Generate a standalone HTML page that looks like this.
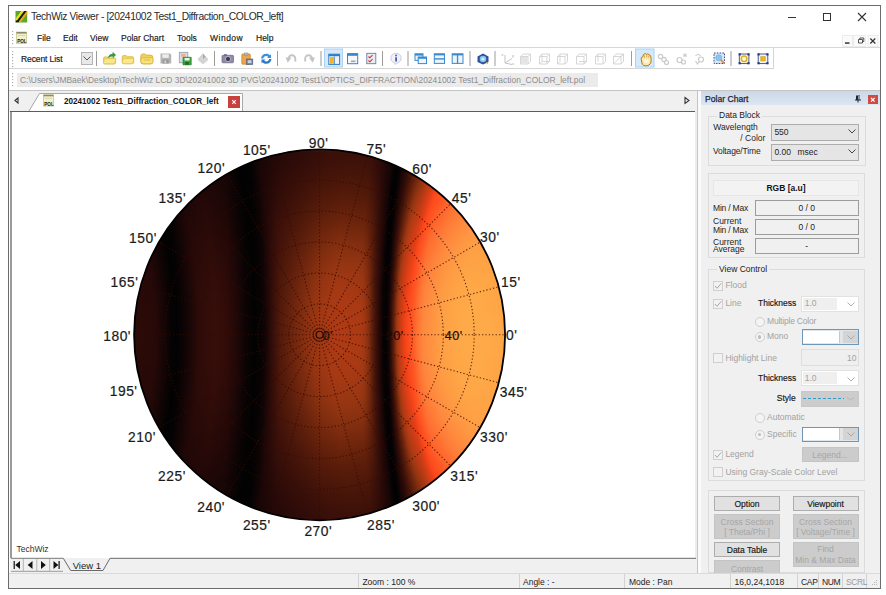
<!DOCTYPE html>
<html><head><meta charset="utf-8">
<style>
*{box-sizing:border-box;margin:0;padding:0}
html,body{width:886px;height:595px;overflow:hidden;background:#fff;font-family:"Liberation Sans",sans-serif;color:#1e1e1e}
.a{position:absolute}
.t{position:absolute;white-space:nowrap;line-height:1;font-size:8.5px}
.m{color:#141414;-webkit-text-stroke:0.15px #141414}
.g{color:#a2a2a2}
.gb{position:absolute;border:1px solid #dcdcdc}
.cb{position:absolute;width:10px;height:10px;border:1px solid #cfcfcf;background:#f2f2f2}
.rd{position:absolute;width:10px;height:10px;border:1px solid #cfcfcf;border-radius:50%;background:#f4f4f4}
.btn{position:absolute;border:1px solid #adadad;background:#e1e1e1;font-size:8.5px;line-height:1;text-align:center;color:#141414}
.dbtn{position:absolute;border:1px solid #c4c4c4;background:#cccccc;font-size:8.5px;line-height:1.25;text-align:center;color:#a6a6a6}
.sep{position:absolute;width:1px;background:#d2d2d2}
.tsep{position:absolute;top:51px;width:1px;height:15px;background:#a0a0a0}
</style></head><body>
<!-- window frame -->
<div class="a" style="left:8px;top:5px;width:873px;height:584px;border:1px solid #6c6c6c;background:#fff"></div>
<!-- ===== title bar ===== -->
<svg class="a" style="left:15px;top:11px" width="13" height="12" viewBox="0 0 13 12">
<defs><clipPath id="tic"><rect x="0.5" y="0" width="11.7" height="11.5"/></clipPath></defs>
<g clip-path="url(#tic)">
<rect x="0" y="0" width="13" height="12" fill="#5aa82a"/>
<path d="M-2 11L7-1h3L1 11z" fill="#e8e020"/>
<path d="M1 11L10-1h2.5L3.5 11z" fill="#1a1a08"/>
<path d="M3.5 11L12.5-1H15L6 11z" fill="#f0a020"/>
<path d="M-2 3L2-1H0z" fill="#8ad040"/>
<rect x="0.5" y="9.5" width="3" height="2" fill="#101008"/>
</g>
</svg>

<div class="t" style="left:31px;top:12px;font-size:10.3px;letter-spacing:-0.4px;color:#2a2a2a">TechWiz Viewer - [20241002 Test1_Diffraction_COLOR_left]</div>
<div class="a" style="left:788px;top:16.5px;width:8px;height:1px;background:#333"></div>
<div class="a" style="left:823px;top:13px;width:8px;height:8px;border:1px solid #333"></div>
<svg class="a" style="left:857px;top:12px" width="10" height="10"><path d="M1 1L9 9M9 1L1 9" stroke="#333" stroke-width="1.1"/></svg>
<!-- ===== menu bar ===== -->
<div class="a" style="left:9px;top:47px;width:871px;height:1px;background:#d8d8d8"></div>
<svg class="a" style="left:15px;top:31px" width="15" height="14" viewBox="0 0 15 14">
<rect x="1.5" y="1" width="10" height="11.5" fill="#f2f0c8" stroke="#c8c890" stroke-width="0.8"/>
<rect x="1.5" y="1" width="10" height="1.6" fill="#8a8a70"/>
<rect x="3" y="4" width="7" height="1" fill="#d8d8a8"/>
<text x="2.2" y="12.2" font-family="Liberation Sans" font-weight="bold" font-size="4.6" fill="#111">POL</text>
</svg>

<div class="t m" style="left:37px;top:34.3px">File</div>
<div class="t m" style="left:63px;top:34.3px">Edit</div>
<div class="t m" style="left:90px;top:34.3px">View</div>
<div class="t m" style="left:121px;top:34.3px">Polar Chart</div>
<div class="t m" style="left:177px;top:34.3px">Tools</div>
<div class="t m" style="left:210px;top:34.3px;letter-spacing:0.5px">Window</div>
<div class="t m" style="left:256px;top:34.3px">Help</div>
<svg class="a" style="left:840px;top:34px" width="40" height="14" viewBox="0 0 40 14">
<rect x="2.5" y="1.5" width="10" height="11" fill="#fafafa" stroke="#ececec" stroke-width="1"/>
<rect x="13.5" y="1.5" width="12" height="11" fill="#fafafa" stroke="#ececec" stroke-width="1"/>
<rect x="28" y="1.5" width="10" height="11" fill="#fafafa" stroke="#ececec" stroke-width="1"/>
<rect x="5" y="8.3" width="4.5" height="1.5" fill="#333"/>
<path d="M18.5 5.5h4v3.5h-4zM19.8 5.5V4h4v3.5h-1.3" fill="none" stroke="#444" stroke-width="0.9"/>
<path d="M30.3 4.5l5 5M35.3 4.5l-5 5" stroke="#333" stroke-width="1.2"/>
</svg>

<!-- ===== toolbar ===== -->
<div class="a" style="left:9px;top:68px;width:765px;height:1px;background:#d4d4d4"></div>
<div class="a" style="left:773px;top:48px;width:1px;height:21px;background:#d4d4d4"></div>
<div class="t m" style="left:21px;top:54.7px;letter-spacing:-0.1px">Recent List</div>
<div class="a" style="left:81px;top:52px;width:12px;height:13px;border:1px solid #b4b4b4;background:#e8e8e8"></div>
<svg class="a" style="left:83px;top:56px" width="8" height="5"><path d="M0.5 0.5L4 4L7.5 0.5" fill="none" stroke="#555" stroke-width="1"/></svg>
<svg class="a" style="left:0;top:0" width="886" height="70" viewBox="0 0 886 70">
<!-- separators -->
<g fill="#9c9c9c"><rect x="96" y="51" width="1" height="15"/><rect x="214" y="51" width="1" height="15"/><rect x="277" y="51" width="1" height="15"/><rect x="320.5" y="51" width="1" height="15"/><rect x="382" y="51" width="1" height="15"/><rect x="407.5" y="51" width="1" height="15"/><rect x="469.5" y="51" width="1" height="15"/><rect x="494.5" y="51" width="1" height="15"/><rect x="631" y="51" width="1" height="15"/><rect x="730.5" y="51" width="1" height="15"/></g>
<!-- highlighted buttons -->
<rect x="324.5" y="49" width="18" height="18" fill="#d5e9fa" stroke="#a9d2f3" stroke-width="1"/>
<rect x="635.5" y="49" width="18.5" height="18" fill="#d5e9fa" stroke="#a9d2f3" stroke-width="1"/>
<!-- 1 folder + green arrow -->
<path d="M103.6 58.2q0-1.3 1.3-1.3h2.6l1.2 1h5.6q1.3 0 1.3 1.3v3.6q0 1.2-1.3 1.2h-9.4q-1.3 0-1.3-1.2z" fill="#f4d862" stroke="#d8b43a" stroke-width="0.8"/>
<path d="M103.6 62.5l0.8-3q0.3-0.8 1.1-0.8h9.6q1 0 0.7 0.9l-0.9 2.9q-0.3 1.2-1.3 1.2h-8.8q-1.3 0-1.2-1.2z" fill="#fae88c" stroke="#dcbc48" stroke-width="0.6"/>
<path d="M108.3 57.6q0.8-3.6 4.6-3.6l0-1.6 2.8 2.6-2.8 2.6 0-1.6q-2.4 0-4.6 1.6z" fill="#3c9c3a" stroke="#26802a" stroke-width="0.5"/>
<!-- 2 folder -->
<path d="M122.2 57q0-1.4 1.4-1.4h2.4l1.3 1.1h5q1.4 0 1.4 1.4v4.3q0 1.3-1.4 1.3h-8.7q-1.4 0-1.4-1.3z" fill="#f4d862" stroke="#d8b43a" stroke-width="0.8"/>
<path d="M122.3 62.6l0.6-3.2q0.2-0.9 1.1-0.9h8.6q1 0 0.9 0.9l-0.4 3.2q-0.2 1.1-1.3 1.1h-8.2q-1.4 0-1.3-1.1z" fill="#fae88c" stroke="#dcbc48" stroke-width="0.6"/>
<!-- 3 folder stacked -->
<path d="M140.8 56.2q0-2.3 2.3-2.3h1.8l1.3 1.2h4.4q2.2 0 2.2 2.2v4.4q0 2.2-2.2 2.2h-7.5q-2.3 0-2.3-2.2z" fill="#f0d256" stroke="#d4ac30" stroke-width="0.8"/>
<path d="M141 59.3q0-1.5 1.5-1.5h9q1.5 0 1.5 1.5v2.3q0 2.2-2.2 2.2h-7.6q-2.2 0-2.2-2.2z" fill="#f8e47c" stroke="#d4ac30" stroke-width="0.7"/>
<rect x="143.6" y="59.4" width="6.8" height="1.2" fill="#e2c040"/>
<!-- 4 floppy gray -->
<path d="M160.5 53.5h9.5l1.2 1.2v8.8h-10.7z" fill="#b4b4b4"/>
<rect x="162.3" y="54.3" width="6.5" height="3.6" fill="#ededed"/>
<rect x="162.5" y="59.5" width="6.2" height="4" fill="#9a9a9a"/>
<rect x="164.5" y="60.5" width="1.6" height="2.5" fill="#d8d8d8"/>
<!-- 5 save as -->
<rect x="179.3" y="52.3" width="8.5" height="10.5" fill="#d8dde8" stroke="#8d9ab0" stroke-width="0.8"/>
<rect x="181" y="53.8" width="4.5" height="3" fill="#f0b090"/>
<path d="M183 57.3h8.2v7.5h-8.2z" fill="#3aa33a" stroke="#23801f" stroke-width="0.7"/>
<rect x="184.6" y="58" width="5" height="2.5" fill="#e8f5e8"/>
<rect x="185.2" y="62" width="3.6" height="2.8" fill="#1f6e1f"/>
<!-- 6 gray diamond -->
<path d="M203 53.7l4.5 5.2-4.5 4.3-4.6-4.3z" fill="#d4d4d4" stroke="#bdbdbd" stroke-width="0.6"/>
<path d="M198.6 59l4.4 4.2 4.4-4.2v1.8l-4.4 3-4.4-3z" fill="#ececec" stroke="#c4c4c4" stroke-width="0.5"/>
<path d="M203 53.7l2.5 3-2.5 2.4z" fill="#a8a8a8"/>
<!-- 7 camera -->
<rect x="222" y="55.3" width="11.5" height="7.5" rx="1" fill="#8e8aa8" stroke="#6a6684" stroke-width="0.7"/>
<rect x="224" y="54.2" width="3" height="1.5" fill="#6a6684"/>
<circle cx="228" cy="59" r="2.6" fill="#3a3850" stroke="#c8c8d8" stroke-width="0.8"/>
<!-- 8 clipboard -->
<rect x="241.8" y="54" width="8.5" height="10.2" rx="0.8" fill="#eaa64a" stroke="#c9832a" stroke-width="0.7"/>
<rect x="244.2" y="53" width="3.8" height="2.2" fill="#b8b8b8" stroke="#888" stroke-width="0.5"/>
<rect x="246.5" y="59" width="6.3" height="5.5" fill="#6f7c9c" stroke="#4c587a" stroke-width="0.6"/>
<rect x="247.7" y="60.2" width="3.8" height="3" fill="#c9d0e2"/>
<!-- 9 refresh -->
<path d="M261 58.5c0.3-3 2.6-4.8 5.2-4.8 1.6 0 2.9 0.6 3.8 1.6l1-1.2v4h-4l1.3-1.2c-0.6-0.6-1.3-0.9-2.1-0.9-1.6 0-2.7 1.1-2.9 2.5z" fill="#3a8fe0"/>
<path d="M271.5 59c-0.3 3-2.6 4.8-5.2 4.8-1.6 0-2.9-0.6-3.8-1.6l-1 1.2v-4h4l-1.3 1.2c0.6 0.6 1.3 0.9 2.1 0.9 1.6 0 2.7-1.1 2.9-2.5z" fill="#2a78cc"/>
<!-- 10 undo / 11 redo gray -->
<path d="M295.3 61.5V58.6A3.4 3.4 0 0 0 288.5 58.6" fill="none" stroke="#c4c4c4" stroke-width="1.9"/>
<path d="M285.6 57.6L291.6 57.6L287.8 62.8Z" fill="#c4c4c4"/>
<path d="M305.2 61.5V58.6A3.4 3.4 0 0 1 312 58.6" fill="none" stroke="#c4c4c4" stroke-width="1.9"/>
<path d="M314.9 57.6L308.9 57.6L312.7 62.8Z" fill="#c4c4c4"/>
<!-- 12 layout icon -->
<rect x="328.8" y="54.2" width="10.8" height="10.2" fill="#eef4fb" stroke="#2f7dc8" stroke-width="1"/>
<rect x="328.8" y="54.2" width="10.8" height="2" fill="#2f7dc8"/>
<rect x="330" y="57" width="3.6" height="6.8" fill="#f2b430"/>
<rect x="333.8" y="56.5" width="0.9" height="7.6" fill="#2f7dc8"/>
<!-- 13 window icon -->
<rect x="347.5" y="53.6" width="10.2" height="10.1" fill="#f4f8fc" stroke="#3a86cc" stroke-width="1"/>
<rect x="347.5" y="53.6" width="10.2" height="2.2" fill="#3a86cc"/>
<rect x="351" y="60.5" width="4.5" height="1.6" fill="#9aaabb"/>
<!-- 14 checklist -->
<rect x="366.8" y="53.3" width="9" height="10.4" fill="#e8ecf4" stroke="#6a7ea8" stroke-width="0.9"/>
<path d="M368.5 56.5l1.3 1.3 2.7-2.6M368.5 60.5l1.3 1.3 2.7-2.6" fill="none" stroke="#d03030" stroke-width="1.1"/>
<!-- 15 info -->
<path d="M396 53.2c3 0 5.2 2.2 5.2 5 0 2.6-2 4.6-4.6 5l-1.5 1.3v-1.4c-2.4-0.5-4.3-2.4-4.3-4.9 0-2.8 2.2-5 5.2-5z" fill="#f2f0f8" stroke="#c0b8d0" stroke-width="0.7"/>
<rect x="395.2" y="57.3" width="1.8" height="4.2" fill="#3a62b8"/><circle cx="396.1" cy="55.5" r="0.95" fill="#3a62b8"/>
<!-- 16 cascade -->
<rect x="415" y="53.8" width="8" height="6.6" fill="#eef4fb" stroke="#3a8ad0" stroke-width="1"/>
<rect x="415" y="53.8" width="8" height="1.8" fill="#3a8ad0"/>
<rect x="418.2" y="57" width="8.3" height="6.6" fill="#eef4fb" stroke="#3a8ad0" stroke-width="1"/>
<rect x="418.2" y="57" width="8.3" height="1.8" fill="#3a8ad0"/>
<!-- 17 horizontal tile -->
<rect x="434.3" y="53.8" width="10.2" height="9.6" fill="#eef4fb" stroke="#3a8ad0" stroke-width="1"/>
<rect x="434.3" y="53.8" width="10.2" height="1.6" fill="#3a8ad0"/>
<rect x="434.3" y="58.2" width="10.2" height="1.4" fill="#3a8ad0"/>
<!-- 18 vertical tile -->
<rect x="452.2" y="53.8" width="10.8" height="9.6" fill="#eef4fb" stroke="#3a8ad0" stroke-width="1"/>
<rect x="452.2" y="53.8" width="10.8" height="1.6" fill="#3a8ad0"/>
<rect x="456.9" y="54" width="1.3" height="9.4" fill="#3a8ad0"/>
<!-- 19 globe -->
<path d="M483 53.5l5.5 3v5.5l-5.5 2.5-5.5-2.5v-5.5z" fill="#2f4f9a"/>
<circle cx="483" cy="59" r="3.3" fill="#7fc4ee"/>
<circle cx="483" cy="59" r="1.6" fill="#d8f0ff"/>
<path d="M486 62l2.5 1-1.5 1.3z" fill="#e6a030"/>
<!-- 20 axis -->
<g stroke="#bdbdbd" stroke-width="0.9" fill="none"><path d="M505 55v8l7-4.5M505 63l7 1.5"/></g>
<g fill="#a8a8a8" font-size="4" font-family="Liberation Sans"><text x="501.5" y="55.5">z</text><text x="512" y="57">y</text><text x="512" y="65">x</text></g>
<!-- cubes -->
<g fill="none" stroke="#cdcdcd" stroke-width="0.8">
<path d="M520.5 56.5h7.5v7.5h-7.5zM520.5 56.5l2.5-2.5h7.5l-2.5 2.5M530.5 54v7.5l-2.5 2.5"/>
<path d="M539.5 56.5h7.5v7.5h-7.5zM539.5 56.5l2.5-2.5h7.5l-2.5 2.5M549.5 54v7.5l-2.5 2.5M542 54v7.5l-2.5 2.5M542 61.5h7.5"/>
<path d="M557.5 56.5h7.5v7.5h-7.5zM557.5 56.5l2.5-2.5h7.5l-2.5 2.5M567.5 54v7.5l-2.5 2.5M560 54v7.5l-2.5 2.5"/>
<path d="M576.5 56.5h7.5v7.5h-7.5zM576.5 56.5l2.5-2.5h7.5l-2.5 2.5M586.5 54v7.5l-2.5 2.5M579 61.5h7.5"/>
<path d="M595.5 56.5h7.5v7.5h-7.5zM595.5 56.5l2.5-2.5h7.5l-2.5 2.5M605.5 54v7.5l-2.5 2.5M598 54v7.5"/>
<path d="M613.5 56.5h7.5v7.5h-7.5zM613.5 56.5l2.5-2.5h7.5l-2.5 2.5M623.5 54v7.5l-2.5 2.5M613.5 64l10-10"/>
</g>
<g fill="#e4e4e4"><rect x="521" y="57" width="6.5" height="6.5"/></g>
<!-- 27 hand -->
<path d="M641.2 59.3q-0.4-2.6 1.6-2.4q0.2-3 2.1-3.2q1-0.2 1.6 0.6q1.4-0.9 2.4 0.3q2.2 0.3 2 3.2l0.3 2.6q0.2 3.2-2.2 4.6q-1.6 0.9-3.4 0.8q-2.2-0.1-3.4-1.8z" fill="#ffe8a8" stroke="#b07c1c" stroke-width="1"/>
<path d="M644.5 57.8v-2.4M646.7 57.5v-2.6M648.7 57.8v-2.2" stroke="#c89030" stroke-width="0.7"/>
<ellipse cx="646.3" cy="61.3" rx="2.6" ry="1.8" fill="#fff6dc"/>
<!-- 28-30 gray -->
<g fill="none" stroke="#cbcbcb" stroke-width="1.2">
<circle cx="660.5" cy="56.5" r="2.2"/><circle cx="664" cy="59.5" r="2.2"/><circle cx="666.5" cy="62.5" r="2"/>
<circle cx="679.5" cy="60" r="2.5"/><circle cx="683.5" cy="62" r="2"/><path d="M684 53.5v3.5M686 53.5v3.5M684 55.3h2"/>
<path d="M695.5 56c1.5-2 4-2 5 0"/><circle cx="701" cy="59.5" r="2.5"/><path d="M695.5 61l2 3 1.5-2"/>
</g>
<!-- 31 zoom rect -->
<rect x="714" y="53" width="10.5" height="10.5" fill="#d4e8f8" stroke="#2a3a80" stroke-width="0.9" stroke-dasharray="1.6 1.2"/>
<circle cx="718.8" cy="57.8" r="3" fill="#8cc6ee" stroke="#6aa8d8" stroke-width="0.6"/>
<path d="M720.8 59.8l3.5 3.5" stroke="#e08a40" stroke-width="1.8"/>
<!-- 32 fit1 -->
<rect x="739.3" y="54" width="9.6" height="9.6" fill="#fdf6d0" stroke="#3a4a8a" stroke-width="0.9"/>
<circle cx="744.1" cy="58.8" r="2.8" fill="none" stroke="#d8b020" stroke-width="1.4"/>
<g fill="#2a3a80"><rect x="738.6" y="53.3" width="2.2" height="2.2"/><rect x="747.4" y="53.3" width="2.2" height="2.2"/><rect x="738.6" y="62.1" width="2.2" height="2.2"/><rect x="747.4" y="62.1" width="2.2" height="2.2"/></g>
<!-- 33 fit2 -->
<rect x="758.2" y="54" width="9.6" height="9.6" fill="#f4f4f8" stroke="#3a4a8a" stroke-width="0.9"/>
<rect x="760.8" y="56.6" width="4.4" height="4.4" fill="#e8b820" stroke="#c89a10" stroke-width="0.5"/>
<g fill="#2a3a80"><rect x="757.5" y="53.3" width="2.2" height="2.2"/><rect x="766.3" y="53.3" width="2.2" height="2.2"/><rect x="757.5" y="62.1" width="2.2" height="2.2"/><rect x="766.3" y="62.1" width="2.2" height="2.2"/></g>
</svg>

<!-- ===== path bar ===== -->
<div class="a" style="left:17px;top:73px;width:581px;height:14px;background:#ebebeb"></div>
<div class="t" style="left:20px;top:75.8px;font-size:8.45px;color:#8c8c8c">C:\Users\JMBaek\Desktop\TechWiz LCD 3D\20241002 3D PVG\20241002 Test1\OPTICS_DIFFRACTION\20241002 Test1_Diffraction_COLOR_left.pol</div>
<!-- grippers -->
<svg class="a" style="left:11px;top:30px" width="4" height="60">
<g fill="#b0b0b0"><rect x="1" y="1" width="1.2" height="1.2"/><rect x="1" y="4" width="1.2" height="1.2"/><rect x="1" y="7" width="1.2" height="1.2"/><rect x="1" y="10" width="1.2" height="1.2"/><rect x="1" y="13" width="1.2" height="1.2"/>
<rect x="1" y="21" width="1.2" height="1.2"/><rect x="1" y="24" width="1.2" height="1.2"/><rect x="1" y="27" width="1.2" height="1.2"/><rect x="1" y="30" width="1.2" height="1.2"/><rect x="1" y="33" width="1.2" height="1.2"/><rect x="1" y="36" width="1.2" height="1.2"/>
<rect x="1" y="43" width="1.2" height="1.2"/><rect x="1" y="46" width="1.2" height="1.2"/><rect x="1" y="49" width="1.2" height="1.2"/><rect x="1" y="52" width="1.2" height="1.2"/><rect x="1" y="55" width="1.2" height="1.2"/></g></svg>
<div class="a" style="left:9px;top:90px;width:871px;height:1px;background:#c4c4c4"></div>
<!-- ===== tab bar ===== -->
<div class="a" style="left:9px;top:91px;width:688px;height:21px;background:#f0f0f0"></div>
<svg class="a" style="left:9px;top:91px" width="688" height="21">
<path d="M6 9.5L9 7V12Z" fill="none" stroke="#333" stroke-width="1.1"/>
<path d="M20 20L30.5 2.5H233.5V20" fill="#fff" stroke="#a8a8a8" stroke-width="1"/>
<path d="M676 6.5L680 9.5L676 12.5Z" fill="none" stroke="#333" stroke-width="1.1"/>
</svg>
<div class="t" style="left:64px;top:97.6px;font-size:8.15px;font-weight:bold;color:#141414">20241002 Test1_Diffraction_COLOR_left</div>
<div class="a" style="left:228px;top:96px;width:12px;height:12px;background:#c9403c"></div>
<svg class="a" style="left:228px;top:96px" width="12" height="12"><path d="M4.2 4.2L7.8 7.8M7.8 4.2L4.2 7.8" stroke="#fff" stroke-width="1.1"/></svg>
<svg class="a" style="left:42px;top:94px" width="14" height="13" viewBox="0 0 14 13">
<rect x="1.5" y="0.8" width="10" height="11.3" fill="#f2f0c8" stroke="#c8c890" stroke-width="0.8"/>
<rect x="1.5" y="0.8" width="10" height="1.5" fill="#8a8a70"/>
<rect x="3" y="3.8" width="7" height="1" fill="#d8d8a8"/>
<text x="2.3" y="11.6" font-family="Liberation Sans" font-weight="bold" font-size="4.6" fill="#111">POL</text>
</svg>

<div class="a" style="left:10px;top:110.5px;width:685px;height:1.5px;background:#5c5c5c"></div>
<!-- ===== document area ===== -->
<div class="a" style="left:10px;top:112px;width:2px;height:446px;background:#9a9a9a"></div>
<div class="a" style="left:694.5px;top:112px;width:2.5px;height:446px;background:#ececec"></div>
<svg class="a" style="left:0;top:0" width="886" height="595" viewBox="0 0 886 595">
<defs><clipPath id="cc"><circle cx="319.6" cy="334.8" r="185.5"/></clipPath>
<filter id="vb" x="-5%" y="-5%" width="110%" height="110%" color-interpolation-filters="sRGB"><feGaussianBlur stdDeviation="0 1.5"/></filter>
<linearGradient id="g0" gradientUnits="userSpaceOnUse" x1="133.1" x2="506.1" y1="0" y2="0"><stop offset="0.000" stop-color="#0a0102"/><stop offset="0.023" stop-color="#000000"/><stop offset="0.046" stop-color="#020000"/><stop offset="0.088" stop-color="#150304"/><stop offset="0.184" stop-color="#180404"/><stop offset="0.235" stop-color="#130304"/><stop offset="0.276" stop-color="#000000"/><stop offset="0.306" stop-color="#020000"/><stop offset="0.322" stop-color="#0c0202"/><stop offset="0.334" stop-color="#160304"/><stop offset="0.413" stop-color="#270806"/><stop offset="0.531" stop-color="#370d07"/><stop offset="0.622" stop-color="#390e07"/><stop offset="0.645" stop-color="#350c07"/><stop offset="0.668" stop-color="#260706"/><stop offset="0.689" stop-color="#170404"/><stop offset="0.698" stop-color="#110303"/><stop offset="0.708" stop-color="#010000"/><stop offset="0.718" stop-color="#000000"/><stop offset="0.724" stop-color="#090102"/><stop offset="0.729" stop-color="#150304"/><stop offset="0.740" stop-color="#200605"/><stop offset="0.783" stop-color="#611e09"/><stop offset="0.798" stop-color="#77280c"/><stop offset="0.816" stop-color="#a53812"/><stop offset="0.835" stop-color="#ca3b13"/><stop offset="0.881" stop-color="#f64318"/><stop offset="0.898" stop-color="#ff491b"/><stop offset="0.981" stop-color="#ff642a"/><stop offset="1.000" stop-color="#ff642a"/></linearGradient>
<linearGradient id="g1" gradientUnits="userSpaceOnUse" x1="133.1" x2="506.1" y1="0" y2="0"><stop offset="0.000" stop-color="#0c0202"/><stop offset="0.025" stop-color="#000000"/><stop offset="0.048" stop-color="#020000"/><stop offset="0.091" stop-color="#150304"/><stop offset="0.184" stop-color="#190404"/><stop offset="0.236" stop-color="#130304"/><stop offset="0.277" stop-color="#000000"/><stop offset="0.306" stop-color="#010000"/><stop offset="0.323" stop-color="#0c0202"/><stop offset="0.335" stop-color="#160404"/><stop offset="0.409" stop-color="#270806"/><stop offset="0.528" stop-color="#380e07"/><stop offset="0.614" stop-color="#3a0e07"/><stop offset="0.642" stop-color="#360d07"/><stop offset="0.666" stop-color="#270806"/><stop offset="0.688" stop-color="#180404"/><stop offset="0.697" stop-color="#120303"/><stop offset="0.706" stop-color="#020000"/><stop offset="0.717" stop-color="#000000"/><stop offset="0.723" stop-color="#090102"/><stop offset="0.728" stop-color="#150304"/><stop offset="0.739" stop-color="#210605"/><stop offset="0.783" stop-color="#652009"/><stop offset="0.796" stop-color="#7a290c"/><stop offset="0.814" stop-color="#a63812"/><stop offset="0.832" stop-color="#cb3b13"/><stop offset="0.866" stop-color="#ed4017"/><stop offset="0.887" stop-color="#fd471a"/><stop offset="0.968" stop-color="#ff6329"/><stop offset="1.000" stop-color="#ff662b"/></linearGradient>
<linearGradient id="g2" gradientUnits="userSpaceOnUse" x1="133.1" x2="506.1" y1="0" y2="0"><stop offset="0.000" stop-color="#0d0203"/><stop offset="0.028" stop-color="#000000"/><stop offset="0.051" stop-color="#020000"/><stop offset="0.094" stop-color="#160404"/><stop offset="0.184" stop-color="#190404"/><stop offset="0.237" stop-color="#130304"/><stop offset="0.279" stop-color="#000000"/><stop offset="0.307" stop-color="#020000"/><stop offset="0.323" stop-color="#0b0102"/><stop offset="0.335" stop-color="#160404"/><stop offset="0.405" stop-color="#270806"/><stop offset="0.525" stop-color="#390e07"/><stop offset="0.606" stop-color="#3b0f07"/><stop offset="0.639" stop-color="#380e07"/><stop offset="0.665" stop-color="#280806"/><stop offset="0.686" stop-color="#180404"/><stop offset="0.696" stop-color="#120303"/><stop offset="0.705" stop-color="#020000"/><stop offset="0.716" stop-color="#000000"/><stop offset="0.721" stop-color="#090102"/><stop offset="0.727" stop-color="#150304"/><stop offset="0.737" stop-color="#210605"/><stop offset="0.782" stop-color="#68220a"/><stop offset="0.795" stop-color="#7e2b0d"/><stop offset="0.811" stop-color="#a73812"/><stop offset="0.831" stop-color="#cf3b13"/><stop offset="0.874" stop-color="#f94519"/><stop offset="0.890" stop-color="#ff4a1c"/><stop offset="0.973" stop-color="#ff672b"/><stop offset="1.000" stop-color="#ff682c"/></linearGradient>
<linearGradient id="g3" gradientUnits="userSpaceOnUse" x1="133.1" x2="506.1" y1="0" y2="0"><stop offset="0.000" stop-color="#0e0203"/><stop offset="0.031" stop-color="#000000"/><stop offset="0.054" stop-color="#020000"/><stop offset="0.097" stop-color="#160404"/><stop offset="0.184" stop-color="#1a0405"/><stop offset="0.239" stop-color="#140304"/><stop offset="0.280" stop-color="#000000"/><stop offset="0.308" stop-color="#020000"/><stop offset="0.324" stop-color="#0c0202"/><stop offset="0.336" stop-color="#160404"/><stop offset="0.402" stop-color="#270806"/><stop offset="0.524" stop-color="#3a0e07"/><stop offset="0.602" stop-color="#3d0f07"/><stop offset="0.639" stop-color="#390e07"/><stop offset="0.664" stop-color="#2a0806"/><stop offset="0.685" stop-color="#190404"/><stop offset="0.694" stop-color="#130304"/><stop offset="0.704" stop-color="#020000"/><stop offset="0.714" stop-color="#000000"/><stop offset="0.720" stop-color="#090102"/><stop offset="0.725" stop-color="#150304"/><stop offset="0.736" stop-color="#220606"/><stop offset="0.780" stop-color="#6c230a"/><stop offset="0.794" stop-color="#822d0e"/><stop offset="0.808" stop-color="#a83812"/><stop offset="0.828" stop-color="#d03b14"/><stop offset="0.862" stop-color="#f44318"/><stop offset="0.879" stop-color="#fe481b"/><stop offset="0.968" stop-color="#ff692c"/><stop offset="1.000" stop-color="#ff6a2d"/></linearGradient>
<linearGradient id="g4" gradientUnits="userSpaceOnUse" x1="133.1" x2="506.1" y1="0" y2="0"><stop offset="0.000" stop-color="#100203"/><stop offset="0.034" stop-color="#000000"/><stop offset="0.056" stop-color="#020000"/><stop offset="0.098" stop-color="#160404"/><stop offset="0.181" stop-color="#1a0505"/><stop offset="0.239" stop-color="#140304"/><stop offset="0.282" stop-color="#000000"/><stop offset="0.310" stop-color="#020000"/><stop offset="0.326" stop-color="#0c0202"/><stop offset="0.338" stop-color="#160404"/><stop offset="0.401" stop-color="#280806"/><stop offset="0.523" stop-color="#3c0f07"/><stop offset="0.598" stop-color="#3e1007"/><stop offset="0.638" stop-color="#3b0f07"/><stop offset="0.662" stop-color="#2b0906"/><stop offset="0.684" stop-color="#190405"/><stop offset="0.693" stop-color="#130304"/><stop offset="0.702" stop-color="#020000"/><stop offset="0.710" stop-color="#000000"/><stop offset="0.716" stop-color="#030001"/><stop offset="0.724" stop-color="#150304"/><stop offset="0.735" stop-color="#230706"/><stop offset="0.779" stop-color="#6f250b"/><stop offset="0.792" stop-color="#872e0e"/><stop offset="0.807" stop-color="#ac3812"/><stop offset="0.827" stop-color="#d43b14"/><stop offset="0.855" stop-color="#f34218"/><stop offset="0.873" stop-color="#fe481b"/><stop offset="0.964" stop-color="#ff6a2d"/><stop offset="1.000" stop-color="#ff6c2e"/></linearGradient>
<linearGradient id="g5" gradientUnits="userSpaceOnUse" x1="133.1" x2="506.1" y1="0" y2="0"><stop offset="0.000" stop-color="#110303"/><stop offset="0.036" stop-color="#000000"/><stop offset="0.058" stop-color="#020000"/><stop offset="0.101" stop-color="#160404"/><stop offset="0.181" stop-color="#1b0505"/><stop offset="0.240" stop-color="#140304"/><stop offset="0.283" stop-color="#000000"/><stop offset="0.310" stop-color="#010000"/><stop offset="0.327" stop-color="#0d0202"/><stop offset="0.339" stop-color="#170404"/><stop offset="0.398" stop-color="#280806"/><stop offset="0.520" stop-color="#3d0f07"/><stop offset="0.594" stop-color="#401107"/><stop offset="0.637" stop-color="#3d0f07"/><stop offset="0.661" stop-color="#2d0906"/><stop offset="0.682" stop-color="#1a0405"/><stop offset="0.692" stop-color="#140304"/><stop offset="0.701" stop-color="#030001"/><stop offset="0.708" stop-color="#000000"/><stop offset="0.713" stop-color="#010000"/><stop offset="0.718" stop-color="#0c0202"/><stop offset="0.723" stop-color="#150304"/><stop offset="0.733" stop-color="#230706"/><stop offset="0.777" stop-color="#73260b"/><stop offset="0.791" stop-color="#8b300f"/><stop offset="0.804" stop-color="#ad3912"/><stop offset="0.826" stop-color="#d83c14"/><stop offset="0.847" stop-color="#f14217"/><stop offset="0.866" stop-color="#fe481b"/><stop offset="0.960" stop-color="#ff6c2e"/><stop offset="1.000" stop-color="#ff6e2f"/></linearGradient>
<linearGradient id="g6" gradientUnits="userSpaceOnUse" x1="133.1" x2="506.1" y1="0" y2="0"><stop offset="0.000" stop-color="#130304"/><stop offset="0.039" stop-color="#000000"/><stop offset="0.060" stop-color="#020000"/><stop offset="0.103" stop-color="#170404"/><stop offset="0.181" stop-color="#1b0505"/><stop offset="0.241" stop-color="#150304"/><stop offset="0.284" stop-color="#000000"/><stop offset="0.311" stop-color="#020000"/><stop offset="0.327" stop-color="#0c0202"/><stop offset="0.339" stop-color="#170404"/><stop offset="0.397" stop-color="#290806"/><stop offset="0.519" stop-color="#3e1007"/><stop offset="0.590" stop-color="#421207"/><stop offset="0.635" stop-color="#3e1007"/><stop offset="0.660" stop-color="#2e0a06"/><stop offset="0.681" stop-color="#1b0505"/><stop offset="0.692" stop-color="#120303"/><stop offset="0.701" stop-color="#020000"/><stop offset="0.712" stop-color="#010000"/><stop offset="0.717" stop-color="#0b0102"/><stop offset="0.723" stop-color="#170404"/><stop offset="0.732" stop-color="#240706"/><stop offset="0.775" stop-color="#74270b"/><stop offset="0.788" stop-color="#8c300f"/><stop offset="0.802" stop-color="#ae3912"/><stop offset="0.823" stop-color="#da3c14"/><stop offset="0.840" stop-color="#f04117"/><stop offset="0.861" stop-color="#fe481b"/><stop offset="0.954" stop-color="#ff6e2f"/><stop offset="0.995" stop-color="#ff7030"/><stop offset="1.000" stop-color="#ff7030"/></linearGradient>
<linearGradient id="g7" gradientUnits="userSpaceOnUse" x1="133.1" x2="506.1" y1="0" y2="0"><stop offset="0.000" stop-color="#140304"/><stop offset="0.042" stop-color="#000000"/><stop offset="0.063" stop-color="#020000"/><stop offset="0.106" stop-color="#170404"/><stop offset="0.181" stop-color="#1c0505"/><stop offset="0.241" stop-color="#150304"/><stop offset="0.286" stop-color="#000000"/><stop offset="0.312" stop-color="#020000"/><stop offset="0.328" stop-color="#0c0202"/><stop offset="0.340" stop-color="#170404"/><stop offset="0.395" stop-color="#290806"/><stop offset="0.517" stop-color="#401107"/><stop offset="0.587" stop-color="#431207"/><stop offset="0.634" stop-color="#401107"/><stop offset="0.658" stop-color="#300a06"/><stop offset="0.680" stop-color="#1b0505"/><stop offset="0.690" stop-color="#130304"/><stop offset="0.700" stop-color="#020000"/><stop offset="0.709" stop-color="#000000"/><stop offset="0.714" stop-color="#070102"/><stop offset="0.720" stop-color="#150304"/><stop offset="0.731" stop-color="#250706"/><stop offset="0.773" stop-color="#78280c"/><stop offset="0.787" stop-color="#913210"/><stop offset="0.802" stop-color="#b53913"/><stop offset="0.824" stop-color="#e33e15"/><stop offset="0.840" stop-color="#f54318"/><stop offset="0.858" stop-color="#ff491c"/><stop offset="0.949" stop-color="#ff6f30"/><stop offset="0.987" stop-color="#ff7231"/><stop offset="1.000" stop-color="#ff7131"/></linearGradient>
<linearGradient id="g8" gradientUnits="userSpaceOnUse" x1="133.1" x2="506.1" y1="0" y2="0"><stop offset="0.000" stop-color="#150304"/><stop offset="0.044" stop-color="#000000"/><stop offset="0.066" stop-color="#020000"/><stop offset="0.109" stop-color="#170404"/><stop offset="0.182" stop-color="#1c0505"/><stop offset="0.243" stop-color="#150304"/><stop offset="0.287" stop-color="#000000"/><stop offset="0.314" stop-color="#020000"/><stop offset="0.330" stop-color="#0d0203"/><stop offset="0.342" stop-color="#180404"/><stop offset="0.394" stop-color="#2a0906"/><stop offset="0.516" stop-color="#411107"/><stop offset="0.584" stop-color="#451307"/><stop offset="0.634" stop-color="#421207"/><stop offset="0.658" stop-color="#300a06"/><stop offset="0.680" stop-color="#1b0505"/><stop offset="0.689" stop-color="#140304"/><stop offset="0.698" stop-color="#020000"/><stop offset="0.708" stop-color="#000000"/><stop offset="0.713" stop-color="#070101"/><stop offset="0.720" stop-color="#170404"/><stop offset="0.729" stop-color="#260706"/><stop offset="0.771" stop-color="#7a290c"/><stop offset="0.786" stop-color="#953310"/><stop offset="0.802" stop-color="#bc3a13"/><stop offset="0.824" stop-color="#e93f16"/><stop offset="0.840" stop-color="#fa4519"/><stop offset="0.855" stop-color="#ff4b1c"/><stop offset="0.941" stop-color="#ff7030"/><stop offset="0.976" stop-color="#ff7432"/><stop offset="1.000" stop-color="#ff7332"/></linearGradient>
<linearGradient id="g9" gradientUnits="userSpaceOnUse" x1="133.1" x2="506.1" y1="0" y2="0"><stop offset="0.000" stop-color="#160404"/><stop offset="0.047" stop-color="#000000"/><stop offset="0.067" stop-color="#020000"/><stop offset="0.111" stop-color="#180404"/><stop offset="0.182" stop-color="#1d0505"/><stop offset="0.244" stop-color="#160404"/><stop offset="0.287" stop-color="#000000"/><stop offset="0.314" stop-color="#020000"/><stop offset="0.330" stop-color="#0c0202"/><stop offset="0.343" stop-color="#180404"/><stop offset="0.393" stop-color="#2b0906"/><stop offset="0.513" stop-color="#421207"/><stop offset="0.580" stop-color="#471407"/><stop offset="0.633" stop-color="#441207"/><stop offset="0.657" stop-color="#320b07"/><stop offset="0.678" stop-color="#1c0505"/><stop offset="0.688" stop-color="#140304"/><stop offset="0.697" stop-color="#030001"/><stop offset="0.704" stop-color="#000000"/><stop offset="0.709" stop-color="#020000"/><stop offset="0.714" stop-color="#0e0203"/><stop offset="0.718" stop-color="#170404"/><stop offset="0.728" stop-color="#260806"/><stop offset="0.765" stop-color="#77280c"/><stop offset="0.784" stop-color="#993511"/><stop offset="0.806" stop-color="#cb3b13"/><stop offset="0.823" stop-color="#ee4117"/><stop offset="0.838" stop-color="#fc461a"/><stop offset="0.855" stop-color="#ff4d1e"/><stop offset="0.929" stop-color="#ff6f2f"/><stop offset="0.966" stop-color="#ff7733"/><stop offset="1.000" stop-color="#ff7533"/></linearGradient>
<linearGradient id="g10" gradientUnits="userSpaceOnUse" x1="133.1" x2="506.1" y1="0" y2="0"><stop offset="0.000" stop-color="#170404"/><stop offset="0.050" stop-color="#000000"/><stop offset="0.070" stop-color="#020000"/><stop offset="0.113" stop-color="#180404"/><stop offset="0.177" stop-color="#1e0505"/><stop offset="0.243" stop-color="#170404"/><stop offset="0.290" stop-color="#000000"/><stop offset="0.315" stop-color="#020000"/><stop offset="0.331" stop-color="#0c0202"/><stop offset="0.343" stop-color="#180404"/><stop offset="0.391" stop-color="#2b0906"/><stop offset="0.512" stop-color="#441307"/><stop offset="0.578" stop-color="#491507"/><stop offset="0.631" stop-color="#461307"/><stop offset="0.655" stop-color="#340c07"/><stop offset="0.677" stop-color="#1d0505"/><stop offset="0.688" stop-color="#130304"/><stop offset="0.696" stop-color="#030001"/><stop offset="0.702" stop-color="#000000"/><stop offset="0.708" stop-color="#020000"/><stop offset="0.713" stop-color="#0d0203"/><stop offset="0.717" stop-color="#170404"/><stop offset="0.727" stop-color="#270806"/><stop offset="0.756" stop-color="#68220a"/><stop offset="0.769" stop-color="#842d0e"/><stop offset="0.784" stop-color="#a13711"/><stop offset="0.816" stop-color="#ea4016"/><stop offset="0.827" stop-color="#f84419"/><stop offset="0.842" stop-color="#ff4a1c"/><stop offset="0.920" stop-color="#ff6e2f"/><stop offset="0.960" stop-color="#ff7835"/><stop offset="1.000" stop-color="#ff7734"/></linearGradient>
<linearGradient id="g11" gradientUnits="userSpaceOnUse" x1="133.1" x2="506.1" y1="0" y2="0"><stop offset="0.000" stop-color="#180404"/><stop offset="0.031" stop-color="#0a0102"/><stop offset="0.051" stop-color="#000000"/><stop offset="0.071" stop-color="#020000"/><stop offset="0.115" stop-color="#180404"/><stop offset="0.178" stop-color="#1e0505"/><stop offset="0.244" stop-color="#170404"/><stop offset="0.290" stop-color="#000000"/><stop offset="0.315" stop-color="#010000"/><stop offset="0.331" stop-color="#0b0102"/><stop offset="0.345" stop-color="#180404"/><stop offset="0.390" stop-color="#2c0906"/><stop offset="0.511" stop-color="#461307"/><stop offset="0.576" stop-color="#4b1607"/><stop offset="0.631" stop-color="#471407"/><stop offset="0.655" stop-color="#340c07"/><stop offset="0.677" stop-color="#1d0505"/><stop offset="0.686" stop-color="#140304"/><stop offset="0.696" stop-color="#020000"/><stop offset="0.705" stop-color="#000000"/><stop offset="0.710" stop-color="#090102"/><stop offset="0.716" stop-color="#170404"/><stop offset="0.725" stop-color="#270806"/><stop offset="0.753" stop-color="#68220a"/><stop offset="0.765" stop-color="#842d0e"/><stop offset="0.783" stop-color="#a53812"/><stop offset="0.812" stop-color="#e93f16"/><stop offset="0.820" stop-color="#f74418"/><stop offset="0.832" stop-color="#ff491b"/><stop offset="0.913" stop-color="#ff6f2f"/><stop offset="0.956" stop-color="#ff7a36"/><stop offset="1.000" stop-color="#ff7935"/></linearGradient>
<linearGradient id="g12" gradientUnits="userSpaceOnUse" x1="133.1" x2="506.1" y1="0" y2="0"><stop offset="0.000" stop-color="#190404"/><stop offset="0.024" stop-color="#0f0203"/><stop offset="0.054" stop-color="#000000"/><stop offset="0.074" stop-color="#020000"/><stop offset="0.118" stop-color="#190404"/><stop offset="0.181" stop-color="#1f0605"/><stop offset="0.244" stop-color="#180404"/><stop offset="0.291" stop-color="#000000"/><stop offset="0.316" stop-color="#020000"/><stop offset="0.332" stop-color="#0c0202"/><stop offset="0.346" stop-color="#190404"/><stop offset="0.390" stop-color="#2d0906"/><stop offset="0.511" stop-color="#481407"/><stop offset="0.575" stop-color="#4d1608"/><stop offset="0.630" stop-color="#4a1507"/><stop offset="0.654" stop-color="#360d07"/><stop offset="0.676" stop-color="#1e0505"/><stop offset="0.685" stop-color="#140304"/><stop offset="0.694" stop-color="#020001"/><stop offset="0.702" stop-color="#000000"/><stop offset="0.708" stop-color="#050101"/><stop offset="0.716" stop-color="#190404"/><stop offset="0.725" stop-color="#2b0906"/><stop offset="0.751" stop-color="#68210a"/><stop offset="0.763" stop-color="#852e0e"/><stop offset="0.783" stop-color="#ac3812"/><stop offset="0.808" stop-color="#e73f16"/><stop offset="0.816" stop-color="#f74419"/><stop offset="0.827" stop-color="#ff491b"/><stop offset="0.905" stop-color="#ff6f2f"/><stop offset="0.952" stop-color="#ff7c37"/><stop offset="1.000" stop-color="#ff7b36"/></linearGradient>
<linearGradient id="g13" gradientUnits="userSpaceOnUse" x1="133.1" x2="506.1" y1="0" y2="0"><stop offset="0.000" stop-color="#1a0405"/><stop offset="0.023" stop-color="#110303"/><stop offset="0.056" stop-color="#000000"/><stop offset="0.075" stop-color="#020000"/><stop offset="0.121" stop-color="#190405"/><stop offset="0.184" stop-color="#1f0605"/><stop offset="0.245" stop-color="#180404"/><stop offset="0.292" stop-color="#000000"/><stop offset="0.318" stop-color="#020000"/><stop offset="0.334" stop-color="#0d0203"/><stop offset="0.347" stop-color="#1a0405"/><stop offset="0.390" stop-color="#2e0a06"/><stop offset="0.509" stop-color="#491507"/><stop offset="0.572" stop-color="#4f1708"/><stop offset="0.629" stop-color="#4c1607"/><stop offset="0.651" stop-color="#3a0e07"/><stop offset="0.674" stop-color="#1f0605"/><stop offset="0.685" stop-color="#130304"/><stop offset="0.693" stop-color="#030001"/><stop offset="0.700" stop-color="#000000"/><stop offset="0.705" stop-color="#020001"/><stop offset="0.710" stop-color="#0f0203"/><stop offset="0.716" stop-color="#1b0505"/><stop offset="0.731" stop-color="#3b0f07"/><stop offset="0.749" stop-color="#6b230a"/><stop offset="0.761" stop-color="#892f0f"/><stop offset="0.782" stop-color="#b03912"/><stop offset="0.806" stop-color="#e83f16"/><stop offset="0.814" stop-color="#f94519"/><stop offset="0.823" stop-color="#ff491c"/><stop offset="0.897" stop-color="#ff6f30"/><stop offset="0.948" stop-color="#ff7e38"/><stop offset="1.000" stop-color="#ff7d37"/></linearGradient>
<linearGradient id="g14" gradientUnits="userSpaceOnUse" x1="133.1" x2="506.1" y1="0" y2="0"><stop offset="0.000" stop-color="#1a0505"/><stop offset="0.021" stop-color="#130304"/><stop offset="0.058" stop-color="#000000"/><stop offset="0.078" stop-color="#020000"/><stop offset="0.122" stop-color="#1a0405"/><stop offset="0.177" stop-color="#200605"/><stop offset="0.237" stop-color="#1a0505"/><stop offset="0.260" stop-color="#110303"/><stop offset="0.292" stop-color="#010000"/><stop offset="0.318" stop-color="#020000"/><stop offset="0.334" stop-color="#0c0202"/><stop offset="0.347" stop-color="#1a0405"/><stop offset="0.389" stop-color="#2e0a06"/><stop offset="0.508" stop-color="#4b1607"/><stop offset="0.571" stop-color="#521808"/><stop offset="0.629" stop-color="#4e1708"/><stop offset="0.651" stop-color="#3b0f07"/><stop offset="0.674" stop-color="#1e0605"/><stop offset="0.684" stop-color="#140304"/><stop offset="0.692" stop-color="#030001"/><stop offset="0.698" stop-color="#000000"/><stop offset="0.705" stop-color="#040001"/><stop offset="0.713" stop-color="#190404"/><stop offset="0.723" stop-color="#2c0906"/><stop offset="0.745" stop-color="#66210a"/><stop offset="0.759" stop-color="#8b300f"/><stop offset="0.779" stop-color="#b03912"/><stop offset="0.802" stop-color="#e63f15"/><stop offset="0.810" stop-color="#f94519"/><stop offset="0.818" stop-color="#ff491c"/><stop offset="0.891" stop-color="#ff7030"/><stop offset="0.945" stop-color="#ff8039"/><stop offset="1.000" stop-color="#ff7f38"/></linearGradient>
<linearGradient id="g15" gradientUnits="userSpaceOnUse" x1="133.1" x2="506.1" y1="0" y2="0"><stop offset="0.000" stop-color="#1b0505"/><stop offset="0.023" stop-color="#140304"/><stop offset="0.060" stop-color="#000000"/><stop offset="0.079" stop-color="#020000"/><stop offset="0.125" stop-color="#1a0505"/><stop offset="0.181" stop-color="#210605"/><stop offset="0.240" stop-color="#1b0505"/><stop offset="0.263" stop-color="#100203"/><stop offset="0.295" stop-color="#000000"/><stop offset="0.319" stop-color="#020000"/><stop offset="0.335" stop-color="#0d0203"/><stop offset="0.349" stop-color="#1a0505"/><stop offset="0.389" stop-color="#2f0a06"/><stop offset="0.507" stop-color="#4d1608"/><stop offset="0.568" stop-color="#541908"/><stop offset="0.627" stop-color="#501808"/><stop offset="0.650" stop-color="#3d0f07"/><stop offset="0.673" stop-color="#1f0605"/><stop offset="0.682" stop-color="#150304"/><stop offset="0.692" stop-color="#020001"/><stop offset="0.700" stop-color="#000000"/><stop offset="0.705" stop-color="#060101"/><stop offset="0.712" stop-color="#180404"/><stop offset="0.721" stop-color="#2c0906"/><stop offset="0.744" stop-color="#69220a"/><stop offset="0.757" stop-color="#8f310f"/><stop offset="0.777" stop-color="#b43913"/><stop offset="0.799" stop-color="#e73f16"/><stop offset="0.807" stop-color="#fa4519"/><stop offset="0.814" stop-color="#ff4a1c"/><stop offset="0.885" stop-color="#ff7130"/><stop offset="0.941" stop-color="#ff823a"/><stop offset="1.000" stop-color="#ff8139"/></linearGradient>
<linearGradient id="g16" gradientUnits="userSpaceOnUse" x1="133.1" x2="506.1" y1="0" y2="0"><stop offset="0.000" stop-color="#1b0505"/><stop offset="0.023" stop-color="#150304"/><stop offset="0.062" stop-color="#000000"/><stop offset="0.082" stop-color="#020000"/><stop offset="0.127" stop-color="#1b0505"/><stop offset="0.185" stop-color="#210605"/><stop offset="0.244" stop-color="#1a0505"/><stop offset="0.269" stop-color="#0d0203"/><stop offset="0.299" stop-color="#000000"/><stop offset="0.319" stop-color="#020000"/><stop offset="0.335" stop-color="#0c0202"/><stop offset="0.350" stop-color="#1b0505"/><stop offset="0.389" stop-color="#300a06"/><stop offset="0.507" stop-color="#4f1708"/><stop offset="0.567" stop-color="#561a08"/><stop offset="0.627" stop-color="#521908"/><stop offset="0.650" stop-color="#3d1007"/><stop offset="0.673" stop-color="#1f0605"/><stop offset="0.682" stop-color="#130304"/><stop offset="0.690" stop-color="#030001"/><stop offset="0.697" stop-color="#000000"/><stop offset="0.702" stop-color="#030001"/><stop offset="0.708" stop-color="#100203"/><stop offset="0.723" stop-color="#340c07"/><stop offset="0.741" stop-color="#68210a"/><stop offset="0.755" stop-color="#8f320f"/><stop offset="0.773" stop-color="#b23912"/><stop offset="0.796" stop-color="#e83f16"/><stop offset="0.804" stop-color="#fb461a"/><stop offset="0.811" stop-color="#ff4b1c"/><stop offset="0.879" stop-color="#ff7131"/><stop offset="0.938" stop-color="#ff843b"/><stop offset="0.999" stop-color="#ff833a"/><stop offset="1.000" stop-color="#ff833a"/></linearGradient>
<linearGradient id="g17" gradientUnits="userSpaceOnUse" x1="133.1" x2="506.1" y1="0" y2="0"><stop offset="0.000" stop-color="#1c0505"/><stop offset="0.024" stop-color="#160404"/><stop offset="0.064" stop-color="#000000"/><stop offset="0.083" stop-color="#020000"/><stop offset="0.130" stop-color="#1b0505"/><stop offset="0.188" stop-color="#220605"/><stop offset="0.245" stop-color="#1a0505"/><stop offset="0.272" stop-color="#0c0202"/><stop offset="0.300" stop-color="#000000"/><stop offset="0.320" stop-color="#020000"/><stop offset="0.336" stop-color="#0d0202"/><stop offset="0.350" stop-color="#1b0505"/><stop offset="0.387" stop-color="#300b06"/><stop offset="0.505" stop-color="#511808"/><stop offset="0.566" stop-color="#591b08"/><stop offset="0.626" stop-color="#551a08"/><stop offset="0.647" stop-color="#421207"/><stop offset="0.672" stop-color="#200605"/><stop offset="0.681" stop-color="#140304"/><stop offset="0.689" stop-color="#030001"/><stop offset="0.696" stop-color="#000000"/><stop offset="0.701" stop-color="#020001"/><stop offset="0.705" stop-color="#0b0102"/><stop offset="0.710" stop-color="#1a0405"/><stop offset="0.720" stop-color="#300b06"/><stop offset="0.740" stop-color="#6a230a"/><stop offset="0.752" stop-color="#90320f"/><stop offset="0.764" stop-color="#a73812"/><stop offset="0.777" stop-color="#c13a13"/><stop offset="0.795" stop-color="#ec4016"/><stop offset="0.802" stop-color="#fc461a"/><stop offset="0.808" stop-color="#ff4b1d"/><stop offset="0.873" stop-color="#ff7231"/><stop offset="0.934" stop-color="#ff863c"/><stop offset="0.991" stop-color="#ff853c"/><stop offset="1.000" stop-color="#ff843b"/></linearGradient>
<linearGradient id="g18" gradientUnits="userSpaceOnUse" x1="133.1" x2="506.1" y1="0" y2="0"><stop offset="0.000" stop-color="#1c0505"/><stop offset="0.025" stop-color="#170404"/><stop offset="0.066" stop-color="#000000"/><stop offset="0.084" stop-color="#020000"/><stop offset="0.133" stop-color="#1c0505"/><stop offset="0.190" stop-color="#230706"/><stop offset="0.247" stop-color="#1b0505"/><stop offset="0.296" stop-color="#010000"/><stop offset="0.320" stop-color="#020000"/><stop offset="0.336" stop-color="#0c0202"/><stop offset="0.351" stop-color="#1c0505"/><stop offset="0.387" stop-color="#310b07"/><stop offset="0.505" stop-color="#531908"/><stop offset="0.566" stop-color="#5b1c08"/><stop offset="0.625" stop-color="#581b08"/><stop offset="0.646" stop-color="#441307"/><stop offset="0.670" stop-color="#220605"/><stop offset="0.681" stop-color="#130304"/><stop offset="0.689" stop-color="#030001"/><stop offset="0.696" stop-color="#000000"/><stop offset="0.701" stop-color="#040001"/><stop offset="0.710" stop-color="#1c0505"/><stop offset="0.724" stop-color="#401107"/><stop offset="0.740" stop-color="#72260b"/><stop offset="0.751" stop-color="#933310"/><stop offset="0.761" stop-color="#a83812"/><stop offset="0.775" stop-color="#c13a13"/><stop offset="0.792" stop-color="#ed4016"/><stop offset="0.799" stop-color="#fc461a"/><stop offset="0.806" stop-color="#ff4c1d"/><stop offset="0.866" stop-color="#ff7231"/><stop offset="0.930" stop-color="#ff883d"/><stop offset="0.980" stop-color="#ff883d"/><stop offset="1.000" stop-color="#ff863c"/></linearGradient>
<linearGradient id="g19" gradientUnits="userSpaceOnUse" x1="133.1" x2="506.1" y1="0" y2="0"><stop offset="0.000" stop-color="#1d0505"/><stop offset="0.025" stop-color="#180404"/><stop offset="0.068" stop-color="#000000"/><stop offset="0.087" stop-color="#020000"/><stop offset="0.134" stop-color="#1c0505"/><stop offset="0.189" stop-color="#230706"/><stop offset="0.243" stop-color="#1c0505"/><stop offset="0.265" stop-color="#120303"/><stop offset="0.296" stop-color="#010000"/><stop offset="0.320" stop-color="#010000"/><stop offset="0.338" stop-color="#0d0202"/><stop offset="0.353" stop-color="#1d0505"/><stop offset="0.387" stop-color="#320b07"/><stop offset="0.504" stop-color="#551a08"/><stop offset="0.563" stop-color="#5e1d09"/><stop offset="0.625" stop-color="#5a1b08"/><stop offset="0.646" stop-color="#451307"/><stop offset="0.669" stop-color="#230706"/><stop offset="0.680" stop-color="#140304"/><stop offset="0.688" stop-color="#030001"/><stop offset="0.694" stop-color="#000000"/><stop offset="0.700" stop-color="#030001"/><stop offset="0.705" stop-color="#110303"/><stop offset="0.718" stop-color="#350c07"/><stop offset="0.736" stop-color="#6b230a"/><stop offset="0.748" stop-color="#933310"/><stop offset="0.757" stop-color="#a73812"/><stop offset="0.772" stop-color="#c13a13"/><stop offset="0.788" stop-color="#e94016"/><stop offset="0.796" stop-color="#fc471a"/><stop offset="0.804" stop-color="#ff4e1e"/><stop offset="0.861" stop-color="#ff7231"/><stop offset="0.926" stop-color="#ff893d"/><stop offset="0.972" stop-color="#ff8b3e"/><stop offset="1.000" stop-color="#ff883d"/></linearGradient>
<linearGradient id="g20" gradientUnits="userSpaceOnUse" x1="133.1" x2="506.1" y1="0" y2="0"><stop offset="0.000" stop-color="#1d0505"/><stop offset="0.027" stop-color="#190404"/><stop offset="0.070" stop-color="#000000"/><stop offset="0.088" stop-color="#020000"/><stop offset="0.137" stop-color="#1d0505"/><stop offset="0.193" stop-color="#240706"/><stop offset="0.247" stop-color="#1c0505"/><stop offset="0.271" stop-color="#0f0203"/><stop offset="0.302" stop-color="#000000"/><stop offset="0.323" stop-color="#020000"/><stop offset="0.338" stop-color="#0c0202"/><stop offset="0.353" stop-color="#1c0505"/><stop offset="0.387" stop-color="#330c07"/><stop offset="0.504" stop-color="#571b08"/><stop offset="0.562" stop-color="#611e09"/><stop offset="0.623" stop-color="#5d1d09"/><stop offset="0.645" stop-color="#481407"/><stop offset="0.669" stop-color="#230706"/><stop offset="0.678" stop-color="#150304"/><stop offset="0.686" stop-color="#040001"/><stop offset="0.693" stop-color="#000000"/><stop offset="0.698" stop-color="#030001"/><stop offset="0.702" stop-color="#0b0102"/><stop offset="0.709" stop-color="#1e0505"/><stop offset="0.723" stop-color="#451307"/><stop offset="0.737" stop-color="#77280c"/><stop offset="0.748" stop-color="#9a3511"/><stop offset="0.759" stop-color="#af3912"/><stop offset="0.772" stop-color="#c73a13"/><stop offset="0.787" stop-color="#ed4117"/><stop offset="0.794" stop-color="#fd471a"/><stop offset="0.802" stop-color="#ff4f1f"/><stop offset="0.850" stop-color="#ff7030"/><stop offset="0.912" stop-color="#ff883d"/><stop offset="0.948" stop-color="#ff8d3f"/><stop offset="1.000" stop-color="#ff8a3e"/></linearGradient>
<linearGradient id="g21" gradientUnits="userSpaceOnUse" x1="133.1" x2="506.1" y1="0" y2="0"><stop offset="0.000" stop-color="#1e0505"/><stop offset="0.028" stop-color="#190404"/><stop offset="0.072" stop-color="#000000"/><stop offset="0.090" stop-color="#020000"/><stop offset="0.139" stop-color="#1e0505"/><stop offset="0.196" stop-color="#250706"/><stop offset="0.249" stop-color="#1c0505"/><stop offset="0.298" stop-color="#020000"/><stop offset="0.322" stop-color="#010000"/><stop offset="0.339" stop-color="#0d0203"/><stop offset="0.354" stop-color="#1d0505"/><stop offset="0.387" stop-color="#340c07"/><stop offset="0.504" stop-color="#5a1c08"/><stop offset="0.562" stop-color="#642009"/><stop offset="0.622" stop-color="#601e09"/><stop offset="0.641" stop-color="#4e1708"/><stop offset="0.668" stop-color="#240706"/><stop offset="0.678" stop-color="#140304"/><stop offset="0.686" stop-color="#030001"/><stop offset="0.693" stop-color="#000000"/><stop offset="0.698" stop-color="#040001"/><stop offset="0.716" stop-color="#340c07"/><stop offset="0.732" stop-color="#6a220a"/><stop offset="0.744" stop-color="#953410"/><stop offset="0.752" stop-color="#a93812"/><stop offset="0.769" stop-color="#c73a13"/><stop offset="0.782" stop-color="#e63f15"/><stop offset="0.790" stop-color="#fa4519"/><stop offset="0.795" stop-color="#ff4b1d"/><stop offset="0.815" stop-color="#ff5d26"/><stop offset="0.861" stop-color="#ff7834"/><stop offset="0.924" stop-color="#ff8d3f"/><stop offset="0.975" stop-color="#ff8e3f"/><stop offset="1.000" stop-color="#ff8b3e"/></linearGradient>
<linearGradient id="g22" gradientUnits="userSpaceOnUse" x1="133.1" x2="506.1" y1="0" y2="0"><stop offset="0.000" stop-color="#1e0605"/><stop offset="0.029" stop-color="#1a0405"/><stop offset="0.074" stop-color="#000000"/><stop offset="0.091" stop-color="#020000"/><stop offset="0.141" stop-color="#1e0605"/><stop offset="0.196" stop-color="#250706"/><stop offset="0.247" stop-color="#1d0505"/><stop offset="0.271" stop-color="#110203"/><stop offset="0.302" stop-color="#000000"/><stop offset="0.323" stop-color="#020000"/><stop offset="0.339" stop-color="#0c0202"/><stop offset="0.355" stop-color="#1e0605"/><stop offset="0.387" stop-color="#350c07"/><stop offset="0.504" stop-color="#5c1d08"/><stop offset="0.560" stop-color="#67210a"/><stop offset="0.622" stop-color="#621f09"/><stop offset="0.642" stop-color="#4d1608"/><stop offset="0.666" stop-color="#260706"/><stop offset="0.677" stop-color="#150304"/><stop offset="0.685" stop-color="#040001"/><stop offset="0.692" stop-color="#000000"/><stop offset="0.697" stop-color="#030001"/><stop offset="0.702" stop-color="#110303"/><stop offset="0.714" stop-color="#340c07"/><stop offset="0.729" stop-color="#67210a"/><stop offset="0.743" stop-color="#983411"/><stop offset="0.751" stop-color="#ac3812"/><stop offset="0.768" stop-color="#ca3b13"/><stop offset="0.779" stop-color="#e53f15"/><stop offset="0.787" stop-color="#fa4519"/><stop offset="0.792" stop-color="#ff4b1d"/><stop offset="0.811" stop-color="#ff5e27"/><stop offset="0.858" stop-color="#ff7935"/><stop offset="0.921" stop-color="#ff8f40"/><stop offset="0.971" stop-color="#ff9040"/><stop offset="1.000" stop-color="#ff8d3f"/></linearGradient>
<linearGradient id="g23" gradientUnits="userSpaceOnUse" x1="133.1" x2="506.1" y1="0" y2="0"><stop offset="0.000" stop-color="#1f0605"/><stop offset="0.031" stop-color="#1a0505"/><stop offset="0.076" stop-color="#000000"/><stop offset="0.094" stop-color="#020000"/><stop offset="0.143" stop-color="#1f0605"/><stop offset="0.198" stop-color="#260706"/><stop offset="0.249" stop-color="#1d0505"/><stop offset="0.275" stop-color="#0e0203"/><stop offset="0.306" stop-color="#000000"/><stop offset="0.324" stop-color="#020000"/><stop offset="0.340" stop-color="#0d0203"/><stop offset="0.355" stop-color="#1e0605"/><stop offset="0.387" stop-color="#360d07"/><stop offset="0.505" stop-color="#5f1e09"/><stop offset="0.559" stop-color="#6a220a"/><stop offset="0.621" stop-color="#66200a"/><stop offset="0.635" stop-color="#571a08"/><stop offset="0.649" stop-color="#431207"/><stop offset="0.668" stop-color="#230706"/><stop offset="0.677" stop-color="#140304"/><stop offset="0.684" stop-color="#050001"/><stop offset="0.689" stop-color="#000000"/><stop offset="0.696" stop-color="#030001"/><stop offset="0.700" stop-color="#0b0102"/><stop offset="0.714" stop-color="#380e07"/><stop offset="0.728" stop-color="#68210a"/><stop offset="0.740" stop-color="#973410"/><stop offset="0.748" stop-color="#ac3812"/><stop offset="0.768" stop-color="#cf3b13"/><stop offset="0.777" stop-color="#e93f16"/><stop offset="0.784" stop-color="#fa4519"/><stop offset="0.790" stop-color="#ff4b1d"/><stop offset="0.807" stop-color="#ff5e27"/><stop offset="0.854" stop-color="#ff7a36"/><stop offset="0.917" stop-color="#ff9040"/><stop offset="0.961" stop-color="#ff9240"/><stop offset="1.000" stop-color="#ff8e40"/></linearGradient>
<linearGradient id="g24" gradientUnits="userSpaceOnUse" x1="133.1" x2="506.1" y1="0" y2="0"><stop offset="0.000" stop-color="#200605"/><stop offset="0.032" stop-color="#1b0505"/><stop offset="0.078" stop-color="#000000"/><stop offset="0.095" stop-color="#020000"/><stop offset="0.145" stop-color="#200605"/><stop offset="0.198" stop-color="#270806"/><stop offset="0.248" stop-color="#1e0605"/><stop offset="0.272" stop-color="#110303"/><stop offset="0.302" stop-color="#010000"/><stop offset="0.324" stop-color="#020000"/><stop offset="0.340" stop-color="#0c0202"/><stop offset="0.357" stop-color="#1f0605"/><stop offset="0.387" stop-color="#370d07"/><stop offset="0.505" stop-color="#621f09"/><stop offset="0.558" stop-color="#6c230a"/><stop offset="0.621" stop-color="#68220a"/><stop offset="0.637" stop-color="#561a08"/><stop offset="0.649" stop-color="#431207"/><stop offset="0.668" stop-color="#230706"/><stop offset="0.676" stop-color="#150304"/><stop offset="0.684" stop-color="#040001"/><stop offset="0.690" stop-color="#000000"/><stop offset="0.696" stop-color="#040001"/><stop offset="0.701" stop-color="#130304"/><stop offset="0.712" stop-color="#330c07"/><stop offset="0.725" stop-color="#642009"/><stop offset="0.739" stop-color="#993511"/><stop offset="0.747" stop-color="#af3912"/><stop offset="0.767" stop-color="#d23b14"/><stop offset="0.780" stop-color="#f74419"/><stop offset="0.786" stop-color="#ff491c"/><stop offset="0.806" stop-color="#ff6128"/><stop offset="0.854" stop-color="#ff7d37"/><stop offset="0.916" stop-color="#ff9240"/><stop offset="0.961" stop-color="#ff9341"/><stop offset="1.000" stop-color="#ff9040"/></linearGradient>
<linearGradient id="g25" gradientUnits="userSpaceOnUse" x1="133.1" x2="506.1" y1="0" y2="0"><stop offset="0.000" stop-color="#200605"/><stop offset="0.034" stop-color="#1b0505"/><stop offset="0.079" stop-color="#000000"/><stop offset="0.097" stop-color="#020000"/><stop offset="0.147" stop-color="#200605"/><stop offset="0.201" stop-color="#270806"/><stop offset="0.251" stop-color="#1e0605"/><stop offset="0.276" stop-color="#0f0203"/><stop offset="0.307" stop-color="#000000"/><stop offset="0.326" stop-color="#020000"/><stop offset="0.342" stop-color="#0d0203"/><stop offset="0.358" stop-color="#200605"/><stop offset="0.387" stop-color="#380d07"/><stop offset="0.505" stop-color="#652009"/><stop offset="0.558" stop-color="#70250b"/><stop offset="0.619" stop-color="#6c230a"/><stop offset="0.633" stop-color="#5d1d09"/><stop offset="0.646" stop-color="#491507"/><stop offset="0.665" stop-color="#270806"/><stop offset="0.676" stop-color="#140304"/><stop offset="0.682" stop-color="#040001"/><stop offset="0.688" stop-color="#000000"/><stop offset="0.693" stop-color="#010000"/><stop offset="0.697" stop-color="#080102"/><stop offset="0.712" stop-color="#370d07"/><stop offset="0.724" stop-color="#652009"/><stop offset="0.736" stop-color="#973410"/><stop offset="0.744" stop-color="#ae3912"/><stop offset="0.765" stop-color="#d43c14"/><stop offset="0.779" stop-color="#fa4519"/><stop offset="0.784" stop-color="#ff4b1c"/><stop offset="0.803" stop-color="#ff6229"/><stop offset="0.851" stop-color="#ff7e38"/><stop offset="0.910" stop-color="#ff9341"/><stop offset="0.950" stop-color="#ff9541"/><stop offset="1.000" stop-color="#ff9140"/></linearGradient>
<linearGradient id="g26" gradientUnits="userSpaceOnUse" x1="133.1" x2="506.1" y1="0" y2="0"><stop offset="0.000" stop-color="#210605"/><stop offset="0.035" stop-color="#1c0505"/><stop offset="0.080" stop-color="#000000"/><stop offset="0.098" stop-color="#020000"/><stop offset="0.149" stop-color="#210605"/><stop offset="0.201" stop-color="#280806"/><stop offset="0.248" stop-color="#200605"/><stop offset="0.271" stop-color="#140304"/><stop offset="0.298" stop-color="#040001"/><stop offset="0.314" stop-color="#000000"/><stop offset="0.328" stop-color="#030001"/><stop offset="0.342" stop-color="#0c0202"/><stop offset="0.358" stop-color="#200605"/><stop offset="0.387" stop-color="#390e07"/><stop offset="0.505" stop-color="#67210a"/><stop offset="0.556" stop-color="#73260b"/><stop offset="0.619" stop-color="#6e240b"/><stop offset="0.633" stop-color="#5f1e09"/><stop offset="0.646" stop-color="#491507"/><stop offset="0.664" stop-color="#280806"/><stop offset="0.674" stop-color="#160404"/><stop offset="0.682" stop-color="#040001"/><stop offset="0.689" stop-color="#000000"/><stop offset="0.694" stop-color="#040001"/><stop offset="0.700" stop-color="#140304"/><stop offset="0.710" stop-color="#360d07"/><stop offset="0.723" stop-color="#652009"/><stop offset="0.735" stop-color="#983511"/><stop offset="0.743" stop-color="#b03912"/><stop offset="0.765" stop-color="#da3c14"/><stop offset="0.776" stop-color="#f94519"/><stop offset="0.782" stop-color="#ff4a1c"/><stop offset="0.800" stop-color="#ff6329"/><stop offset="0.847" stop-color="#ff7f38"/><stop offset="0.905" stop-color="#ff9341"/><stop offset="0.942" stop-color="#ff9741"/><stop offset="1.000" stop-color="#ff9241"/></linearGradient>
<linearGradient id="g27" gradientUnits="userSpaceOnUse" x1="133.1" x2="506.1" y1="0" y2="0"><stop offset="0.000" stop-color="#210605"/><stop offset="0.038" stop-color="#1b0505"/><stop offset="0.082" stop-color="#000000"/><stop offset="0.099" stop-color="#020000"/><stop offset="0.151" stop-color="#220605"/><stop offset="0.204" stop-color="#280806"/><stop offset="0.251" stop-color="#200605"/><stop offset="0.275" stop-color="#110303"/><stop offset="0.304" stop-color="#010000"/><stop offset="0.326" stop-color="#010000"/><stop offset="0.342" stop-color="#0c0202"/><stop offset="0.359" stop-color="#210605"/><stop offset="0.387" stop-color="#390e07"/><stop offset="0.505" stop-color="#6a220a"/><stop offset="0.556" stop-color="#76270c"/><stop offset="0.618" stop-color="#72260b"/><stop offset="0.629" stop-color="#67210a"/><stop offset="0.645" stop-color="#4c1608"/><stop offset="0.662" stop-color="#2a0906"/><stop offset="0.674" stop-color="#140304"/><stop offset="0.681" stop-color="#040001"/><stop offset="0.686" stop-color="#000000"/><stop offset="0.693" stop-color="#030001"/><stop offset="0.697" stop-color="#0d0203"/><stop offset="0.709" stop-color="#350c07"/><stop offset="0.721" stop-color="#652009"/><stop offset="0.733" stop-color="#9a3511"/><stop offset="0.741" stop-color="#b23912"/><stop offset="0.764" stop-color="#dc3d14"/><stop offset="0.775" stop-color="#fb461a"/><stop offset="0.780" stop-color="#ff4b1d"/><stop offset="0.799" stop-color="#ff652a"/><stop offset="0.849" stop-color="#ff823a"/><stop offset="0.906" stop-color="#ff9541"/><stop offset="0.946" stop-color="#ff9842"/><stop offset="1.000" stop-color="#ff9341"/></linearGradient>
<linearGradient id="g28" gradientUnits="userSpaceOnUse" x1="133.1" x2="506.1" y1="0" y2="0"><stop offset="0.000" stop-color="#220605"/><stop offset="0.039" stop-color="#1c0505"/><stop offset="0.084" stop-color="#000000"/><stop offset="0.102" stop-color="#030001"/><stop offset="0.153" stop-color="#220706"/><stop offset="0.205" stop-color="#290806"/><stop offset="0.252" stop-color="#200605"/><stop offset="0.277" stop-color="#100203"/><stop offset="0.308" stop-color="#000000"/><stop offset="0.327" stop-color="#020000"/><stop offset="0.343" stop-color="#0d0203"/><stop offset="0.361" stop-color="#230706"/><stop offset="0.389" stop-color="#3b0f07"/><stop offset="0.505" stop-color="#6d240a"/><stop offset="0.555" stop-color="#79290c"/><stop offset="0.618" stop-color="#75270c"/><stop offset="0.629" stop-color="#69220a"/><stop offset="0.645" stop-color="#4d1608"/><stop offset="0.661" stop-color="#2c0906"/><stop offset="0.673" stop-color="#160404"/><stop offset="0.681" stop-color="#040001"/><stop offset="0.688" stop-color="#000000"/><stop offset="0.693" stop-color="#040001"/><stop offset="0.698" stop-color="#150304"/><stop offset="0.708" stop-color="#340c07"/><stop offset="0.720" stop-color="#662009"/><stop offset="0.731" stop-color="#963410"/><stop offset="0.739" stop-color="#b13912"/><stop offset="0.749" stop-color="#c63a13"/><stop offset="0.761" stop-color="#db3c14"/><stop offset="0.772" stop-color="#fa4519"/><stop offset="0.776" stop-color="#ff4a1c"/><stop offset="0.798" stop-color="#ff672b"/><stop offset="0.850" stop-color="#ff853b"/><stop offset="0.913" stop-color="#ff9942"/><stop offset="0.971" stop-color="#ff9842"/><stop offset="1.000" stop-color="#ff9441"/></linearGradient>
<linearGradient id="g29" gradientUnits="userSpaceOnUse" x1="133.1" x2="506.1" y1="0" y2="0"><stop offset="0.000" stop-color="#220706"/><stop offset="0.040" stop-color="#1c0505"/><stop offset="0.086" stop-color="#000000"/><stop offset="0.103" stop-color="#030001"/><stop offset="0.154" stop-color="#230706"/><stop offset="0.205" stop-color="#2a0806"/><stop offset="0.248" stop-color="#220605"/><stop offset="0.271" stop-color="#160404"/><stop offset="0.298" stop-color="#050001"/><stop offset="0.315" stop-color="#000000"/><stop offset="0.330" stop-color="#030001"/><stop offset="0.345" stop-color="#0e0203"/><stop offset="0.361" stop-color="#230706"/><stop offset="0.389" stop-color="#3c0f07"/><stop offset="0.504" stop-color="#6f250b"/><stop offset="0.554" stop-color="#7c2a0d"/><stop offset="0.617" stop-color="#78280c"/><stop offset="0.627" stop-color="#6d230a"/><stop offset="0.643" stop-color="#501808"/><stop offset="0.660" stop-color="#2e0a06"/><stop offset="0.673" stop-color="#150304"/><stop offset="0.680" stop-color="#050001"/><stop offset="0.685" stop-color="#000000"/><stop offset="0.692" stop-color="#030001"/><stop offset="0.696" stop-color="#0e0203"/><stop offset="0.708" stop-color="#380d07"/><stop offset="0.718" stop-color="#652009"/><stop offset="0.729" stop-color="#983410"/><stop offset="0.737" stop-color="#b23912"/><stop offset="0.748" stop-color="#c83a13"/><stop offset="0.760" stop-color="#dd3d14"/><stop offset="0.771" stop-color="#fc461a"/><stop offset="0.776" stop-color="#ff4c1d"/><stop offset="0.795" stop-color="#ff682c"/><stop offset="0.836" stop-color="#ff8139"/><stop offset="0.885" stop-color="#ff9341"/><stop offset="0.926" stop-color="#ff9b42"/><stop offset="0.997" stop-color="#ff9641"/><stop offset="1.000" stop-color="#ff9541"/></linearGradient>
<linearGradient id="g30" gradientUnits="userSpaceOnUse" x1="133.1" x2="506.1" y1="0" y2="0"><stop offset="0.000" stop-color="#230706"/><stop offset="0.042" stop-color="#1d0505"/><stop offset="0.087" stop-color="#000000"/><stop offset="0.103" stop-color="#020000"/><stop offset="0.157" stop-color="#240706"/><stop offset="0.208" stop-color="#2a0906"/><stop offset="0.253" stop-color="#210605"/><stop offset="0.279" stop-color="#100203"/><stop offset="0.308" stop-color="#010000"/><stop offset="0.327" stop-color="#010000"/><stop offset="0.345" stop-color="#0d0203"/><stop offset="0.362" stop-color="#240706"/><stop offset="0.389" stop-color="#3d0f07"/><stop offset="0.503" stop-color="#71260b"/><stop offset="0.554" stop-color="#7f2b0d"/><stop offset="0.617" stop-color="#7b290c"/><stop offset="0.627" stop-color="#6f240b"/><stop offset="0.643" stop-color="#511808"/><stop offset="0.658" stop-color="#300b06"/><stop offset="0.672" stop-color="#170404"/><stop offset="0.680" stop-color="#040001"/><stop offset="0.686" stop-color="#000000"/><stop offset="0.692" stop-color="#050001"/><stop offset="0.697" stop-color="#150304"/><stop offset="0.706" stop-color="#360d07"/><stop offset="0.717" stop-color="#652009"/><stop offset="0.728" stop-color="#983511"/><stop offset="0.736" stop-color="#b43913"/><stop offset="0.745" stop-color="#c83a13"/><stop offset="0.759" stop-color="#df3d15"/><stop offset="0.769" stop-color="#fd471a"/><stop offset="0.777" stop-color="#ff5120"/><stop offset="0.794" stop-color="#ff6a2d"/><stop offset="0.840" stop-color="#ff853c"/><stop offset="0.898" stop-color="#ff9942"/><stop offset="0.937" stop-color="#ff9d42"/><stop offset="0.997" stop-color="#ff9741"/><stop offset="1.000" stop-color="#ff9641"/></linearGradient>
<linearGradient id="g31" gradientUnits="userSpaceOnUse" x1="133.1" x2="506.1" y1="0" y2="0"><stop offset="0.000" stop-color="#230706"/><stop offset="0.042" stop-color="#1e0505"/><stop offset="0.088" stop-color="#000000"/><stop offset="0.105" stop-color="#020000"/><stop offset="0.158" stop-color="#240706"/><stop offset="0.208" stop-color="#2b0906"/><stop offset="0.249" stop-color="#230706"/><stop offset="0.272" stop-color="#170404"/><stop offset="0.298" stop-color="#060101"/><stop offset="0.316" stop-color="#000000"/><stop offset="0.332" stop-color="#040001"/><stop offset="0.346" stop-color="#0e0203"/><stop offset="0.362" stop-color="#240706"/><stop offset="0.389" stop-color="#3d1007"/><stop offset="0.503" stop-color="#74270b"/><stop offset="0.552" stop-color="#822c0d"/><stop offset="0.615" stop-color="#7e2b0d"/><stop offset="0.625" stop-color="#75270c"/><stop offset="0.642" stop-color="#541908"/><stop offset="0.657" stop-color="#330b07"/><stop offset="0.672" stop-color="#150304"/><stop offset="0.678" stop-color="#050101"/><stop offset="0.684" stop-color="#000000"/><stop offset="0.690" stop-color="#040001"/><stop offset="0.694" stop-color="#0e0203"/><stop offset="0.705" stop-color="#340c07"/><stop offset="0.716" stop-color="#642009"/><stop offset="0.727" stop-color="#993511"/><stop offset="0.735" stop-color="#b53913"/><stop offset="0.744" stop-color="#ca3b13"/><stop offset="0.757" stop-color="#e13e15"/><stop offset="0.767" stop-color="#fb461a"/><stop offset="0.772" stop-color="#ff4c1d"/><stop offset="0.792" stop-color="#ff6b2e"/><stop offset="0.842" stop-color="#ff883d"/><stop offset="0.908" stop-color="#ff9c42"/><stop offset="0.966" stop-color="#ff9c42"/><stop offset="1.000" stop-color="#ff9741"/></linearGradient>
<linearGradient id="g32" gradientUnits="userSpaceOnUse" x1="133.1" x2="506.1" y1="0" y2="0"><stop offset="0.000" stop-color="#240706"/><stop offset="0.043" stop-color="#1e0505"/><stop offset="0.090" stop-color="#000000"/><stop offset="0.106" stop-color="#020000"/><stop offset="0.160" stop-color="#250706"/><stop offset="0.209" stop-color="#2c0906"/><stop offset="0.251" stop-color="#230706"/><stop offset="0.273" stop-color="#160404"/><stop offset="0.299" stop-color="#050101"/><stop offset="0.316" stop-color="#000000"/><stop offset="0.332" stop-color="#040001"/><stop offset="0.346" stop-color="#0e0203"/><stop offset="0.363" stop-color="#250706"/><stop offset="0.389" stop-color="#3e1007"/><stop offset="0.501" stop-color="#76280c"/><stop offset="0.552" stop-color="#842d0e"/><stop offset="0.615" stop-color="#812c0d"/><stop offset="0.625" stop-color="#77280c"/><stop offset="0.641" stop-color="#581b08"/><stop offset="0.657" stop-color="#330b07"/><stop offset="0.672" stop-color="#140304"/><stop offset="0.678" stop-color="#040001"/><stop offset="0.684" stop-color="#000000"/><stop offset="0.689" stop-color="#030001"/><stop offset="0.693" stop-color="#0b0102"/><stop offset="0.705" stop-color="#380e07"/><stop offset="0.714" stop-color="#631f09"/><stop offset="0.725" stop-color="#9a3511"/><stop offset="0.733" stop-color="#b63913"/><stop offset="0.743" stop-color="#cb3b13"/><stop offset="0.756" stop-color="#e33e15"/><stop offset="0.765" stop-color="#fc471a"/><stop offset="0.772" stop-color="#ff4f1f"/><stop offset="0.791" stop-color="#ff6d2e"/><stop offset="0.840" stop-color="#ff8a3e"/><stop offset="0.906" stop-color="#ff9e42"/><stop offset="0.968" stop-color="#ff9d42"/><stop offset="1.000" stop-color="#ff9741"/></linearGradient>
<linearGradient id="g33" gradientUnits="userSpaceOnUse" x1="133.1" x2="506.1" y1="0" y2="0"><stop offset="0.000" stop-color="#240706"/><stop offset="0.044" stop-color="#1e0605"/><stop offset="0.091" stop-color="#000000"/><stop offset="0.107" stop-color="#020000"/><stop offset="0.161" stop-color="#250706"/><stop offset="0.210" stop-color="#2c0906"/><stop offset="0.252" stop-color="#230706"/><stop offset="0.275" stop-color="#160404"/><stop offset="0.300" stop-color="#050101"/><stop offset="0.318" stop-color="#000000"/><stop offset="0.332" stop-color="#030001"/><stop offset="0.346" stop-color="#0d0203"/><stop offset="0.365" stop-color="#270806"/><stop offset="0.389" stop-color="#3f1007"/><stop offset="0.500" stop-color="#79290c"/><stop offset="0.551" stop-color="#872e0e"/><stop offset="0.614" stop-color="#842d0e"/><stop offset="0.623" stop-color="#7b2a0c"/><stop offset="0.639" stop-color="#5c1c08"/><stop offset="0.655" stop-color="#350c07"/><stop offset="0.670" stop-color="#160404"/><stop offset="0.677" stop-color="#050101"/><stop offset="0.684" stop-color="#000000"/><stop offset="0.689" stop-color="#040001"/><stop offset="0.693" stop-color="#0e0203"/><stop offset="0.704" stop-color="#360d07"/><stop offset="0.714" stop-color="#69220a"/><stop offset="0.724" stop-color="#9a3511"/><stop offset="0.732" stop-color="#b73913"/><stop offset="0.741" stop-color="#cd3b13"/><stop offset="0.755" stop-color="#e53f15"/><stop offset="0.764" stop-color="#fd471a"/><stop offset="0.780" stop-color="#ff6028"/><stop offset="0.791" stop-color="#ff6f30"/><stop offset="0.843" stop-color="#ff8d3f"/><stop offset="0.906" stop-color="#ff9f43"/><stop offset="0.975" stop-color="#ff9e42"/><stop offset="1.000" stop-color="#ff9842"/></linearGradient>
<linearGradient id="g34" gradientUnits="userSpaceOnUse" x1="133.1" x2="506.1" y1="0" y2="0"><stop offset="0.000" stop-color="#250706"/><stop offset="0.046" stop-color="#1f0605"/><stop offset="0.092" stop-color="#000000"/><stop offset="0.109" stop-color="#020000"/><stop offset="0.162" stop-color="#260706"/><stop offset="0.210" stop-color="#2d0906"/><stop offset="0.249" stop-color="#240706"/><stop offset="0.272" stop-color="#190404"/><stop offset="0.298" stop-color="#070101"/><stop offset="0.318" stop-color="#000000"/><stop offset="0.334" stop-color="#040001"/><stop offset="0.347" stop-color="#0e0203"/><stop offset="0.365" stop-color="#270806"/><stop offset="0.390" stop-color="#411107"/><stop offset="0.500" stop-color="#7b2a0c"/><stop offset="0.551" stop-color="#8a300f"/><stop offset="0.613" stop-color="#872e0e"/><stop offset="0.622" stop-color="#7f2b0d"/><stop offset="0.638" stop-color="#601e09"/><stop offset="0.654" stop-color="#380d07"/><stop offset="0.670" stop-color="#150304"/><stop offset="0.677" stop-color="#050001"/><stop offset="0.682" stop-color="#000000"/><stop offset="0.688" stop-color="#030001"/><stop offset="0.692" stop-color="#0b0102"/><stop offset="0.702" stop-color="#340c07"/><stop offset="0.713" stop-color="#67210a"/><stop offset="0.723" stop-color="#993511"/><stop offset="0.731" stop-color="#b73913"/><stop offset="0.740" stop-color="#ce3b13"/><stop offset="0.753" stop-color="#e73f16"/><stop offset="0.763" stop-color="#fe481b"/><stop offset="0.779" stop-color="#ff6128"/><stop offset="0.790" stop-color="#ff7130"/><stop offset="0.840" stop-color="#ff8d3f"/><stop offset="0.903" stop-color="#ffa043"/><stop offset="0.971" stop-color="#ff9f43"/><stop offset="1.000" stop-color="#ff9942"/></linearGradient>
<linearGradient id="g35" gradientUnits="userSpaceOnUse" x1="133.1" x2="506.1" y1="0" y2="0"><stop offset="0.000" stop-color="#250706"/><stop offset="0.046" stop-color="#1f0605"/><stop offset="0.094" stop-color="#000000"/><stop offset="0.110" stop-color="#020001"/><stop offset="0.164" stop-color="#260806"/><stop offset="0.212" stop-color="#2d0a06"/><stop offset="0.251" stop-color="#250706"/><stop offset="0.272" stop-color="#190405"/><stop offset="0.299" stop-color="#060101"/><stop offset="0.319" stop-color="#000000"/><stop offset="0.335" stop-color="#040001"/><stop offset="0.347" stop-color="#0e0203"/><stop offset="0.366" stop-color="#280806"/><stop offset="0.390" stop-color="#411107"/><stop offset="0.499" stop-color="#7d2b0d"/><stop offset="0.550" stop-color="#8c310f"/><stop offset="0.611" stop-color="#8a2f0f"/><stop offset="0.619" stop-color="#852e0e"/><stop offset="0.633" stop-color="#6d240a"/><stop offset="0.643" stop-color="#521808"/><stop offset="0.657" stop-color="#320b07"/><stop offset="0.670" stop-color="#130304"/><stop offset="0.677" stop-color="#040001"/><stop offset="0.684" stop-color="#000000"/><stop offset="0.689" stop-color="#050101"/><stop offset="0.697" stop-color="#210605"/><stop offset="0.705" stop-color="#441207"/><stop offset="0.713" stop-color="#6d240a"/><stop offset="0.721" stop-color="#993511"/><stop offset="0.728" stop-color="#b33913"/><stop offset="0.737" stop-color="#cc3b13"/><stop offset="0.752" stop-color="#e93f16"/><stop offset="0.760" stop-color="#fc471a"/><stop offset="0.767" stop-color="#ff4f1f"/><stop offset="0.787" stop-color="#ff7130"/><stop offset="0.823" stop-color="#ff873c"/><stop offset="0.873" stop-color="#ff9a42"/><stop offset="0.916" stop-color="#ffa243"/><stop offset="0.988" stop-color="#ff9d42"/><stop offset="1.000" stop-color="#ff9a42"/></linearGradient>
<linearGradient id="g36" gradientUnits="userSpaceOnUse" x1="133.1" x2="506.1" y1="0" y2="0"><stop offset="0.000" stop-color="#250706"/><stop offset="0.047" stop-color="#200605"/><stop offset="0.095" stop-color="#000000"/><stop offset="0.111" stop-color="#030001"/><stop offset="0.165" stop-color="#270806"/><stop offset="0.212" stop-color="#2e0a06"/><stop offset="0.248" stop-color="#260806"/><stop offset="0.271" stop-color="#1b0505"/><stop offset="0.299" stop-color="#070101"/><stop offset="0.319" stop-color="#000000"/><stop offset="0.335" stop-color="#040001"/><stop offset="0.347" stop-color="#0d0203"/><stop offset="0.367" stop-color="#2a0806"/><stop offset="0.390" stop-color="#421207"/><stop offset="0.497" stop-color="#7f2b0d"/><stop offset="0.548" stop-color="#8f310f"/><stop offset="0.609" stop-color="#8d310f"/><stop offset="0.618" stop-color="#892f0e"/><stop offset="0.630" stop-color="#74270b"/><stop offset="0.639" stop-color="#5e1d09"/><stop offset="0.653" stop-color="#3a0e07"/><stop offset="0.669" stop-color="#160404"/><stop offset="0.676" stop-color="#050101"/><stop offset="0.682" stop-color="#000000"/><stop offset="0.688" stop-color="#040001"/><stop offset="0.692" stop-color="#0f0203"/><stop offset="0.701" stop-color="#340c07"/><stop offset="0.710" stop-color="#631f09"/><stop offset="0.720" stop-color="#983411"/><stop offset="0.727" stop-color="#b33913"/><stop offset="0.736" stop-color="#cd3b13"/><stop offset="0.752" stop-color="#ed4117"/><stop offset="0.759" stop-color="#fd471a"/><stop offset="0.769" stop-color="#ff5723"/><stop offset="0.786" stop-color="#ff7131"/><stop offset="0.816" stop-color="#ff853c"/><stop offset="0.862" stop-color="#ff9842"/><stop offset="0.910" stop-color="#ffa343"/><stop offset="0.987" stop-color="#ff9e43"/><stop offset="1.000" stop-color="#ff9a42"/></linearGradient>
<linearGradient id="g37" gradientUnits="userSpaceOnUse" x1="133.1" x2="506.1" y1="0" y2="0"><stop offset="0.000" stop-color="#260706"/><stop offset="0.048" stop-color="#200605"/><stop offset="0.095" stop-color="#010000"/><stop offset="0.111" stop-color="#020000"/><stop offset="0.166" stop-color="#270806"/><stop offset="0.213" stop-color="#2e0a06"/><stop offset="0.249" stop-color="#260806"/><stop offset="0.272" stop-color="#1b0505"/><stop offset="0.299" stop-color="#070101"/><stop offset="0.319" stop-color="#000000"/><stop offset="0.335" stop-color="#040001"/><stop offset="0.349" stop-color="#0f0203"/><stop offset="0.367" stop-color="#2a0806"/><stop offset="0.390" stop-color="#431207"/><stop offset="0.497" stop-color="#822c0d"/><stop offset="0.548" stop-color="#913210"/><stop offset="0.609" stop-color="#8f310f"/><stop offset="0.618" stop-color="#8b300f"/><stop offset="0.630" stop-color="#75270c"/><stop offset="0.639" stop-color="#5e1d09"/><stop offset="0.651" stop-color="#3d1007"/><stop offset="0.669" stop-color="#150304"/><stop offset="0.676" stop-color="#040001"/><stop offset="0.681" stop-color="#000000"/><stop offset="0.686" stop-color="#030001"/><stop offset="0.690" stop-color="#0c0202"/><stop offset="0.701" stop-color="#380d07"/><stop offset="0.710" stop-color="#69220a"/><stop offset="0.718" stop-color="#973410"/><stop offset="0.725" stop-color="#b33913"/><stop offset="0.735" stop-color="#ce3b13"/><stop offset="0.752" stop-color="#f24217"/><stop offset="0.759" stop-color="#ff491b"/><stop offset="0.784" stop-color="#ff7231"/><stop offset="0.810" stop-color="#ff843b"/><stop offset="0.853" stop-color="#ff9741"/><stop offset="0.905" stop-color="#ffa344"/><stop offset="0.983" stop-color="#ffa043"/><stop offset="1.000" stop-color="#ff9b42"/></linearGradient>
<linearGradient id="g38" gradientUnits="userSpaceOnUse" x1="133.1" x2="506.1" y1="0" y2="0"><stop offset="0.000" stop-color="#260806"/><stop offset="0.048" stop-color="#210605"/><stop offset="0.097" stop-color="#010000"/><stop offset="0.113" stop-color="#020000"/><stop offset="0.166" stop-color="#270806"/><stop offset="0.213" stop-color="#2f0a06"/><stop offset="0.248" stop-color="#270806"/><stop offset="0.271" stop-color="#1c0505"/><stop offset="0.299" stop-color="#070102"/><stop offset="0.319" stop-color="#000000"/><stop offset="0.335" stop-color="#040001"/><stop offset="0.349" stop-color="#0e0203"/><stop offset="0.369" stop-color="#2b0906"/><stop offset="0.391" stop-color="#451307"/><stop offset="0.496" stop-color="#832d0e"/><stop offset="0.547" stop-color="#943310"/><stop offset="0.605" stop-color="#923210"/><stop offset="0.617" stop-color="#8e310f"/><stop offset="0.627" stop-color="#7d2a0d"/><stop offset="0.638" stop-color="#631f09"/><stop offset="0.651" stop-color="#3d0f07"/><stop offset="0.668" stop-color="#170404"/><stop offset="0.674" stop-color="#060101"/><stop offset="0.681" stop-color="#000000"/><stop offset="0.686" stop-color="#040001"/><stop offset="0.690" stop-color="#0e0203"/><stop offset="0.700" stop-color="#340c07"/><stop offset="0.709" stop-color="#66200a"/><stop offset="0.717" stop-color="#963410"/><stop offset="0.724" stop-color="#b23912"/><stop offset="0.733" stop-color="#ce3b13"/><stop offset="0.752" stop-color="#f64318"/><stop offset="0.757" stop-color="#ff491b"/><stop offset="0.783" stop-color="#ff7332"/><stop offset="0.804" stop-color="#ff823a"/><stop offset="0.846" stop-color="#ff9641"/><stop offset="0.901" stop-color="#ffa344"/><stop offset="0.981" stop-color="#ffa143"/><stop offset="1.000" stop-color="#ff9c42"/></linearGradient>
<linearGradient id="g39" gradientUnits="userSpaceOnUse" x1="133.1" x2="506.1" y1="0" y2="0"><stop offset="0.000" stop-color="#270806"/><stop offset="0.048" stop-color="#210605"/><stop offset="0.098" stop-color="#010000"/><stop offset="0.113" stop-color="#020000"/><stop offset="0.168" stop-color="#280806"/><stop offset="0.213" stop-color="#2f0a06"/><stop offset="0.247" stop-color="#290806"/><stop offset="0.271" stop-color="#1d0505"/><stop offset="0.299" stop-color="#080102"/><stop offset="0.320" stop-color="#000000"/><stop offset="0.336" stop-color="#040001"/><stop offset="0.349" stop-color="#0e0203"/><stop offset="0.369" stop-color="#2b0906"/><stop offset="0.391" stop-color="#451307"/><stop offset="0.495" stop-color="#852e0e"/><stop offset="0.547" stop-color="#963410"/><stop offset="0.605" stop-color="#943310"/><stop offset="0.617" stop-color="#90320f"/><stop offset="0.627" stop-color="#7e2b0d"/><stop offset="0.638" stop-color="#642009"/><stop offset="0.650" stop-color="#401107"/><stop offset="0.668" stop-color="#160404"/><stop offset="0.674" stop-color="#050101"/><stop offset="0.681" stop-color="#000000"/><stop offset="0.686" stop-color="#050001"/><stop offset="0.690" stop-color="#100203"/><stop offset="0.700" stop-color="#380d07"/><stop offset="0.709" stop-color="#6b230a"/><stop offset="0.717" stop-color="#9b3511"/><stop offset="0.725" stop-color="#bb3a13"/><stop offset="0.735" stop-color="#d53c14"/><stop offset="0.752" stop-color="#f94519"/><stop offset="0.756" stop-color="#ff491c"/><stop offset="0.775" stop-color="#ff6a2d"/><stop offset="0.787" stop-color="#ff7935"/><stop offset="0.830" stop-color="#ff9140"/><stop offset="0.886" stop-color="#ffa243"/><stop offset="0.940" stop-color="#ffa444"/><stop offset="0.988" stop-color="#ffa043"/><stop offset="1.000" stop-color="#ff9c42"/></linearGradient>
<linearGradient id="g40" gradientUnits="userSpaceOnUse" x1="133.1" x2="506.1" y1="0" y2="0"><stop offset="0.000" stop-color="#270806"/><stop offset="0.050" stop-color="#220605"/><stop offset="0.099" stop-color="#000000"/><stop offset="0.114" stop-color="#020000"/><stop offset="0.169" stop-color="#290806"/><stop offset="0.214" stop-color="#300a06"/><stop offset="0.248" stop-color="#290806"/><stop offset="0.271" stop-color="#1e0505"/><stop offset="0.299" stop-color="#080102"/><stop offset="0.320" stop-color="#000000"/><stop offset="0.336" stop-color="#040001"/><stop offset="0.349" stop-color="#0d0203"/><stop offset="0.370" stop-color="#2d0906"/><stop offset="0.391" stop-color="#461307"/><stop offset="0.495" stop-color="#872e0e"/><stop offset="0.546" stop-color="#983410"/><stop offset="0.602" stop-color="#973410"/><stop offset="0.615" stop-color="#933310"/><stop offset="0.625" stop-color="#852e0e"/><stop offset="0.637" stop-color="#69220a"/><stop offset="0.650" stop-color="#401107"/><stop offset="0.668" stop-color="#150304"/><stop offset="0.674" stop-color="#050001"/><stop offset="0.681" stop-color="#000000"/><stop offset="0.686" stop-color="#050101"/><stop offset="0.692" stop-color="#180404"/><stop offset="0.700" stop-color="#3b0f07"/><stop offset="0.708" stop-color="#67210a"/><stop offset="0.716" stop-color="#993511"/><stop offset="0.723" stop-color="#b63913"/><stop offset="0.732" stop-color="#d23b14"/><stop offset="0.751" stop-color="#fa4519"/><stop offset="0.756" stop-color="#ff4b1c"/><stop offset="0.780" stop-color="#ff7432"/><stop offset="0.798" stop-color="#ff823a"/><stop offset="0.839" stop-color="#ff9641"/><stop offset="0.894" stop-color="#ffa444"/><stop offset="0.976" stop-color="#ffa344"/><stop offset="1.000" stop-color="#ff9d42"/></linearGradient>
<linearGradient id="g41" gradientUnits="userSpaceOnUse" x1="133.1" x2="506.1" y1="0" y2="0"><stop offset="0.000" stop-color="#270806"/><stop offset="0.050" stop-color="#220706"/><stop offset="0.099" stop-color="#010000"/><stop offset="0.114" stop-color="#020000"/><stop offset="0.153" stop-color="#1e0505"/><stop offset="0.172" stop-color="#2a0806"/><stop offset="0.216" stop-color="#300b06"/><stop offset="0.249" stop-color="#290806"/><stop offset="0.272" stop-color="#1d0505"/><stop offset="0.300" stop-color="#080102"/><stop offset="0.322" stop-color="#000000"/><stop offset="0.338" stop-color="#050001"/><stop offset="0.350" stop-color="#0f0203"/><stop offset="0.371" stop-color="#2f0a06"/><stop offset="0.393" stop-color="#481407"/><stop offset="0.493" stop-color="#892f0e"/><stop offset="0.546" stop-color="#9a3511"/><stop offset="0.602" stop-color="#993511"/><stop offset="0.615" stop-color="#953310"/><stop offset="0.625" stop-color="#872e0e"/><stop offset="0.637" stop-color="#69220a"/><stop offset="0.649" stop-color="#431207"/><stop offset="0.668" stop-color="#140304"/><stop offset="0.673" stop-color="#060101"/><stop offset="0.680" stop-color="#000000"/><stop offset="0.685" stop-color="#040001"/><stop offset="0.689" stop-color="#0f0203"/><stop offset="0.698" stop-color="#370d07"/><stop offset="0.706" stop-color="#642009"/><stop offset="0.714" stop-color="#973410"/><stop offset="0.721" stop-color="#b53913"/><stop offset="0.731" stop-color="#d23b14"/><stop offset="0.749" stop-color="#fa4519"/><stop offset="0.755" stop-color="#ff4b1c"/><stop offset="0.780" stop-color="#ff7633"/><stop offset="0.799" stop-color="#ff843b"/><stop offset="0.843" stop-color="#ff9942"/><stop offset="0.895" stop-color="#ffa544"/><stop offset="0.979" stop-color="#ffa344"/><stop offset="1.000" stop-color="#ff9e42"/></linearGradient>
<linearGradient id="g42" gradientUnits="userSpaceOnUse" x1="133.1" x2="506.1" y1="0" y2="0"><stop offset="0.000" stop-color="#280806"/><stop offset="0.050" stop-color="#230706"/><stop offset="0.070" stop-color="#150304"/><stop offset="0.102" stop-color="#000000"/><stop offset="0.117" stop-color="#030001"/><stop offset="0.157" stop-color="#210605"/><stop offset="0.176" stop-color="#2b0906"/><stop offset="0.218" stop-color="#310b07"/><stop offset="0.255" stop-color="#270806"/><stop offset="0.275" stop-color="#1c0505"/><stop offset="0.300" stop-color="#080102"/><stop offset="0.322" stop-color="#000000"/><stop offset="0.338" stop-color="#040001"/><stop offset="0.350" stop-color="#0e0203"/><stop offset="0.371" stop-color="#2f0a06"/><stop offset="0.393" stop-color="#481407"/><stop offset="0.492" stop-color="#8a300f"/><stop offset="0.544" stop-color="#9c3511"/><stop offset="0.599" stop-color="#9b3511"/><stop offset="0.615" stop-color="#973410"/><stop offset="0.625" stop-color="#882f0e"/><stop offset="0.635" stop-color="#6e240b"/><stop offset="0.649" stop-color="#431207"/><stop offset="0.668" stop-color="#130304"/><stop offset="0.673" stop-color="#050101"/><stop offset="0.680" stop-color="#000000"/><stop offset="0.685" stop-color="#050001"/><stop offset="0.689" stop-color="#100203"/><stop offset="0.697" stop-color="#330c07"/><stop offset="0.706" stop-color="#68210a"/><stop offset="0.714" stop-color="#9b3511"/><stop offset="0.721" stop-color="#b83913"/><stop offset="0.731" stop-color="#d53c14"/><stop offset="0.749" stop-color="#fc461a"/><stop offset="0.756" stop-color="#ff4f1f"/><stop offset="0.777" stop-color="#ff7533"/><stop offset="0.792" stop-color="#ff823a"/><stop offset="0.834" stop-color="#ff9741"/><stop offset="0.887" stop-color="#ffa544"/><stop offset="0.956" stop-color="#ffa545"/><stop offset="0.993" stop-color="#ffa043"/><stop offset="1.000" stop-color="#ff9e43"/></linearGradient>
<linearGradient id="g43" gradientUnits="userSpaceOnUse" x1="133.1" x2="506.1" y1="0" y2="0"><stop offset="0.000" stop-color="#280806"/><stop offset="0.050" stop-color="#230706"/><stop offset="0.067" stop-color="#180404"/><stop offset="0.102" stop-color="#010000"/><stop offset="0.117" stop-color="#020000"/><stop offset="0.154" stop-color="#1e0505"/><stop offset="0.173" stop-color="#2a0906"/><stop offset="0.217" stop-color="#310b07"/><stop offset="0.251" stop-color="#290806"/><stop offset="0.273" stop-color="#1d0505"/><stop offset="0.300" stop-color="#080102"/><stop offset="0.322" stop-color="#000000"/><stop offset="0.338" stop-color="#040001"/><stop offset="0.350" stop-color="#0e0203"/><stop offset="0.373" stop-color="#310b07"/><stop offset="0.393" stop-color="#491507"/><stop offset="0.491" stop-color="#8b300f"/><stop offset="0.543" stop-color="#9d3611"/><stop offset="0.594" stop-color="#9d3611"/><stop offset="0.614" stop-color="#9a3511"/><stop offset="0.623" stop-color="#8c300f"/><stop offset="0.635" stop-color="#6f240b"/><stop offset="0.647" stop-color="#461307"/><stop offset="0.665" stop-color="#1a0505"/><stop offset="0.672" stop-color="#070101"/><stop offset="0.678" stop-color="#000000"/><stop offset="0.685" stop-color="#050101"/><stop offset="0.689" stop-color="#120303"/><stop offset="0.697" stop-color="#360d07"/><stop offset="0.705" stop-color="#642009"/><stop offset="0.713" stop-color="#983411"/><stop offset="0.720" stop-color="#b73913"/><stop offset="0.729" stop-color="#d43c14"/><stop offset="0.745" stop-color="#f84419"/><stop offset="0.751" stop-color="#ff491c"/><stop offset="0.763" stop-color="#ff5d26"/><stop offset="0.779" stop-color="#ff7835"/><stop offset="0.798" stop-color="#ff873c"/><stop offset="0.847" stop-color="#ff9c42"/><stop offset="0.899" stop-color="#ffa645"/><stop offset="0.981" stop-color="#ffa344"/><stop offset="1.000" stop-color="#ff9f43"/></linearGradient>
<linearGradient id="g44" gradientUnits="userSpaceOnUse" x1="133.1" x2="506.1" y1="0" y2="0"><stop offset="0.000" stop-color="#280806"/><stop offset="0.050" stop-color="#240706"/><stop offset="0.066" stop-color="#1a0505"/><stop offset="0.102" stop-color="#010000"/><stop offset="0.117" stop-color="#020000"/><stop offset="0.154" stop-color="#1e0505"/><stop offset="0.173" stop-color="#2a0906"/><stop offset="0.217" stop-color="#320b07"/><stop offset="0.249" stop-color="#2a0906"/><stop offset="0.272" stop-color="#1f0605"/><stop offset="0.300" stop-color="#080102"/><stop offset="0.322" stop-color="#000000"/><stop offset="0.338" stop-color="#040001"/><stop offset="0.350" stop-color="#0e0203"/><stop offset="0.374" stop-color="#330b07"/><stop offset="0.393" stop-color="#491507"/><stop offset="0.491" stop-color="#8d310f"/><stop offset="0.543" stop-color="#9f3611"/><stop offset="0.595" stop-color="#9f3611"/><stop offset="0.614" stop-color="#9b3511"/><stop offset="0.623" stop-color="#8d310f"/><stop offset="0.635" stop-color="#6f250b"/><stop offset="0.647" stop-color="#461307"/><stop offset="0.665" stop-color="#190404"/><stop offset="0.672" stop-color="#070101"/><stop offset="0.678" stop-color="#000000"/><stop offset="0.685" stop-color="#060101"/><stop offset="0.690" stop-color="#1a0405"/><stop offset="0.697" stop-color="#380e07"/><stop offset="0.705" stop-color="#68210a"/><stop offset="0.713" stop-color="#9c3611"/><stop offset="0.720" stop-color="#ba3a13"/><stop offset="0.729" stop-color="#d73c14"/><stop offset="0.743" stop-color="#f54318"/><stop offset="0.749" stop-color="#ff491b"/><stop offset="0.760" stop-color="#ff5a25"/><stop offset="0.776" stop-color="#ff7734"/><stop offset="0.790" stop-color="#ff833b"/><stop offset="0.832" stop-color="#ff9842"/><stop offset="0.885" stop-color="#ffa545"/><stop offset="0.952" stop-color="#ffa645"/><stop offset="1.000" stop-color="#ffa043"/></linearGradient>
<linearGradient id="g45" gradientUnits="userSpaceOnUse" x1="133.1" x2="506.1" y1="0" y2="0"><stop offset="0.000" stop-color="#280806"/><stop offset="0.050" stop-color="#240706"/><stop offset="0.066" stop-color="#1b0505"/><stop offset="0.102" stop-color="#010000"/><stop offset="0.117" stop-color="#020000"/><stop offset="0.153" stop-color="#1c0505"/><stop offset="0.173" stop-color="#2a0906"/><stop offset="0.217" stop-color="#320b07"/><stop offset="0.248" stop-color="#2b0906"/><stop offset="0.272" stop-color="#1f0605"/><stop offset="0.300" stop-color="#090102"/><stop offset="0.323" stop-color="#000000"/><stop offset="0.340" stop-color="#060101"/><stop offset="0.351" stop-color="#0f0203"/><stop offset="0.373" stop-color="#310b07"/><stop offset="0.393" stop-color="#4a1507"/><stop offset="0.489" stop-color="#8e310f"/><stop offset="0.542" stop-color="#a13711"/><stop offset="0.590" stop-color="#a13711"/><stop offset="0.614" stop-color="#9d3611"/><stop offset="0.623" stop-color="#8f310f"/><stop offset="0.634" stop-color="#74270b"/><stop offset="0.647" stop-color="#461307"/><stop offset="0.665" stop-color="#180404"/><stop offset="0.672" stop-color="#060101"/><stop offset="0.678" stop-color="#000000"/><stop offset="0.685" stop-color="#070101"/><stop offset="0.692" stop-color="#210605"/><stop offset="0.698" stop-color="#421207"/><stop offset="0.705" stop-color="#6c230a"/><stop offset="0.712" stop-color="#993511"/><stop offset="0.718" stop-color="#b83913"/><stop offset="0.728" stop-color="#d63c14"/><stop offset="0.740" stop-color="#f34218"/><stop offset="0.748" stop-color="#ff491b"/><stop offset="0.759" stop-color="#ff5a24"/><stop offset="0.776" stop-color="#ff7935"/><stop offset="0.791" stop-color="#ff853c"/><stop offset="0.838" stop-color="#ff9b42"/><stop offset="0.893" stop-color="#ffa746"/><stop offset="0.976" stop-color="#ffa544"/><stop offset="1.000" stop-color="#ffa043"/></linearGradient>
<linearGradient id="g46" gradientUnits="userSpaceOnUse" x1="133.1" x2="506.1" y1="0" y2="0"><stop offset="0.000" stop-color="#290806"/><stop offset="0.050" stop-color="#240706"/><stop offset="0.064" stop-color="#1d0505"/><stop offset="0.102" stop-color="#020000"/><stop offset="0.117" stop-color="#010000"/><stop offset="0.153" stop-color="#1b0505"/><stop offset="0.173" stop-color="#2a0906"/><stop offset="0.217" stop-color="#320b07"/><stop offset="0.248" stop-color="#2c0906"/><stop offset="0.272" stop-color="#200605"/><stop offset="0.302" stop-color="#080102"/><stop offset="0.323" stop-color="#000000"/><stop offset="0.340" stop-color="#050101"/><stop offset="0.351" stop-color="#0f0203"/><stop offset="0.374" stop-color="#330b07"/><stop offset="0.393" stop-color="#4a1507"/><stop offset="0.488" stop-color="#8f310f"/><stop offset="0.540" stop-color="#a23712"/><stop offset="0.586" stop-color="#a33712"/><stop offset="0.614" stop-color="#9e3611"/><stop offset="0.623" stop-color="#90320f"/><stop offset="0.634" stop-color="#75270c"/><stop offset="0.646" stop-color="#4a1507"/><stop offset="0.662" stop-color="#1f0605"/><stop offset="0.670" stop-color="#080102"/><stop offset="0.677" stop-color="#000000"/><stop offset="0.684" stop-color="#050101"/><stop offset="0.688" stop-color="#110303"/><stop offset="0.696" stop-color="#360d07"/><stop offset="0.704" stop-color="#66210a"/><stop offset="0.710" stop-color="#953310"/><stop offset="0.716" stop-color="#b03912"/><stop offset="0.725" stop-color="#d13b14"/><stop offset="0.737" stop-color="#f04117"/><stop offset="0.747" stop-color="#ff491b"/><stop offset="0.756" stop-color="#ff5623"/><stop offset="0.773" stop-color="#ff7633"/><stop offset="0.786" stop-color="#ff833a"/><stop offset="0.827" stop-color="#ff9842"/><stop offset="0.875" stop-color="#ffa544"/><stop offset="0.932" stop-color="#ffa846"/><stop offset="0.987" stop-color="#ffa344"/><stop offset="1.000" stop-color="#ffa143"/></linearGradient>
<linearGradient id="g47" gradientUnits="userSpaceOnUse" x1="133.1" x2="506.1" y1="0" y2="0"><stop offset="0.000" stop-color="#290806"/><stop offset="0.050" stop-color="#250706"/><stop offset="0.064" stop-color="#1e0505"/><stop offset="0.102" stop-color="#020000"/><stop offset="0.117" stop-color="#010000"/><stop offset="0.153" stop-color="#1b0505"/><stop offset="0.174" stop-color="#2b0906"/><stop offset="0.217" stop-color="#330b07"/><stop offset="0.248" stop-color="#2c0906"/><stop offset="0.273" stop-color="#1f0605"/><stop offset="0.302" stop-color="#080102"/><stop offset="0.323" stop-color="#000000"/><stop offset="0.340" stop-color="#050101"/><stop offset="0.351" stop-color="#0e0203"/><stop offset="0.375" stop-color="#350c07"/><stop offset="0.394" stop-color="#4c1608"/><stop offset="0.488" stop-color="#90320f"/><stop offset="0.539" stop-color="#a33712"/><stop offset="0.582" stop-color="#a53712"/><stop offset="0.614" stop-color="#9f3611"/><stop offset="0.623" stop-color="#913210"/><stop offset="0.634" stop-color="#75270c"/><stop offset="0.646" stop-color="#4a1507"/><stop offset="0.662" stop-color="#1f0605"/><stop offset="0.670" stop-color="#080102"/><stop offset="0.677" stop-color="#000000"/><stop offset="0.684" stop-color="#060101"/><stop offset="0.688" stop-color="#130304"/><stop offset="0.696" stop-color="#380e07"/><stop offset="0.704" stop-color="#6a220a"/><stop offset="0.710" stop-color="#983511"/><stop offset="0.716" stop-color="#b33913"/><stop offset="0.725" stop-color="#d43b14"/><stop offset="0.736" stop-color="#f04117"/><stop offset="0.745" stop-color="#fe481b"/><stop offset="0.755" stop-color="#ff5622"/><stop offset="0.772" stop-color="#ff7633"/><stop offset="0.784" stop-color="#ff843b"/><stop offset="0.826" stop-color="#ff9942"/><stop offset="0.873" stop-color="#ffa545"/><stop offset="0.928" stop-color="#ffa846"/><stop offset="0.985" stop-color="#ffa344"/><stop offset="1.000" stop-color="#ffa143"/></linearGradient>
<linearGradient id="g48" gradientUnits="userSpaceOnUse" x1="133.1" x2="506.1" y1="0" y2="0"><stop offset="0.000" stop-color="#290806"/><stop offset="0.050" stop-color="#250706"/><stop offset="0.064" stop-color="#1e0605"/><stop offset="0.102" stop-color="#020000"/><stop offset="0.117" stop-color="#010000"/><stop offset="0.150" stop-color="#180404"/><stop offset="0.173" stop-color="#2a0906"/><stop offset="0.216" stop-color="#330c07"/><stop offset="0.245" stop-color="#2e0a06"/><stop offset="0.272" stop-color="#210605"/><stop offset="0.302" stop-color="#090102"/><stop offset="0.324" stop-color="#000000"/><stop offset="0.342" stop-color="#060101"/><stop offset="0.353" stop-color="#100203"/><stop offset="0.375" stop-color="#350c07"/><stop offset="0.394" stop-color="#4d1608"/><stop offset="0.487" stop-color="#913210"/><stop offset="0.538" stop-color="#a43712"/><stop offset="0.579" stop-color="#a63812"/><stop offset="0.613" stop-color="#a23712"/><stop offset="0.622" stop-color="#953310"/><stop offset="0.634" stop-color="#76270c"/><stop offset="0.646" stop-color="#491507"/><stop offset="0.662" stop-color="#1e0605"/><stop offset="0.670" stop-color="#070101"/><stop offset="0.677" stop-color="#000000"/><stop offset="0.684" stop-color="#060101"/><stop offset="0.689" stop-color="#1a0505"/><stop offset="0.696" stop-color="#3a0e07"/><stop offset="0.704" stop-color="#6d240b"/><stop offset="0.710" stop-color="#9c3511"/><stop offset="0.717" stop-color="#bb3a13"/><stop offset="0.727" stop-color="#da3c14"/><stop offset="0.736" stop-color="#f24217"/><stop offset="0.744" stop-color="#fe481b"/><stop offset="0.753" stop-color="#ff5522"/><stop offset="0.771" stop-color="#ff7533"/><stop offset="0.783" stop-color="#ff843b"/><stop offset="0.823" stop-color="#ff9842"/><stop offset="0.867" stop-color="#ffa544"/><stop offset="0.921" stop-color="#ffa947"/><stop offset="0.984" stop-color="#ffa444"/><stop offset="1.000" stop-color="#ffa243"/></linearGradient>
<linearGradient id="g49" gradientUnits="userSpaceOnUse" x1="133.1" x2="506.1" y1="0" y2="0"><stop offset="0.000" stop-color="#290806"/><stop offset="0.050" stop-color="#250706"/><stop offset="0.064" stop-color="#1f0605"/><stop offset="0.102" stop-color="#030001"/><stop offset="0.117" stop-color="#010000"/><stop offset="0.149" stop-color="#160404"/><stop offset="0.174" stop-color="#2b0906"/><stop offset="0.217" stop-color="#330c07"/><stop offset="0.247" stop-color="#2e0a06"/><stop offset="0.273" stop-color="#200605"/><stop offset="0.302" stop-color="#090102"/><stop offset="0.324" stop-color="#000000"/><stop offset="0.342" stop-color="#060101"/><stop offset="0.353" stop-color="#100203"/><stop offset="0.375" stop-color="#350c07"/><stop offset="0.394" stop-color="#4d1608"/><stop offset="0.485" stop-color="#913210"/><stop offset="0.535" stop-color="#a53712"/><stop offset="0.572" stop-color="#a73812"/><stop offset="0.613" stop-color="#a33712"/><stop offset="0.622" stop-color="#953410"/><stop offset="0.633" stop-color="#7b2a0c"/><stop offset="0.646" stop-color="#491507"/><stop offset="0.662" stop-color="#1e0505"/><stop offset="0.670" stop-color="#070101"/><stop offset="0.677" stop-color="#000000"/><stop offset="0.684" stop-color="#070101"/><stop offset="0.689" stop-color="#1b0505"/><stop offset="0.696" stop-color="#3c0f07"/><stop offset="0.702" stop-color="#67210a"/><stop offset="0.709" stop-color="#973410"/><stop offset="0.714" stop-color="#b23912"/><stop offset="0.724" stop-color="#d43c14"/><stop offset="0.735" stop-color="#f24217"/><stop offset="0.743" stop-color="#fe481b"/><stop offset="0.752" stop-color="#ff5421"/><stop offset="0.769" stop-color="#ff7532"/><stop offset="0.782" stop-color="#ff843b"/><stop offset="0.820" stop-color="#ff9842"/><stop offset="0.863" stop-color="#ffa444"/><stop offset="0.917" stop-color="#ffa947"/><stop offset="0.983" stop-color="#ffa444"/><stop offset="1.000" stop-color="#ffa243"/></linearGradient>
<linearGradient id="g50" gradientUnits="userSpaceOnUse" x1="133.1" x2="506.1" y1="0" y2="0"><stop offset="0.000" stop-color="#2a0806"/><stop offset="0.050" stop-color="#260706"/><stop offset="0.066" stop-color="#1f0605"/><stop offset="0.103" stop-color="#020000"/><stop offset="0.117" stop-color="#010000"/><stop offset="0.147" stop-color="#150304"/><stop offset="0.174" stop-color="#2b0906"/><stop offset="0.217" stop-color="#340c07"/><stop offset="0.245" stop-color="#2e0a06"/><stop offset="0.273" stop-color="#200605"/><stop offset="0.302" stop-color="#090102"/><stop offset="0.324" stop-color="#000000"/><stop offset="0.342" stop-color="#060101"/><stop offset="0.353" stop-color="#100203"/><stop offset="0.375" stop-color="#350c07"/><stop offset="0.394" stop-color="#4d1708"/><stop offset="0.485" stop-color="#933310"/><stop offset="0.535" stop-color="#a63812"/><stop offset="0.572" stop-color="#a93812"/><stop offset="0.613" stop-color="#a43712"/><stop offset="0.622" stop-color="#963410"/><stop offset="0.633" stop-color="#7b2a0d"/><stop offset="0.645" stop-color="#4d1708"/><stop offset="0.661" stop-color="#210605"/><stop offset="0.670" stop-color="#060101"/><stop offset="0.677" stop-color="#000000"/><stop offset="0.684" stop-color="#080102"/><stop offset="0.690" stop-color="#230706"/><stop offset="0.697" stop-color="#461407"/><stop offset="0.704" stop-color="#74270b"/><stop offset="0.709" stop-color="#9a3511"/><stop offset="0.714" stop-color="#b53913"/><stop offset="0.724" stop-color="#d63c14"/><stop offset="0.733" stop-color="#f14217"/><stop offset="0.741" stop-color="#fe471b"/><stop offset="0.751" stop-color="#ff5321"/><stop offset="0.769" stop-color="#ff7633"/><stop offset="0.782" stop-color="#ff853b"/><stop offset="0.823" stop-color="#ff9a42"/><stop offset="0.867" stop-color="#ffa545"/><stop offset="0.922" stop-color="#ffa947"/><stop offset="0.983" stop-color="#ffa444"/><stop offset="1.000" stop-color="#ffa243"/></linearGradient>
<linearGradient id="g51" gradientUnits="userSpaceOnUse" x1="133.1" x2="506.1" y1="0" y2="0"><stop offset="0.000" stop-color="#2a0806"/><stop offset="0.050" stop-color="#260706"/><stop offset="0.066" stop-color="#1f0605"/><stop offset="0.103" stop-color="#020001"/><stop offset="0.118" stop-color="#010000"/><stop offset="0.150" stop-color="#170404"/><stop offset="0.174" stop-color="#2b0906"/><stop offset="0.217" stop-color="#340c07"/><stop offset="0.245" stop-color="#2f0a06"/><stop offset="0.273" stop-color="#210605"/><stop offset="0.302" stop-color="#090102"/><stop offset="0.324" stop-color="#000000"/><stop offset="0.342" stop-color="#060101"/><stop offset="0.353" stop-color="#0f0203"/><stop offset="0.377" stop-color="#370d07"/><stop offset="0.394" stop-color="#4e1708"/><stop offset="0.484" stop-color="#933310"/><stop offset="0.531" stop-color="#a63812"/><stop offset="0.567" stop-color="#aa3812"/><stop offset="0.613" stop-color="#a53812"/><stop offset="0.622" stop-color="#973410"/><stop offset="0.633" stop-color="#7c2a0d"/><stop offset="0.645" stop-color="#4d1708"/><stop offset="0.661" stop-color="#200605"/><stop offset="0.669" stop-color="#080102"/><stop offset="0.676" stop-color="#000000"/><stop offset="0.682" stop-color="#050101"/><stop offset="0.686" stop-color="#120303"/><stop offset="0.694" stop-color="#380e07"/><stop offset="0.701" stop-color="#631f09"/><stop offset="0.708" stop-color="#943310"/><stop offset="0.712" stop-color="#ab3812"/><stop offset="0.720" stop-color="#cb3b13"/><stop offset="0.732" stop-color="#f04117"/><stop offset="0.740" stop-color="#fd471a"/><stop offset="0.751" stop-color="#ff5421"/><stop offset="0.768" stop-color="#ff7533"/><stop offset="0.780" stop-color="#ff853b"/><stop offset="0.820" stop-color="#ff9942"/><stop offset="0.863" stop-color="#ffa545"/><stop offset="0.918" stop-color="#ffa948"/><stop offset="0.981" stop-color="#ffa544"/><stop offset="1.000" stop-color="#ffa344"/></linearGradient>
<linearGradient id="g52" gradientUnits="userSpaceOnUse" x1="133.1" x2="506.1" y1="0" y2="0"><stop offset="0.000" stop-color="#2a0906"/><stop offset="0.050" stop-color="#260806"/><stop offset="0.066" stop-color="#200605"/><stop offset="0.103" stop-color="#030001"/><stop offset="0.117" stop-color="#000000"/><stop offset="0.141" stop-color="#0f0203"/><stop offset="0.176" stop-color="#2c0906"/><stop offset="0.218" stop-color="#340c07"/><stop offset="0.247" stop-color="#2f0a06"/><stop offset="0.273" stop-color="#210605"/><stop offset="0.302" stop-color="#090102"/><stop offset="0.324" stop-color="#000000"/><stop offset="0.342" stop-color="#060101"/><stop offset="0.353" stop-color="#0f0203"/><stop offset="0.377" stop-color="#370d07"/><stop offset="0.394" stop-color="#4e1708"/><stop offset="0.484" stop-color="#943310"/><stop offset="0.529" stop-color="#a63812"/><stop offset="0.566" stop-color="#ab3812"/><stop offset="0.613" stop-color="#a63812"/><stop offset="0.622" stop-color="#983410"/><stop offset="0.633" stop-color="#7c2a0d"/><stop offset="0.645" stop-color="#4d1608"/><stop offset="0.661" stop-color="#200605"/><stop offset="0.669" stop-color="#080102"/><stop offset="0.676" stop-color="#000000"/><stop offset="0.682" stop-color="#060101"/><stop offset="0.686" stop-color="#130304"/><stop offset="0.694" stop-color="#3a0e07"/><stop offset="0.701" stop-color="#652009"/><stop offset="0.708" stop-color="#973410"/><stop offset="0.713" stop-color="#b33913"/><stop offset="0.723" stop-color="#d63c14"/><stop offset="0.732" stop-color="#f14217"/><stop offset="0.740" stop-color="#fe481b"/><stop offset="0.749" stop-color="#ff5321"/><stop offset="0.768" stop-color="#ff7633"/><stop offset="0.780" stop-color="#ff853c"/><stop offset="0.822" stop-color="#ff9b42"/><stop offset="0.866" stop-color="#ffa645"/><stop offset="0.921" stop-color="#ffa948"/><stop offset="0.981" stop-color="#ffa545"/><stop offset="1.000" stop-color="#ffa344"/></linearGradient>
<linearGradient id="g53" gradientUnits="userSpaceOnUse" x1="133.1" x2="506.1" y1="0" y2="0"><stop offset="0.000" stop-color="#2a0906"/><stop offset="0.050" stop-color="#260806"/><stop offset="0.066" stop-color="#200605"/><stop offset="0.103" stop-color="#030001"/><stop offset="0.118" stop-color="#010000"/><stop offset="0.147" stop-color="#140304"/><stop offset="0.176" stop-color="#2c0906"/><stop offset="0.218" stop-color="#340c07"/><stop offset="0.247" stop-color="#2f0a06"/><stop offset="0.273" stop-color="#210605"/><stop offset="0.302" stop-color="#090102"/><stop offset="0.324" stop-color="#000000"/><stop offset="0.342" stop-color="#060101"/><stop offset="0.353" stop-color="#0f0203"/><stop offset="0.378" stop-color="#390e07"/><stop offset="0.395" stop-color="#501808"/><stop offset="0.483" stop-color="#943310"/><stop offset="0.525" stop-color="#a63812"/><stop offset="0.562" stop-color="#ab3812"/><stop offset="0.611" stop-color="#a73812"/><stop offset="0.619" stop-color="#9e3611"/><stop offset="0.631" stop-color="#812c0d"/><stop offset="0.645" stop-color="#4d1608"/><stop offset="0.661" stop-color="#200605"/><stop offset="0.669" stop-color="#080102"/><stop offset="0.676" stop-color="#000000"/><stop offset="0.682" stop-color="#060101"/><stop offset="0.686" stop-color="#140304"/><stop offset="0.693" stop-color="#340c07"/><stop offset="0.700" stop-color="#5e1d09"/><stop offset="0.708" stop-color="#993511"/><stop offset="0.713" stop-color="#b53913"/><stop offset="0.723" stop-color="#d73c14"/><stop offset="0.732" stop-color="#f34218"/><stop offset="0.740" stop-color="#fe481b"/><stop offset="0.749" stop-color="#ff5421"/><stop offset="0.767" stop-color="#ff7533"/><stop offset="0.779" stop-color="#ff853b"/><stop offset="0.818" stop-color="#ff9942"/><stop offset="0.858" stop-color="#ffa544"/><stop offset="0.913" stop-color="#ffaa48"/><stop offset="0.980" stop-color="#ffa545"/><stop offset="1.000" stop-color="#ffa344"/></linearGradient>
<linearGradient id="g54" gradientUnits="userSpaceOnUse" x1="133.1" x2="506.1" y1="0" y2="0"><stop offset="0.000" stop-color="#2a0906"/><stop offset="0.050" stop-color="#270806"/><stop offset="0.066" stop-color="#200605"/><stop offset="0.103" stop-color="#030001"/><stop offset="0.118" stop-color="#010000"/><stop offset="0.146" stop-color="#130304"/><stop offset="0.176" stop-color="#2c0906"/><stop offset="0.217" stop-color="#350c07"/><stop offset="0.245" stop-color="#300a06"/><stop offset="0.273" stop-color="#220605"/><stop offset="0.302" stop-color="#0a0102"/><stop offset="0.326" stop-color="#000000"/><stop offset="0.343" stop-color="#060101"/><stop offset="0.354" stop-color="#110203"/><stop offset="0.377" stop-color="#370d07"/><stop offset="0.394" stop-color="#4f1708"/><stop offset="0.483" stop-color="#953310"/><stop offset="0.525" stop-color="#a73812"/><stop offset="0.562" stop-color="#ac3812"/><stop offset="0.611" stop-color="#a83812"/><stop offset="0.619" stop-color="#9e3611"/><stop offset="0.631" stop-color="#812c0d"/><stop offset="0.645" stop-color="#4d1608"/><stop offset="0.661" stop-color="#1f0605"/><stop offset="0.669" stop-color="#070102"/><stop offset="0.676" stop-color="#000000"/><stop offset="0.682" stop-color="#060101"/><stop offset="0.686" stop-color="#150304"/><stop offset="0.693" stop-color="#350c07"/><stop offset="0.700" stop-color="#601e09"/><stop offset="0.708" stop-color="#9b3511"/><stop offset="0.713" stop-color="#b63913"/><stop offset="0.723" stop-color="#d93c14"/><stop offset="0.731" stop-color="#f14217"/><stop offset="0.739" stop-color="#fe481b"/><stop offset="0.749" stop-color="#ff5522"/><stop offset="0.765" stop-color="#ff7432"/><stop offset="0.779" stop-color="#ff863c"/><stop offset="0.820" stop-color="#ff9b42"/><stop offset="0.865" stop-color="#ffa645"/><stop offset="0.921" stop-color="#ffaa48"/><stop offset="0.981" stop-color="#ffa545"/><stop offset="1.000" stop-color="#ffa344"/></linearGradient>
<linearGradient id="g55" gradientUnits="userSpaceOnUse" x1="133.1" x2="506.1" y1="0" y2="0"><stop offset="0.000" stop-color="#2a0906"/><stop offset="0.050" stop-color="#270806"/><stop offset="0.066" stop-color="#210605"/><stop offset="0.103" stop-color="#030001"/><stop offset="0.118" stop-color="#000000"/><stop offset="0.145" stop-color="#120303"/><stop offset="0.176" stop-color="#2c0906"/><stop offset="0.217" stop-color="#350c07"/><stop offset="0.244" stop-color="#300b06"/><stop offset="0.273" stop-color="#220605"/><stop offset="0.303" stop-color="#090102"/><stop offset="0.326" stop-color="#000000"/><stop offset="0.343" stop-color="#060101"/><stop offset="0.354" stop-color="#110203"/><stop offset="0.378" stop-color="#390e07"/><stop offset="0.395" stop-color="#501808"/><stop offset="0.483" stop-color="#953410"/><stop offset="0.525" stop-color="#a73812"/><stop offset="0.562" stop-color="#ad3912"/><stop offset="0.611" stop-color="#a83812"/><stop offset="0.621" stop-color="#9c3611"/><stop offset="0.631" stop-color="#822c0d"/><stop offset="0.645" stop-color="#4d1608"/><stop offset="0.661" stop-color="#1f0605"/><stop offset="0.669" stop-color="#070101"/><stop offset="0.676" stop-color="#000000"/><stop offset="0.682" stop-color="#070101"/><stop offset="0.688" stop-color="#1b0505"/><stop offset="0.694" stop-color="#3e1007"/><stop offset="0.701" stop-color="#6c230a"/><stop offset="0.708" stop-color="#9d3611"/><stop offset="0.713" stop-color="#b83913"/><stop offset="0.723" stop-color="#da3c14"/><stop offset="0.731" stop-color="#f24217"/><stop offset="0.739" stop-color="#fe481b"/><stop offset="0.748" stop-color="#ff5321"/><stop offset="0.765" stop-color="#ff7432"/><stop offset="0.779" stop-color="#ff863c"/><stop offset="0.823" stop-color="#ff9d42"/><stop offset="0.873" stop-color="#ffa846"/><stop offset="0.938" stop-color="#ffa948"/><stop offset="1.000" stop-color="#ffa444"/></linearGradient>
<linearGradient id="g56" gradientUnits="userSpaceOnUse" x1="133.1" x2="506.1" y1="0" y2="0"><stop offset="0.000" stop-color="#2a0906"/><stop offset="0.050" stop-color="#270806"/><stop offset="0.066" stop-color="#210605"/><stop offset="0.103" stop-color="#040001"/><stop offset="0.118" stop-color="#000000"/><stop offset="0.142" stop-color="#100203"/><stop offset="0.177" stop-color="#2c0906"/><stop offset="0.218" stop-color="#350c07"/><stop offset="0.247" stop-color="#300a06"/><stop offset="0.273" stop-color="#220605"/><stop offset="0.303" stop-color="#090102"/><stop offset="0.326" stop-color="#000000"/><stop offset="0.343" stop-color="#060101"/><stop offset="0.354" stop-color="#100203"/><stop offset="0.378" stop-color="#390e07"/><stop offset="0.395" stop-color="#511808"/><stop offset="0.481" stop-color="#953310"/><stop offset="0.520" stop-color="#a63812"/><stop offset="0.558" stop-color="#ad3912"/><stop offset="0.611" stop-color="#a93812"/><stop offset="0.621" stop-color="#9d3611"/><stop offset="0.631" stop-color="#822d0d"/><stop offset="0.645" stop-color="#4d1608"/><stop offset="0.661" stop-color="#1f0605"/><stop offset="0.669" stop-color="#070101"/><stop offset="0.676" stop-color="#000000"/><stop offset="0.682" stop-color="#070101"/><stop offset="0.688" stop-color="#1c0505"/><stop offset="0.694" stop-color="#3f1007"/><stop offset="0.701" stop-color="#6d240a"/><stop offset="0.706" stop-color="#963410"/><stop offset="0.710" stop-color="#ad3912"/><stop offset="0.718" stop-color="#ce3b13"/><stop offset="0.729" stop-color="#f04117"/><stop offset="0.736" stop-color="#fc461a"/><stop offset="0.745" stop-color="#ff501f"/><stop offset="0.767" stop-color="#ff7734"/><stop offset="0.779" stop-color="#ff873c"/><stop offset="0.826" stop-color="#ff9e42"/><stop offset="0.883" stop-color="#ffa947"/><stop offset="0.971" stop-color="#ffa846"/><stop offset="1.000" stop-color="#ffa444"/></linearGradient>
<linearGradient id="g57" gradientUnits="userSpaceOnUse" x1="133.1" x2="506.1" y1="0" y2="0"><stop offset="0.000" stop-color="#2a0906"/><stop offset="0.050" stop-color="#270806"/><stop offset="0.067" stop-color="#200605"/><stop offset="0.103" stop-color="#040001"/><stop offset="0.118" stop-color="#000000"/><stop offset="0.141" stop-color="#0e0203"/><stop offset="0.177" stop-color="#2c0906"/><stop offset="0.218" stop-color="#350c07"/><stop offset="0.247" stop-color="#300a06"/><stop offset="0.273" stop-color="#220706"/><stop offset="0.303" stop-color="#090102"/><stop offset="0.326" stop-color="#000000"/><stop offset="0.343" stop-color="#060101"/><stop offset="0.354" stop-color="#100203"/><stop offset="0.378" stop-color="#390e07"/><stop offset="0.395" stop-color="#511808"/><stop offset="0.481" stop-color="#963410"/><stop offset="0.520" stop-color="#a73812"/><stop offset="0.558" stop-color="#ae3912"/><stop offset="0.611" stop-color="#a93812"/><stop offset="0.621" stop-color="#9d3611"/><stop offset="0.631" stop-color="#822d0e"/><stop offset="0.645" stop-color="#4d1608"/><stop offset="0.661" stop-color="#1e0605"/><stop offset="0.669" stop-color="#070101"/><stop offset="0.676" stop-color="#000000"/><stop offset="0.682" stop-color="#070102"/><stop offset="0.688" stop-color="#1d0505"/><stop offset="0.694" stop-color="#401107"/><stop offset="0.701" stop-color="#6e240b"/><stop offset="0.706" stop-color="#973410"/><stop offset="0.710" stop-color="#ae3912"/><stop offset="0.718" stop-color="#cf3b13"/><stop offset="0.729" stop-color="#f14217"/><stop offset="0.736" stop-color="#fd471a"/><stop offset="0.747" stop-color="#ff5220"/><stop offset="0.765" stop-color="#ff7633"/><stop offset="0.779" stop-color="#ff873d"/><stop offset="0.828" stop-color="#ff9f43"/><stop offset="0.893" stop-color="#ffaa48"/><stop offset="0.976" stop-color="#ffa745"/><stop offset="1.000" stop-color="#ffa444"/></linearGradient>
<linearGradient id="g58" gradientUnits="userSpaceOnUse" x1="133.1" x2="506.1" y1="0" y2="0"><stop offset="0.000" stop-color="#2b0906"/><stop offset="0.050" stop-color="#270806"/><stop offset="0.067" stop-color="#200605"/><stop offset="0.103" stop-color="#040001"/><stop offset="0.118" stop-color="#000000"/><stop offset="0.139" stop-color="#0d0203"/><stop offset="0.177" stop-color="#2c0906"/><stop offset="0.218" stop-color="#350c07"/><stop offset="0.247" stop-color="#300a06"/><stop offset="0.273" stop-color="#220706"/><stop offset="0.303" stop-color="#090102"/><stop offset="0.326" stop-color="#000000"/><stop offset="0.343" stop-color="#060101"/><stop offset="0.354" stop-color="#100203"/><stop offset="0.378" stop-color="#390e07"/><stop offset="0.395" stop-color="#511808"/><stop offset="0.481" stop-color="#963410"/><stop offset="0.520" stop-color="#a73812"/><stop offset="0.558" stop-color="#ae3912"/><stop offset="0.611" stop-color="#aa3812"/><stop offset="0.621" stop-color="#9d3611"/><stop offset="0.631" stop-color="#832d0e"/><stop offset="0.645" stop-color="#4d1608"/><stop offset="0.661" stop-color="#1e0505"/><stop offset="0.669" stop-color="#070101"/><stop offset="0.676" stop-color="#000000"/><stop offset="0.682" stop-color="#080102"/><stop offset="0.688" stop-color="#1d0505"/><stop offset="0.694" stop-color="#401107"/><stop offset="0.701" stop-color="#70250b"/><stop offset="0.706" stop-color="#983410"/><stop offset="0.710" stop-color="#af3912"/><stop offset="0.718" stop-color="#cf3b13"/><stop offset="0.729" stop-color="#f24217"/><stop offset="0.736" stop-color="#fd471a"/><stop offset="0.747" stop-color="#ff5321"/><stop offset="0.765" stop-color="#ff7633"/><stop offset="0.779" stop-color="#ff883d"/><stop offset="0.830" stop-color="#ffa043"/><stop offset="0.894" stop-color="#ffaa48"/><stop offset="0.976" stop-color="#ffa745"/><stop offset="1.000" stop-color="#ffa444"/></linearGradient>
<linearGradient id="g59" gradientUnits="userSpaceOnUse" x1="133.1" x2="506.1" y1="0" y2="0"><stop offset="0.000" stop-color="#2b0906"/><stop offset="0.050" stop-color="#270806"/><stop offset="0.067" stop-color="#210605"/><stop offset="0.103" stop-color="#040001"/><stop offset="0.118" stop-color="#000000"/><stop offset="0.139" stop-color="#0d0203"/><stop offset="0.177" stop-color="#2c0906"/><stop offset="0.218" stop-color="#350c07"/><stop offset="0.245" stop-color="#300b06"/><stop offset="0.273" stop-color="#220706"/><stop offset="0.303" stop-color="#090102"/><stop offset="0.326" stop-color="#000000"/><stop offset="0.343" stop-color="#060101"/><stop offset="0.354" stop-color="#100203"/><stop offset="0.378" stop-color="#390e07"/><stop offset="0.395" stop-color="#511808"/><stop offset="0.480" stop-color="#953410"/><stop offset="0.517" stop-color="#a63812"/><stop offset="0.556" stop-color="#ae3912"/><stop offset="0.611" stop-color="#aa3812"/><stop offset="0.621" stop-color="#9d3611"/><stop offset="0.631" stop-color="#832d0e"/><stop offset="0.645" stop-color="#4d1608"/><stop offset="0.661" stop-color="#1e0505"/><stop offset="0.669" stop-color="#060101"/><stop offset="0.676" stop-color="#000000"/><stop offset="0.682" stop-color="#080102"/><stop offset="0.688" stop-color="#1d0505"/><stop offset="0.693" stop-color="#390e07"/><stop offset="0.700" stop-color="#66210a"/><stop offset="0.706" stop-color="#993511"/><stop offset="0.712" stop-color="#b53913"/><stop offset="0.721" stop-color="#d93c14"/><stop offset="0.729" stop-color="#f24217"/><stop offset="0.736" stop-color="#fd471a"/><stop offset="0.747" stop-color="#ff5321"/><stop offset="0.764" stop-color="#ff7432"/><stop offset="0.777" stop-color="#ff873c"/><stop offset="0.822" stop-color="#ff9d42"/><stop offset="0.873" stop-color="#ffa847"/><stop offset="0.941" stop-color="#ffaa48"/><stop offset="1.000" stop-color="#ffa444"/></linearGradient>
<linearGradient id="g60" gradientUnits="userSpaceOnUse" x1="133.1" x2="506.1" y1="0" y2="0"><stop offset="0.000" stop-color="#2b0906"/><stop offset="0.050" stop-color="#270806"/><stop offset="0.067" stop-color="#210605"/><stop offset="0.103" stop-color="#040001"/><stop offset="0.118" stop-color="#000000"/><stop offset="0.139" stop-color="#0d0203"/><stop offset="0.177" stop-color="#2c0906"/><stop offset="0.218" stop-color="#350c07"/><stop offset="0.245" stop-color="#310b06"/><stop offset="0.273" stop-color="#220706"/><stop offset="0.303" stop-color="#090102"/><stop offset="0.326" stop-color="#000000"/><stop offset="0.343" stop-color="#060101"/><stop offset="0.354" stop-color="#100203"/><stop offset="0.379" stop-color="#3c0f07"/><stop offset="0.397" stop-color="#521908"/><stop offset="0.481" stop-color="#973410"/><stop offset="0.520" stop-color="#a73812"/><stop offset="0.558" stop-color="#af3912"/><stop offset="0.611" stop-color="#aa3812"/><stop offset="0.621" stop-color="#9e3611"/><stop offset="0.631" stop-color="#832d0e"/><stop offset="0.645" stop-color="#4d1608"/><stop offset="0.661" stop-color="#1e0505"/><stop offset="0.669" stop-color="#060101"/><stop offset="0.676" stop-color="#000000"/><stop offset="0.682" stop-color="#080102"/><stop offset="0.688" stop-color="#1e0505"/><stop offset="0.693" stop-color="#390e07"/><stop offset="0.700" stop-color="#67210a"/><stop offset="0.706" stop-color="#993511"/><stop offset="0.712" stop-color="#b63913"/><stop offset="0.721" stop-color="#d93c14"/><stop offset="0.729" stop-color="#f34218"/><stop offset="0.736" stop-color="#fd471b"/><stop offset="0.747" stop-color="#ff5321"/><stop offset="0.764" stop-color="#ff7532"/><stop offset="0.777" stop-color="#ff873c"/><stop offset="0.822" stop-color="#ff9d42"/><stop offset="0.873" stop-color="#ffa847"/><stop offset="0.941" stop-color="#ffaa48"/><stop offset="1.000" stop-color="#ffa444"/></linearGradient>
<linearGradient id="g61" gradientUnits="userSpaceOnUse" x1="133.1" x2="506.1" y1="0" y2="0"><stop offset="0.000" stop-color="#2b0906"/><stop offset="0.050" stop-color="#270806"/><stop offset="0.067" stop-color="#210605"/><stop offset="0.103" stop-color="#040001"/><stop offset="0.118" stop-color="#000000"/><stop offset="0.139" stop-color="#0d0203"/><stop offset="0.177" stop-color="#2c0906"/><stop offset="0.218" stop-color="#350c07"/><stop offset="0.245" stop-color="#310b06"/><stop offset="0.273" stop-color="#230706"/><stop offset="0.303" stop-color="#090102"/><stop offset="0.326" stop-color="#000000"/><stop offset="0.343" stop-color="#060101"/><stop offset="0.354" stop-color="#100203"/><stop offset="0.379" stop-color="#3c0f07"/><stop offset="0.397" stop-color="#521908"/><stop offset="0.481" stop-color="#973410"/><stop offset="0.520" stop-color="#a83812"/><stop offset="0.558" stop-color="#af3912"/><stop offset="0.611" stop-color="#aa3812"/><stop offset="0.621" stop-color="#9e3611"/><stop offset="0.631" stop-color="#832d0e"/><stop offset="0.645" stop-color="#4d1608"/><stop offset="0.661" stop-color="#1e0505"/><stop offset="0.669" stop-color="#060101"/><stop offset="0.676" stop-color="#000000"/><stop offset="0.682" stop-color="#080102"/><stop offset="0.688" stop-color="#1e0505"/><stop offset="0.693" stop-color="#390e07"/><stop offset="0.700" stop-color="#67210a"/><stop offset="0.706" stop-color="#9a3511"/><stop offset="0.712" stop-color="#b63913"/><stop offset="0.721" stop-color="#d93c14"/><stop offset="0.729" stop-color="#f34218"/><stop offset="0.736" stop-color="#fe471b"/><stop offset="0.747" stop-color="#ff5321"/><stop offset="0.764" stop-color="#ff7532"/><stop offset="0.777" stop-color="#ff873c"/><stop offset="0.823" stop-color="#ff9e42"/><stop offset="0.878" stop-color="#ffa947"/><stop offset="0.960" stop-color="#ffa947"/><stop offset="1.000" stop-color="#ffa444"/></linearGradient>
<linearGradient id="g62" gradientUnits="userSpaceOnUse" x1="133.1" x2="506.1" y1="0" y2="0"><stop offset="0.000" stop-color="#2b0906"/><stop offset="0.050" stop-color="#270806"/><stop offset="0.067" stop-color="#210605"/><stop offset="0.103" stop-color="#040001"/><stop offset="0.118" stop-color="#000000"/><stop offset="0.139" stop-color="#0d0203"/><stop offset="0.177" stop-color="#2c0906"/><stop offset="0.218" stop-color="#350c07"/><stop offset="0.245" stop-color="#310b06"/><stop offset="0.273" stop-color="#230706"/><stop offset="0.303" stop-color="#090102"/><stop offset="0.326" stop-color="#000000"/><stop offset="0.343" stop-color="#060101"/><stop offset="0.354" stop-color="#100203"/><stop offset="0.379" stop-color="#3c0f07"/><stop offset="0.397" stop-color="#521908"/><stop offset="0.481" stop-color="#973410"/><stop offset="0.520" stop-color="#a83812"/><stop offset="0.558" stop-color="#af3912"/><stop offset="0.611" stop-color="#aa3812"/><stop offset="0.621" stop-color="#9e3611"/><stop offset="0.631" stop-color="#832d0e"/><stop offset="0.645" stop-color="#4d1608"/><stop offset="0.661" stop-color="#1e0505"/><stop offset="0.669" stop-color="#060101"/><stop offset="0.676" stop-color="#000000"/><stop offset="0.682" stop-color="#080102"/><stop offset="0.688" stop-color="#1e0505"/><stop offset="0.693" stop-color="#390e07"/><stop offset="0.700" stop-color="#67210a"/><stop offset="0.706" stop-color="#9a3511"/><stop offset="0.712" stop-color="#b63913"/><stop offset="0.721" stop-color="#d93c14"/><stop offset="0.729" stop-color="#f34218"/><stop offset="0.736" stop-color="#fe471b"/><stop offset="0.747" stop-color="#ff5321"/><stop offset="0.764" stop-color="#ff7532"/><stop offset="0.777" stop-color="#ff873c"/><stop offset="0.823" stop-color="#ff9e42"/><stop offset="0.878" stop-color="#ffa947"/><stop offset="0.960" stop-color="#ffa947"/><stop offset="1.000" stop-color="#ffa444"/></linearGradient>
<linearGradient id="g63" gradientUnits="userSpaceOnUse" x1="133.1" x2="506.1" y1="0" y2="0"><stop offset="0.000" stop-color="#2b0906"/><stop offset="0.050" stop-color="#270806"/><stop offset="0.067" stop-color="#210605"/><stop offset="0.103" stop-color="#040001"/><stop offset="0.118" stop-color="#000000"/><stop offset="0.139" stop-color="#0d0203"/><stop offset="0.177" stop-color="#2c0906"/><stop offset="0.218" stop-color="#350c07"/><stop offset="0.245" stop-color="#310b06"/><stop offset="0.273" stop-color="#220706"/><stop offset="0.303" stop-color="#090102"/><stop offset="0.326" stop-color="#000000"/><stop offset="0.343" stop-color="#060101"/><stop offset="0.354" stop-color="#100203"/><stop offset="0.379" stop-color="#3c0f07"/><stop offset="0.397" stop-color="#521908"/><stop offset="0.481" stop-color="#973410"/><stop offset="0.520" stop-color="#a83812"/><stop offset="0.558" stop-color="#af3912"/><stop offset="0.611" stop-color="#aa3812"/><stop offset="0.621" stop-color="#9e3611"/><stop offset="0.631" stop-color="#832d0e"/><stop offset="0.645" stop-color="#4d1608"/><stop offset="0.661" stop-color="#1e0505"/><stop offset="0.669" stop-color="#060101"/><stop offset="0.676" stop-color="#000000"/><stop offset="0.682" stop-color="#080102"/><stop offset="0.688" stop-color="#1e0505"/><stop offset="0.693" stop-color="#390e07"/><stop offset="0.700" stop-color="#67210a"/><stop offset="0.706" stop-color="#993511"/><stop offset="0.712" stop-color="#b63913"/><stop offset="0.721" stop-color="#d93c14"/><stop offset="0.729" stop-color="#f34218"/><stop offset="0.736" stop-color="#fd471b"/><stop offset="0.747" stop-color="#ff5321"/><stop offset="0.764" stop-color="#ff7532"/><stop offset="0.777" stop-color="#ff873c"/><stop offset="0.823" stop-color="#ff9e42"/><stop offset="0.878" stop-color="#ffa947"/><stop offset="0.960" stop-color="#ffa947"/><stop offset="1.000" stop-color="#ffa444"/></linearGradient>
<linearGradient id="g64" gradientUnits="userSpaceOnUse" x1="133.1" x2="506.1" y1="0" y2="0"><stop offset="0.000" stop-color="#2b0906"/><stop offset="0.050" stop-color="#270806"/><stop offset="0.067" stop-color="#210605"/><stop offset="0.103" stop-color="#040001"/><stop offset="0.118" stop-color="#000000"/><stop offset="0.139" stop-color="#0d0203"/><stop offset="0.177" stop-color="#2c0906"/><stop offset="0.218" stop-color="#350c07"/><stop offset="0.245" stop-color="#300b06"/><stop offset="0.273" stop-color="#220706"/><stop offset="0.303" stop-color="#090102"/><stop offset="0.326" stop-color="#000000"/><stop offset="0.343" stop-color="#060101"/><stop offset="0.354" stop-color="#100203"/><stop offset="0.378" stop-color="#390e07"/><stop offset="0.395" stop-color="#511808"/><stop offset="0.480" stop-color="#963410"/><stop offset="0.516" stop-color="#a63812"/><stop offset="0.555" stop-color="#ae3912"/><stop offset="0.611" stop-color="#aa3812"/><stop offset="0.621" stop-color="#9d3611"/><stop offset="0.631" stop-color="#832d0e"/><stop offset="0.645" stop-color="#4d1608"/><stop offset="0.661" stop-color="#1e0505"/><stop offset="0.669" stop-color="#060101"/><stop offset="0.676" stop-color="#000000"/><stop offset="0.682" stop-color="#080102"/><stop offset="0.688" stop-color="#1d0505"/><stop offset="0.693" stop-color="#390e07"/><stop offset="0.700" stop-color="#66210a"/><stop offset="0.706" stop-color="#993511"/><stop offset="0.712" stop-color="#b63913"/><stop offset="0.721" stop-color="#d93c14"/><stop offset="0.729" stop-color="#f24217"/><stop offset="0.736" stop-color="#fd471a"/><stop offset="0.747" stop-color="#ff5321"/><stop offset="0.764" stop-color="#ff7432"/><stop offset="0.777" stop-color="#ff873c"/><stop offset="0.822" stop-color="#ff9d42"/><stop offset="0.873" stop-color="#ffa847"/><stop offset="0.941" stop-color="#ffaa48"/><stop offset="1.000" stop-color="#ffa444"/></linearGradient>
<linearGradient id="g65" gradientUnits="userSpaceOnUse" x1="133.1" x2="506.1" y1="0" y2="0"><stop offset="0.000" stop-color="#2b0906"/><stop offset="0.050" stop-color="#270806"/><stop offset="0.067" stop-color="#210605"/><stop offset="0.103" stop-color="#040001"/><stop offset="0.118" stop-color="#000000"/><stop offset="0.139" stop-color="#0d0203"/><stop offset="0.177" stop-color="#2c0906"/><stop offset="0.218" stop-color="#350c07"/><stop offset="0.245" stop-color="#300b06"/><stop offset="0.273" stop-color="#220706"/><stop offset="0.303" stop-color="#090102"/><stop offset="0.326" stop-color="#000000"/><stop offset="0.343" stop-color="#060101"/><stop offset="0.354" stop-color="#100203"/><stop offset="0.378" stop-color="#390e07"/><stop offset="0.395" stop-color="#511808"/><stop offset="0.480" stop-color="#953410"/><stop offset="0.517" stop-color="#a63812"/><stop offset="0.556" stop-color="#ae3912"/><stop offset="0.611" stop-color="#aa3812"/><stop offset="0.621" stop-color="#9d3611"/><stop offset="0.631" stop-color="#832d0e"/><stop offset="0.645" stop-color="#4d1608"/><stop offset="0.661" stop-color="#1e0505"/><stop offset="0.669" stop-color="#060101"/><stop offset="0.676" stop-color="#000000"/><stop offset="0.682" stop-color="#080102"/><stop offset="0.688" stop-color="#1d0505"/><stop offset="0.693" stop-color="#390e07"/><stop offset="0.700" stop-color="#662009"/><stop offset="0.706" stop-color="#983411"/><stop offset="0.712" stop-color="#b53913"/><stop offset="0.721" stop-color="#d83c14"/><stop offset="0.729" stop-color="#f24217"/><stop offset="0.736" stop-color="#fd471a"/><stop offset="0.747" stop-color="#ff5321"/><stop offset="0.765" stop-color="#ff7633"/><stop offset="0.779" stop-color="#ff883d"/><stop offset="0.830" stop-color="#ffa043"/><stop offset="0.894" stop-color="#ffaa48"/><stop offset="0.976" stop-color="#ffa745"/><stop offset="1.000" stop-color="#ffa444"/></linearGradient>
<linearGradient id="g66" gradientUnits="userSpaceOnUse" x1="133.1" x2="506.1" y1="0" y2="0"><stop offset="0.000" stop-color="#2b0906"/><stop offset="0.050" stop-color="#270806"/><stop offset="0.067" stop-color="#200605"/><stop offset="0.103" stop-color="#040001"/><stop offset="0.118" stop-color="#000000"/><stop offset="0.139" stop-color="#0d0203"/><stop offset="0.177" stop-color="#2c0906"/><stop offset="0.218" stop-color="#350c07"/><stop offset="0.247" stop-color="#300a06"/><stop offset="0.273" stop-color="#220706"/><stop offset="0.303" stop-color="#090102"/><stop offset="0.326" stop-color="#000000"/><stop offset="0.343" stop-color="#060101"/><stop offset="0.354" stop-color="#100203"/><stop offset="0.378" stop-color="#390e07"/><stop offset="0.395" stop-color="#511808"/><stop offset="0.481" stop-color="#963410"/><stop offset="0.520" stop-color="#a73812"/><stop offset="0.558" stop-color="#ae3912"/><stop offset="0.611" stop-color="#a93812"/><stop offset="0.621" stop-color="#9d3611"/><stop offset="0.631" stop-color="#822d0e"/><stop offset="0.645" stop-color="#4d1608"/><stop offset="0.661" stop-color="#1e0605"/><stop offset="0.669" stop-color="#070101"/><stop offset="0.676" stop-color="#000000"/><stop offset="0.682" stop-color="#070102"/><stop offset="0.688" stop-color="#1d0505"/><stop offset="0.694" stop-color="#401107"/><stop offset="0.701" stop-color="#6f240b"/><stop offset="0.706" stop-color="#973410"/><stop offset="0.710" stop-color="#ae3912"/><stop offset="0.718" stop-color="#cf3b13"/><stop offset="0.729" stop-color="#f14217"/><stop offset="0.736" stop-color="#fd471a"/><stop offset="0.747" stop-color="#ff5221"/><stop offset="0.765" stop-color="#ff7633"/><stop offset="0.779" stop-color="#ff873d"/><stop offset="0.830" stop-color="#ffa043"/><stop offset="0.894" stop-color="#ffaa48"/><stop offset="0.976" stop-color="#ffa745"/><stop offset="1.000" stop-color="#ffa444"/></linearGradient>
<linearGradient id="g67" gradientUnits="userSpaceOnUse" x1="133.1" x2="506.1" y1="0" y2="0"><stop offset="0.000" stop-color="#2a0906"/><stop offset="0.050" stop-color="#270806"/><stop offset="0.066" stop-color="#210605"/><stop offset="0.103" stop-color="#040001"/><stop offset="0.118" stop-color="#000000"/><stop offset="0.141" stop-color="#0f0203"/><stop offset="0.177" stop-color="#2c0906"/><stop offset="0.218" stop-color="#350c07"/><stop offset="0.247" stop-color="#300a06"/><stop offset="0.273" stop-color="#220606"/><stop offset="0.303" stop-color="#090102"/><stop offset="0.326" stop-color="#000000"/><stop offset="0.343" stop-color="#060101"/><stop offset="0.354" stop-color="#100203"/><stop offset="0.378" stop-color="#390e07"/><stop offset="0.395" stop-color="#511808"/><stop offset="0.481" stop-color="#953410"/><stop offset="0.520" stop-color="#a63812"/><stop offset="0.558" stop-color="#ae3912"/><stop offset="0.611" stop-color="#a93812"/><stop offset="0.621" stop-color="#9d3611"/><stop offset="0.631" stop-color="#822d0e"/><stop offset="0.645" stop-color="#4d1608"/><stop offset="0.661" stop-color="#1f0605"/><stop offset="0.669" stop-color="#070101"/><stop offset="0.676" stop-color="#000000"/><stop offset="0.682" stop-color="#070101"/><stop offset="0.688" stop-color="#1c0505"/><stop offset="0.694" stop-color="#3f1007"/><stop offset="0.701" stop-color="#6e240b"/><stop offset="0.706" stop-color="#963410"/><stop offset="0.710" stop-color="#ad3912"/><stop offset="0.718" stop-color="#ce3b13"/><stop offset="0.729" stop-color="#f04117"/><stop offset="0.736" stop-color="#fc471a"/><stop offset="0.745" stop-color="#ff501f"/><stop offset="0.767" stop-color="#ff7834"/><stop offset="0.779" stop-color="#ff873c"/><stop offset="0.826" stop-color="#ff9e42"/><stop offset="0.885" stop-color="#ffa948"/><stop offset="0.972" stop-color="#ffa746"/><stop offset="1.000" stop-color="#ffa444"/></linearGradient>
<linearGradient id="g68" gradientUnits="userSpaceOnUse" x1="133.1" x2="506.1" y1="0" y2="0"><stop offset="0.000" stop-color="#2a0906"/><stop offset="0.050" stop-color="#270806"/><stop offset="0.066" stop-color="#210605"/><stop offset="0.103" stop-color="#030001"/><stop offset="0.118" stop-color="#000000"/><stop offset="0.143" stop-color="#110203"/><stop offset="0.176" stop-color="#2c0906"/><stop offset="0.217" stop-color="#350c07"/><stop offset="0.244" stop-color="#300b06"/><stop offset="0.273" stop-color="#220605"/><stop offset="0.303" stop-color="#090102"/><stop offset="0.326" stop-color="#000000"/><stop offset="0.343" stop-color="#060101"/><stop offset="0.354" stop-color="#110203"/><stop offset="0.378" stop-color="#390e07"/><stop offset="0.395" stop-color="#501808"/><stop offset="0.481" stop-color="#953310"/><stop offset="0.521" stop-color="#a63812"/><stop offset="0.558" stop-color="#ad3912"/><stop offset="0.611" stop-color="#a93812"/><stop offset="0.621" stop-color="#9c3611"/><stop offset="0.631" stop-color="#822c0d"/><stop offset="0.645" stop-color="#4d1608"/><stop offset="0.661" stop-color="#1f0605"/><stop offset="0.669" stop-color="#070101"/><stop offset="0.676" stop-color="#000000"/><stop offset="0.682" stop-color="#070101"/><stop offset="0.688" stop-color="#1c0505"/><stop offset="0.694" stop-color="#3e1007"/><stop offset="0.701" stop-color="#6c230a"/><stop offset="0.708" stop-color="#9d3611"/><stop offset="0.713" stop-color="#b83913"/><stop offset="0.723" stop-color="#da3c14"/><stop offset="0.731" stop-color="#f34218"/><stop offset="0.737" stop-color="#fd471a"/><stop offset="0.748" stop-color="#ff5321"/><stop offset="0.765" stop-color="#ff7532"/><stop offset="0.779" stop-color="#ff873c"/><stop offset="0.823" stop-color="#ff9d42"/><stop offset="0.874" stop-color="#ffa846"/><stop offset="0.942" stop-color="#ffa948"/><stop offset="1.000" stop-color="#ffa444"/></linearGradient>
<linearGradient id="g69" gradientUnits="userSpaceOnUse" x1="133.1" x2="506.1" y1="0" y2="0"><stop offset="0.000" stop-color="#2a0906"/><stop offset="0.050" stop-color="#270806"/><stop offset="0.066" stop-color="#210605"/><stop offset="0.103" stop-color="#030001"/><stop offset="0.118" stop-color="#010000"/><stop offset="0.146" stop-color="#130304"/><stop offset="0.176" stop-color="#2c0906"/><stop offset="0.217" stop-color="#350c07"/><stop offset="0.245" stop-color="#300a06"/><stop offset="0.273" stop-color="#220605"/><stop offset="0.302" stop-color="#0a0102"/><stop offset="0.326" stop-color="#000000"/><stop offset="0.343" stop-color="#060101"/><stop offset="0.354" stop-color="#110203"/><stop offset="0.377" stop-color="#370d07"/><stop offset="0.394" stop-color="#4f1708"/><stop offset="0.483" stop-color="#953310"/><stop offset="0.525" stop-color="#a73812"/><stop offset="0.562" stop-color="#ac3812"/><stop offset="0.611" stop-color="#a83812"/><stop offset="0.619" stop-color="#9e3611"/><stop offset="0.631" stop-color="#822c0d"/><stop offset="0.645" stop-color="#4d1608"/><stop offset="0.661" stop-color="#1f0605"/><stop offset="0.669" stop-color="#070101"/><stop offset="0.676" stop-color="#000000"/><stop offset="0.682" stop-color="#070101"/><stop offset="0.688" stop-color="#1b0505"/><stop offset="0.694" stop-color="#3d1007"/><stop offset="0.701" stop-color="#6a220a"/><stop offset="0.708" stop-color="#9c3511"/><stop offset="0.713" stop-color="#b73913"/><stop offset="0.723" stop-color="#d93c14"/><stop offset="0.731" stop-color="#f14217"/><stop offset="0.739" stop-color="#fe481b"/><stop offset="0.748" stop-color="#ff5321"/><stop offset="0.767" stop-color="#ff7633"/><stop offset="0.779" stop-color="#ff863c"/><stop offset="0.820" stop-color="#ff9b42"/><stop offset="0.865" stop-color="#ffa645"/><stop offset="0.921" stop-color="#ffaa48"/><stop offset="0.981" stop-color="#ffa545"/><stop offset="1.000" stop-color="#ffa444"/></linearGradient>
<linearGradient id="g70" gradientUnits="userSpaceOnUse" x1="133.1" x2="506.1" y1="0" y2="0"><stop offset="0.000" stop-color="#2a0906"/><stop offset="0.050" stop-color="#260806"/><stop offset="0.066" stop-color="#200605"/><stop offset="0.103" stop-color="#030001"/><stop offset="0.118" stop-color="#010000"/><stop offset="0.147" stop-color="#140304"/><stop offset="0.176" stop-color="#2c0906"/><stop offset="0.217" stop-color="#340c07"/><stop offset="0.245" stop-color="#2f0a06"/><stop offset="0.273" stop-color="#210605"/><stop offset="0.302" stop-color="#0a0102"/><stop offset="0.324" stop-color="#000000"/><stop offset="0.342" stop-color="#050101"/><stop offset="0.353" stop-color="#0f0203"/><stop offset="0.378" stop-color="#390e07"/><stop offset="0.395" stop-color="#501808"/><stop offset="0.483" stop-color="#943310"/><stop offset="0.525" stop-color="#a63812"/><stop offset="0.562" stop-color="#ac3812"/><stop offset="0.611" stop-color="#a73812"/><stop offset="0.619" stop-color="#9e3611"/><stop offset="0.631" stop-color="#812c0d"/><stop offset="0.645" stop-color="#4d1608"/><stop offset="0.661" stop-color="#1f0605"/><stop offset="0.669" stop-color="#080102"/><stop offset="0.676" stop-color="#000000"/><stop offset="0.682" stop-color="#060101"/><stop offset="0.686" stop-color="#140304"/><stop offset="0.693" stop-color="#340c07"/><stop offset="0.700" stop-color="#5f1d09"/><stop offset="0.708" stop-color="#9a3511"/><stop offset="0.713" stop-color="#b53913"/><stop offset="0.723" stop-color="#d83c14"/><stop offset="0.732" stop-color="#f34218"/><stop offset="0.740" stop-color="#fe481b"/><stop offset="0.749" stop-color="#ff5421"/><stop offset="0.767" stop-color="#ff7533"/><stop offset="0.779" stop-color="#ff853c"/><stop offset="0.819" stop-color="#ff9a42"/><stop offset="0.861" stop-color="#ffa545"/><stop offset="0.916" stop-color="#ffaa48"/><stop offset="0.980" stop-color="#ffa545"/><stop offset="1.000" stop-color="#ffa344"/></linearGradient>
<linearGradient id="g71" gradientUnits="userSpaceOnUse" x1="133.1" x2="506.1" y1="0" y2="0"><stop offset="0.000" stop-color="#2a0906"/><stop offset="0.050" stop-color="#260806"/><stop offset="0.066" stop-color="#200605"/><stop offset="0.103" stop-color="#030001"/><stop offset="0.117" stop-color="#000000"/><stop offset="0.139" stop-color="#0e0203"/><stop offset="0.176" stop-color="#2c0906"/><stop offset="0.218" stop-color="#340c07"/><stop offset="0.247" stop-color="#2f0a06"/><stop offset="0.273" stop-color="#210605"/><stop offset="0.302" stop-color="#090102"/><stop offset="0.324" stop-color="#000000"/><stop offset="0.342" stop-color="#060101"/><stop offset="0.353" stop-color="#0f0203"/><stop offset="0.378" stop-color="#390e07"/><stop offset="0.395" stop-color="#501708"/><stop offset="0.484" stop-color="#943310"/><stop offset="0.529" stop-color="#a73812"/><stop offset="0.566" stop-color="#ab3812"/><stop offset="0.613" stop-color="#a63812"/><stop offset="0.622" stop-color="#983410"/><stop offset="0.633" stop-color="#7c2a0d"/><stop offset="0.645" stop-color="#4d1608"/><stop offset="0.661" stop-color="#200605"/><stop offset="0.669" stop-color="#080102"/><stop offset="0.676" stop-color="#000000"/><stop offset="0.682" stop-color="#060101"/><stop offset="0.686" stop-color="#130304"/><stop offset="0.694" stop-color="#3a0e07"/><stop offset="0.701" stop-color="#66210a"/><stop offset="0.708" stop-color="#973410"/><stop offset="0.713" stop-color="#b43913"/><stop offset="0.723" stop-color="#d63c14"/><stop offset="0.732" stop-color="#f24217"/><stop offset="0.740" stop-color="#fe481b"/><stop offset="0.749" stop-color="#ff5321"/><stop offset="0.767" stop-color="#ff7432"/><stop offset="0.780" stop-color="#ff863c"/><stop offset="0.823" stop-color="#ff9b42"/><stop offset="0.870" stop-color="#ffa745"/><stop offset="0.928" stop-color="#ffa948"/><stop offset="0.983" stop-color="#ffa544"/><stop offset="1.000" stop-color="#ffa344"/></linearGradient>
<linearGradient id="g72" gradientUnits="userSpaceOnUse" x1="133.1" x2="506.1" y1="0" y2="0"><stop offset="0.000" stop-color="#2a0806"/><stop offset="0.050" stop-color="#260706"/><stop offset="0.066" stop-color="#1f0605"/><stop offset="0.103" stop-color="#030001"/><stop offset="0.118" stop-color="#010000"/><stop offset="0.150" stop-color="#170404"/><stop offset="0.174" stop-color="#2b0906"/><stop offset="0.217" stop-color="#340c07"/><stop offset="0.245" stop-color="#2f0a06"/><stop offset="0.273" stop-color="#210605"/><stop offset="0.302" stop-color="#090102"/><stop offset="0.324" stop-color="#000000"/><stop offset="0.342" stop-color="#060101"/><stop offset="0.353" stop-color="#0f0203"/><stop offset="0.377" stop-color="#370d07"/><stop offset="0.394" stop-color="#4e1708"/><stop offset="0.484" stop-color="#933310"/><stop offset="0.529" stop-color="#a63812"/><stop offset="0.566" stop-color="#aa3812"/><stop offset="0.613" stop-color="#a53812"/><stop offset="0.622" stop-color="#973410"/><stop offset="0.633" stop-color="#7c2a0d"/><stop offset="0.645" stop-color="#4d1708"/><stop offset="0.661" stop-color="#200605"/><stop offset="0.669" stop-color="#080102"/><stop offset="0.676" stop-color="#000000"/><stop offset="0.682" stop-color="#050101"/><stop offset="0.686" stop-color="#120303"/><stop offset="0.694" stop-color="#390e07"/><stop offset="0.701" stop-color="#642009"/><stop offset="0.708" stop-color="#953310"/><stop offset="0.712" stop-color="#ac3812"/><stop offset="0.720" stop-color="#cc3b13"/><stop offset="0.732" stop-color="#f04117"/><stop offset="0.740" stop-color="#fd471a"/><stop offset="0.749" stop-color="#ff5220"/><stop offset="0.768" stop-color="#ff7533"/><stop offset="0.780" stop-color="#ff853b"/><stop offset="0.820" stop-color="#ff9a42"/><stop offset="0.863" stop-color="#ffa545"/><stop offset="0.918" stop-color="#ffa948"/><stop offset="0.981" stop-color="#ffa544"/><stop offset="1.000" stop-color="#ffa344"/></linearGradient>
<linearGradient id="g73" gradientUnits="userSpaceOnUse" x1="133.1" x2="506.1" y1="0" y2="0"><stop offset="0.000" stop-color="#2a0806"/><stop offset="0.050" stop-color="#260706"/><stop offset="0.066" stop-color="#1f0605"/><stop offset="0.103" stop-color="#020000"/><stop offset="0.117" stop-color="#010000"/><stop offset="0.146" stop-color="#140304"/><stop offset="0.174" stop-color="#2b0906"/><stop offset="0.217" stop-color="#340c07"/><stop offset="0.245" stop-color="#2f0a06"/><stop offset="0.273" stop-color="#200605"/><stop offset="0.302" stop-color="#090102"/><stop offset="0.324" stop-color="#000000"/><stop offset="0.342" stop-color="#060101"/><stop offset="0.353" stop-color="#0f0203"/><stop offset="0.377" stop-color="#370d07"/><stop offset="0.394" stop-color="#4e1708"/><stop offset="0.485" stop-color="#933310"/><stop offset="0.535" stop-color="#a63812"/><stop offset="0.574" stop-color="#a93812"/><stop offset="0.613" stop-color="#a43712"/><stop offset="0.622" stop-color="#973410"/><stop offset="0.633" stop-color="#7c2a0d"/><stop offset="0.645" stop-color="#4d1708"/><stop offset="0.661" stop-color="#210605"/><stop offset="0.670" stop-color="#060101"/><stop offset="0.677" stop-color="#000000"/><stop offset="0.684" stop-color="#080102"/><stop offset="0.690" stop-color="#230706"/><stop offset="0.697" stop-color="#471407"/><stop offset="0.704" stop-color="#75270c"/><stop offset="0.709" stop-color="#9b3511"/><stop offset="0.714" stop-color="#b53913"/><stop offset="0.724" stop-color="#d73c14"/><stop offset="0.733" stop-color="#f14217"/><stop offset="0.741" stop-color="#fe481b"/><stop offset="0.751" stop-color="#ff5321"/><stop offset="0.768" stop-color="#ff7432"/><stop offset="0.780" stop-color="#ff843b"/><stop offset="0.819" stop-color="#ff9842"/><stop offset="0.861" stop-color="#ffa444"/><stop offset="0.916" stop-color="#ffa947"/><stop offset="0.981" stop-color="#ffa544"/><stop offset="1.000" stop-color="#ffa343"/></linearGradient>
<linearGradient id="g74" gradientUnits="userSpaceOnUse" x1="133.1" x2="506.1" y1="0" y2="0"><stop offset="0.000" stop-color="#290806"/><stop offset="0.050" stop-color="#250706"/><stop offset="0.064" stop-color="#1f0605"/><stop offset="0.102" stop-color="#030001"/><stop offset="0.117" stop-color="#010000"/><stop offset="0.149" stop-color="#160404"/><stop offset="0.174" stop-color="#2b0906"/><stop offset="0.217" stop-color="#340c07"/><stop offset="0.247" stop-color="#2e0a06"/><stop offset="0.273" stop-color="#200605"/><stop offset="0.302" stop-color="#090102"/><stop offset="0.324" stop-color="#000000"/><stop offset="0.342" stop-color="#060101"/><stop offset="0.353" stop-color="#100203"/><stop offset="0.375" stop-color="#350c07"/><stop offset="0.394" stop-color="#4d1608"/><stop offset="0.485" stop-color="#923210"/><stop offset="0.535" stop-color="#a53812"/><stop offset="0.572" stop-color="#a83812"/><stop offset="0.613" stop-color="#a33712"/><stop offset="0.622" stop-color="#963410"/><stop offset="0.633" stop-color="#7b2a0c"/><stop offset="0.646" stop-color="#491507"/><stop offset="0.662" stop-color="#1d0505"/><stop offset="0.670" stop-color="#060101"/><stop offset="0.677" stop-color="#000000"/><stop offset="0.684" stop-color="#070101"/><stop offset="0.689" stop-color="#1c0505"/><stop offset="0.696" stop-color="#3d1007"/><stop offset="0.702" stop-color="#68210a"/><stop offset="0.709" stop-color="#983410"/><stop offset="0.714" stop-color="#b33913"/><stop offset="0.724" stop-color="#d53c14"/><stop offset="0.735" stop-color="#f24217"/><stop offset="0.743" stop-color="#fe481b"/><stop offset="0.752" stop-color="#ff5422"/><stop offset="0.769" stop-color="#ff7533"/><stop offset="0.782" stop-color="#ff843b"/><stop offset="0.822" stop-color="#ff9942"/><stop offset="0.865" stop-color="#ffa544"/><stop offset="0.918" stop-color="#ffa947"/><stop offset="0.983" stop-color="#ffa444"/><stop offset="1.000" stop-color="#ffa243"/></linearGradient>
<linearGradient id="g75" gradientUnits="userSpaceOnUse" x1="133.1" x2="506.1" y1="0" y2="0"><stop offset="0.000" stop-color="#290806"/><stop offset="0.050" stop-color="#250706"/><stop offset="0.064" stop-color="#1f0605"/><stop offset="0.102" stop-color="#020000"/><stop offset="0.117" stop-color="#010000"/><stop offset="0.150" stop-color="#180404"/><stop offset="0.173" stop-color="#2a0906"/><stop offset="0.216" stop-color="#330c07"/><stop offset="0.245" stop-color="#2e0a06"/><stop offset="0.272" stop-color="#210605"/><stop offset="0.302" stop-color="#090102"/><stop offset="0.324" stop-color="#000000"/><stop offset="0.342" stop-color="#060101"/><stop offset="0.353" stop-color="#100203"/><stop offset="0.375" stop-color="#350c07"/><stop offset="0.394" stop-color="#4d1608"/><stop offset="0.487" stop-color="#913210"/><stop offset="0.538" stop-color="#a43712"/><stop offset="0.579" stop-color="#a63812"/><stop offset="0.613" stop-color="#a23712"/><stop offset="0.622" stop-color="#953310"/><stop offset="0.634" stop-color="#76280c"/><stop offset="0.646" stop-color="#491507"/><stop offset="0.662" stop-color="#1e0505"/><stop offset="0.670" stop-color="#070101"/><stop offset="0.677" stop-color="#000000"/><stop offset="0.684" stop-color="#060101"/><stop offset="0.689" stop-color="#1a0505"/><stop offset="0.696" stop-color="#3b0f07"/><stop offset="0.704" stop-color="#6f240b"/><stop offset="0.710" stop-color="#9d3611"/><stop offset="0.717" stop-color="#bc3a13"/><stop offset="0.728" stop-color="#df3d15"/><stop offset="0.737" stop-color="#f54318"/><stop offset="0.745" stop-color="#ff4a1c"/><stop offset="0.755" stop-color="#ff5823"/><stop offset="0.771" stop-color="#ff7633"/><stop offset="0.783" stop-color="#ff843b"/><stop offset="0.824" stop-color="#ff9942"/><stop offset="0.870" stop-color="#ffa545"/><stop offset="0.925" stop-color="#ffa947"/><stop offset="0.984" stop-color="#ffa444"/><stop offset="1.000" stop-color="#ffa243"/></linearGradient>
<linearGradient id="g76" gradientUnits="userSpaceOnUse" x1="133.1" x2="506.1" y1="0" y2="0"><stop offset="0.000" stop-color="#290806"/><stop offset="0.050" stop-color="#250706"/><stop offset="0.064" stop-color="#1e0505"/><stop offset="0.102" stop-color="#020000"/><stop offset="0.117" stop-color="#010000"/><stop offset="0.151" stop-color="#1a0405"/><stop offset="0.173" stop-color="#2a0906"/><stop offset="0.216" stop-color="#330b07"/><stop offset="0.245" stop-color="#2d0a06"/><stop offset="0.272" stop-color="#200605"/><stop offset="0.302" stop-color="#090102"/><stop offset="0.323" stop-color="#000000"/><stop offset="0.340" stop-color="#050101"/><stop offset="0.351" stop-color="#0e0203"/><stop offset="0.375" stop-color="#350c07"/><stop offset="0.394" stop-color="#4c1608"/><stop offset="0.488" stop-color="#913210"/><stop offset="0.539" stop-color="#a33712"/><stop offset="0.582" stop-color="#a53812"/><stop offset="0.613" stop-color="#a13711"/><stop offset="0.622" stop-color="#943310"/><stop offset="0.634" stop-color="#76270c"/><stop offset="0.646" stop-color="#491507"/><stop offset="0.662" stop-color="#1f0605"/><stop offset="0.670" stop-color="#070102"/><stop offset="0.677" stop-color="#000000"/><stop offset="0.684" stop-color="#060101"/><stop offset="0.688" stop-color="#130304"/><stop offset="0.696" stop-color="#390e07"/><stop offset="0.704" stop-color="#6b230a"/><stop offset="0.710" stop-color="#9a3511"/><stop offset="0.716" stop-color="#b43913"/><stop offset="0.725" stop-color="#d53c14"/><stop offset="0.736" stop-color="#f14217"/><stop offset="0.745" stop-color="#ff491b"/><stop offset="0.755" stop-color="#ff5623"/><stop offset="0.772" stop-color="#ff7633"/><stop offset="0.784" stop-color="#ff843b"/><stop offset="0.826" stop-color="#ff9942"/><stop offset="0.873" stop-color="#ffa545"/><stop offset="0.928" stop-color="#ffa847"/><stop offset="0.985" stop-color="#ffa344"/><stop offset="1.000" stop-color="#ffa143"/></linearGradient>
<linearGradient id="g77" gradientUnits="userSpaceOnUse" x1="133.1" x2="506.1" y1="0" y2="0"><stop offset="0.000" stop-color="#290806"/><stop offset="0.050" stop-color="#240706"/><stop offset="0.064" stop-color="#1d0505"/><stop offset="0.102" stop-color="#020000"/><stop offset="0.117" stop-color="#010000"/><stop offset="0.153" stop-color="#1b0505"/><stop offset="0.173" stop-color="#2a0906"/><stop offset="0.217" stop-color="#330b07"/><stop offset="0.248" stop-color="#2c0906"/><stop offset="0.272" stop-color="#200605"/><stop offset="0.302" stop-color="#080102"/><stop offset="0.323" stop-color="#000000"/><stop offset="0.340" stop-color="#050101"/><stop offset="0.351" stop-color="#0f0203"/><stop offset="0.374" stop-color="#330b07"/><stop offset="0.393" stop-color="#4b1507"/><stop offset="0.488" stop-color="#8f310f"/><stop offset="0.539" stop-color="#a23712"/><stop offset="0.582" stop-color="#a43712"/><stop offset="0.614" stop-color="#9f3611"/><stop offset="0.623" stop-color="#90320f"/><stop offset="0.634" stop-color="#75270c"/><stop offset="0.646" stop-color="#4a1507"/><stop offset="0.662" stop-color="#1f0605"/><stop offset="0.670" stop-color="#080102"/><stop offset="0.677" stop-color="#000000"/><stop offset="0.684" stop-color="#050101"/><stop offset="0.688" stop-color="#120303"/><stop offset="0.696" stop-color="#370d07"/><stop offset="0.704" stop-color="#68210a"/><stop offset="0.710" stop-color="#963410"/><stop offset="0.716" stop-color="#b13912"/><stop offset="0.725" stop-color="#d23b14"/><stop offset="0.737" stop-color="#f14217"/><stop offset="0.745" stop-color="#fe481b"/><stop offset="0.755" stop-color="#ff5422"/><stop offset="0.773" stop-color="#ff7734"/><stop offset="0.786" stop-color="#ff843b"/><stop offset="0.827" stop-color="#ff9842"/><stop offset="0.875" stop-color="#ffa545"/><stop offset="0.932" stop-color="#ffa846"/><stop offset="0.987" stop-color="#ffa344"/><stop offset="1.000" stop-color="#ffa143"/></linearGradient>
<linearGradient id="g78" gradientUnits="userSpaceOnUse" x1="133.1" x2="506.1" y1="0" y2="0"><stop offset="0.000" stop-color="#280806"/><stop offset="0.050" stop-color="#240706"/><stop offset="0.066" stop-color="#1b0505"/><stop offset="0.102" stop-color="#010000"/><stop offset="0.117" stop-color="#010000"/><stop offset="0.153" stop-color="#1c0505"/><stop offset="0.173" stop-color="#2a0906"/><stop offset="0.217" stop-color="#320b07"/><stop offset="0.248" stop-color="#2b0906"/><stop offset="0.272" stop-color="#1f0605"/><stop offset="0.300" stop-color="#090102"/><stop offset="0.323" stop-color="#000000"/><stop offset="0.340" stop-color="#060101"/><stop offset="0.351" stop-color="#0f0203"/><stop offset="0.374" stop-color="#330b07"/><stop offset="0.393" stop-color="#4a1507"/><stop offset="0.489" stop-color="#8e310f"/><stop offset="0.542" stop-color="#a13711"/><stop offset="0.590" stop-color="#a23712"/><stop offset="0.614" stop-color="#9d3611"/><stop offset="0.623" stop-color="#8f310f"/><stop offset="0.634" stop-color="#75270c"/><stop offset="0.646" stop-color="#4a1507"/><stop offset="0.662" stop-color="#200605"/><stop offset="0.672" stop-color="#060101"/><stop offset="0.678" stop-color="#000000"/><stop offset="0.685" stop-color="#070102"/><stop offset="0.693" stop-color="#270806"/><stop offset="0.701" stop-color="#531908"/><stop offset="0.712" stop-color="#9a3511"/><stop offset="0.718" stop-color="#b93a13"/><stop offset="0.728" stop-color="#d73c14"/><stop offset="0.740" stop-color="#f44318"/><stop offset="0.748" stop-color="#ff491c"/><stop offset="0.759" stop-color="#ff5a25"/><stop offset="0.775" stop-color="#ff7734"/><stop offset="0.788" stop-color="#ff843b"/><stop offset="0.831" stop-color="#ff9942"/><stop offset="0.883" stop-color="#ffa645"/><stop offset="0.950" stop-color="#ffa746"/><stop offset="1.000" stop-color="#ffa043"/></linearGradient>
<linearGradient id="g79" gradientUnits="userSpaceOnUse" x1="133.1" x2="506.1" y1="0" y2="0"><stop offset="0.000" stop-color="#280806"/><stop offset="0.050" stop-color="#240706"/><stop offset="0.066" stop-color="#1b0505"/><stop offset="0.102" stop-color="#010000"/><stop offset="0.117" stop-color="#020000"/><stop offset="0.154" stop-color="#1d0505"/><stop offset="0.173" stop-color="#2a0906"/><stop offset="0.217" stop-color="#320b07"/><stop offset="0.249" stop-color="#2a0906"/><stop offset="0.272" stop-color="#1f0605"/><stop offset="0.300" stop-color="#090102"/><stop offset="0.323" stop-color="#000000"/><stop offset="0.340" stop-color="#060101"/><stop offset="0.351" stop-color="#0f0203"/><stop offset="0.373" stop-color="#310b07"/><stop offset="0.393" stop-color="#4a1507"/><stop offset="0.489" stop-color="#8d310f"/><stop offset="0.542" stop-color="#a03611"/><stop offset="0.590" stop-color="#a03711"/><stop offset="0.614" stop-color="#9c3511"/><stop offset="0.623" stop-color="#8e310f"/><stop offset="0.635" stop-color="#6f250b"/><stop offset="0.647" stop-color="#461307"/><stop offset="0.665" stop-color="#190404"/><stop offset="0.672" stop-color="#060101"/><stop offset="0.678" stop-color="#000000"/><stop offset="0.685" stop-color="#060101"/><stop offset="0.690" stop-color="#1a0505"/><stop offset="0.697" stop-color="#390e07"/><stop offset="0.705" stop-color="#69220a"/><stop offset="0.712" stop-color="#963410"/><stop offset="0.717" stop-color="#b03912"/><stop offset="0.727" stop-color="#d13b14"/><stop offset="0.740" stop-color="#f14217"/><stop offset="0.748" stop-color="#fe481b"/><stop offset="0.759" stop-color="#ff5824"/><stop offset="0.776" stop-color="#ff7734"/><stop offset="0.791" stop-color="#ff853b"/><stop offset="0.835" stop-color="#ff9a42"/><stop offset="0.889" stop-color="#ffa645"/><stop offset="0.969" stop-color="#ffa545"/><stop offset="1.000" stop-color="#ffa043"/></linearGradient>
<linearGradient id="g80" gradientUnits="userSpaceOnUse" x1="133.1" x2="506.1" y1="0" y2="0"><stop offset="0.000" stop-color="#280806"/><stop offset="0.050" stop-color="#230706"/><stop offset="0.067" stop-color="#190404"/><stop offset="0.102" stop-color="#010000"/><stop offset="0.117" stop-color="#020000"/><stop offset="0.154" stop-color="#1e0505"/><stop offset="0.173" stop-color="#2a0906"/><stop offset="0.217" stop-color="#310b07"/><stop offset="0.251" stop-color="#290806"/><stop offset="0.273" stop-color="#1d0505"/><stop offset="0.300" stop-color="#080102"/><stop offset="0.322" stop-color="#000000"/><stop offset="0.338" stop-color="#040001"/><stop offset="0.350" stop-color="#0e0203"/><stop offset="0.373" stop-color="#310b07"/><stop offset="0.393" stop-color="#491507"/><stop offset="0.491" stop-color="#8c300f"/><stop offset="0.543" stop-color="#9e3611"/><stop offset="0.595" stop-color="#9e3611"/><stop offset="0.614" stop-color="#9a3511"/><stop offset="0.623" stop-color="#8d310f"/><stop offset="0.635" stop-color="#6f240b"/><stop offset="0.647" stop-color="#461307"/><stop offset="0.665" stop-color="#1a0405"/><stop offset="0.672" stop-color="#070101"/><stop offset="0.678" stop-color="#000000"/><stop offset="0.685" stop-color="#060101"/><stop offset="0.690" stop-color="#180404"/><stop offset="0.697" stop-color="#360d07"/><stop offset="0.705" stop-color="#652009"/><stop offset="0.713" stop-color="#9a3511"/><stop offset="0.720" stop-color="#b83913"/><stop offset="0.729" stop-color="#d53c14"/><stop offset="0.744" stop-color="#f64318"/><stop offset="0.751" stop-color="#ff4a1c"/><stop offset="0.763" stop-color="#ff5e27"/><stop offset="0.779" stop-color="#ff7935"/><stop offset="0.798" stop-color="#ff873c"/><stop offset="0.849" stop-color="#ff9d42"/><stop offset="0.902" stop-color="#ffa745"/><stop offset="0.983" stop-color="#ffa344"/><stop offset="1.000" stop-color="#ff9f43"/></linearGradient>
<linearGradient id="g81" gradientUnits="userSpaceOnUse" x1="133.1" x2="506.1" y1="0" y2="0"><stop offset="0.000" stop-color="#280806"/><stop offset="0.050" stop-color="#230706"/><stop offset="0.068" stop-color="#160404"/><stop offset="0.101" stop-color="#010000"/><stop offset="0.115" stop-color="#020000"/><stop offset="0.153" stop-color="#1d0505"/><stop offset="0.173" stop-color="#2a0906"/><stop offset="0.217" stop-color="#310b07"/><stop offset="0.251" stop-color="#290806"/><stop offset="0.273" stop-color="#1d0505"/><stop offset="0.300" stop-color="#080102"/><stop offset="0.322" stop-color="#000000"/><stop offset="0.338" stop-color="#040001"/><stop offset="0.350" stop-color="#0e0203"/><stop offset="0.371" stop-color="#2f0a06"/><stop offset="0.393" stop-color="#481407"/><stop offset="0.492" stop-color="#8a300f"/><stop offset="0.544" stop-color="#9c3611"/><stop offset="0.599" stop-color="#9c3511"/><stop offset="0.615" stop-color="#973410"/><stop offset="0.625" stop-color="#882f0e"/><stop offset="0.635" stop-color="#6e240b"/><stop offset="0.647" stop-color="#461407"/><stop offset="0.665" stop-color="#1b0505"/><stop offset="0.673" stop-color="#050101"/><stop offset="0.680" stop-color="#000000"/><stop offset="0.685" stop-color="#050101"/><stop offset="0.689" stop-color="#110303"/><stop offset="0.697" stop-color="#340c07"/><stop offset="0.706" stop-color="#6a220a"/><stop offset="0.713" stop-color="#953410"/><stop offset="0.718" stop-color="#af3912"/><stop offset="0.728" stop-color="#cf3b13"/><stop offset="0.745" stop-color="#f64318"/><stop offset="0.752" stop-color="#ff4a1c"/><stop offset="0.765" stop-color="#ff6128"/><stop offset="0.780" stop-color="#ff7935"/><stop offset="0.802" stop-color="#ff883d"/><stop offset="0.851" stop-color="#ff9d42"/><stop offset="0.902" stop-color="#ffa645"/><stop offset="0.983" stop-color="#ffa343"/><stop offset="1.000" stop-color="#ff9f43"/></linearGradient>
<linearGradient id="g82" gradientUnits="userSpaceOnUse" x1="133.1" x2="506.1" y1="0" y2="0"><stop offset="0.000" stop-color="#270806"/><stop offset="0.050" stop-color="#220706"/><stop offset="0.101" stop-color="#000000"/><stop offset="0.115" stop-color="#020000"/><stop offset="0.155" stop-color="#200605"/><stop offset="0.174" stop-color="#2a0906"/><stop offset="0.217" stop-color="#310b06"/><stop offset="0.252" stop-color="#280806"/><stop offset="0.273" stop-color="#1c0505"/><stop offset="0.300" stop-color="#080102"/><stop offset="0.322" stop-color="#000000"/><stop offset="0.338" stop-color="#050001"/><stop offset="0.350" stop-color="#0f0203"/><stop offset="0.371" stop-color="#2f0a06"/><stop offset="0.393" stop-color="#481407"/><stop offset="0.493" stop-color="#892f0f"/><stop offset="0.546" stop-color="#9b3511"/><stop offset="0.602" stop-color="#993511"/><stop offset="0.615" stop-color="#963410"/><stop offset="0.625" stop-color="#872e0e"/><stop offset="0.637" stop-color="#69220a"/><stop offset="0.649" stop-color="#431207"/><stop offset="0.668" stop-color="#140304"/><stop offset="0.673" stop-color="#060101"/><stop offset="0.680" stop-color="#000000"/><stop offset="0.685" stop-color="#040001"/><stop offset="0.689" stop-color="#0f0203"/><stop offset="0.698" stop-color="#380d07"/><stop offset="0.706" stop-color="#652009"/><stop offset="0.714" stop-color="#983411"/><stop offset="0.721" stop-color="#b63913"/><stop offset="0.731" stop-color="#d33b14"/><stop offset="0.749" stop-color="#fb4619"/><stop offset="0.755" stop-color="#ff4b1d"/><stop offset="0.779" stop-color="#ff7533"/><stop offset="0.795" stop-color="#ff833a"/><stop offset="0.838" stop-color="#ff9741"/><stop offset="0.891" stop-color="#ffa544"/><stop offset="0.971" stop-color="#ffa444"/><stop offset="1.000" stop-color="#ff9e42"/></linearGradient>
<linearGradient id="g83" gradientUnits="userSpaceOnUse" x1="133.1" x2="506.1" y1="0" y2="0"><stop offset="0.000" stop-color="#270806"/><stop offset="0.050" stop-color="#220605"/><stop offset="0.099" stop-color="#010000"/><stop offset="0.114" stop-color="#020000"/><stop offset="0.154" stop-color="#1f0605"/><stop offset="0.173" stop-color="#2a0806"/><stop offset="0.217" stop-color="#300a06"/><stop offset="0.253" stop-color="#270806"/><stop offset="0.275" stop-color="#1b0505"/><stop offset="0.300" stop-color="#070102"/><stop offset="0.320" stop-color="#000000"/><stop offset="0.336" stop-color="#040001"/><stop offset="0.350" stop-color="#0f0203"/><stop offset="0.370" stop-color="#2d0906"/><stop offset="0.391" stop-color="#461307"/><stop offset="0.493" stop-color="#872f0e"/><stop offset="0.546" stop-color="#993511"/><stop offset="0.602" stop-color="#973410"/><stop offset="0.615" stop-color="#943310"/><stop offset="0.625" stop-color="#862e0e"/><stop offset="0.637" stop-color="#69220a"/><stop offset="0.649" stop-color="#431207"/><stop offset="0.668" stop-color="#150304"/><stop offset="0.674" stop-color="#040001"/><stop offset="0.681" stop-color="#000000"/><stop offset="0.686" stop-color="#060101"/><stop offset="0.692" stop-color="#180404"/><stop offset="0.700" stop-color="#3c0f07"/><stop offset="0.708" stop-color="#69220a"/><stop offset="0.716" stop-color="#9a3511"/><stop offset="0.723" stop-color="#b73913"/><stop offset="0.732" stop-color="#d33b14"/><stop offset="0.751" stop-color="#fa4519"/><stop offset="0.756" stop-color="#ff4b1d"/><stop offset="0.780" stop-color="#ff7533"/><stop offset="0.798" stop-color="#ff833a"/><stop offset="0.840" stop-color="#ff9741"/><stop offset="0.894" stop-color="#ffa444"/><stop offset="0.976" stop-color="#ffa344"/><stop offset="1.000" stop-color="#ff9d42"/></linearGradient>
<linearGradient id="g84" gradientUnits="userSpaceOnUse" x1="133.1" x2="506.1" y1="0" y2="0"><stop offset="0.000" stop-color="#270806"/><stop offset="0.050" stop-color="#210605"/><stop offset="0.098" stop-color="#010000"/><stop offset="0.113" stop-color="#020000"/><stop offset="0.155" stop-color="#210605"/><stop offset="0.174" stop-color="#2a0906"/><stop offset="0.217" stop-color="#300a06"/><stop offset="0.255" stop-color="#260706"/><stop offset="0.276" stop-color="#190404"/><stop offset="0.300" stop-color="#070101"/><stop offset="0.320" stop-color="#000000"/><stop offset="0.336" stop-color="#040001"/><stop offset="0.349" stop-color="#0e0203"/><stop offset="0.370" stop-color="#2d0906"/><stop offset="0.391" stop-color="#451307"/><stop offset="0.495" stop-color="#862e0e"/><stop offset="0.547" stop-color="#973410"/><stop offset="0.605" stop-color="#953310"/><stop offset="0.617" stop-color="#913210"/><stop offset="0.627" stop-color="#7f2b0d"/><stop offset="0.637" stop-color="#68210a"/><stop offset="0.650" stop-color="#401107"/><stop offset="0.668" stop-color="#160404"/><stop offset="0.674" stop-color="#050101"/><stop offset="0.681" stop-color="#000000"/><stop offset="0.686" stop-color="#050001"/><stop offset="0.690" stop-color="#110203"/><stop offset="0.700" stop-color="#390e07"/><stop offset="0.708" stop-color="#642009"/><stop offset="0.716" stop-color="#963410"/><stop offset="0.723" stop-color="#b33913"/><stop offset="0.732" stop-color="#d03b14"/><stop offset="0.751" stop-color="#f74419"/><stop offset="0.756" stop-color="#ff4a1c"/><stop offset="0.782" stop-color="#ff7432"/><stop offset="0.802" stop-color="#ff833a"/><stop offset="0.845" stop-color="#ff9741"/><stop offset="0.898" stop-color="#ffa444"/><stop offset="0.980" stop-color="#ffa243"/><stop offset="1.000" stop-color="#ff9d42"/></linearGradient>
<linearGradient id="g85" gradientUnits="userSpaceOnUse" x1="133.1" x2="506.1" y1="0" y2="0"><stop offset="0.000" stop-color="#260806"/><stop offset="0.048" stop-color="#210605"/><stop offset="0.097" stop-color="#010000"/><stop offset="0.113" stop-color="#020000"/><stop offset="0.168" stop-color="#280806"/><stop offset="0.214" stop-color="#2f0a06"/><stop offset="0.251" stop-color="#270806"/><stop offset="0.272" stop-color="#1c0505"/><stop offset="0.299" stop-color="#080102"/><stop offset="0.320" stop-color="#000000"/><stop offset="0.336" stop-color="#040001"/><stop offset="0.349" stop-color="#0e0203"/><stop offset="0.369" stop-color="#2b0906"/><stop offset="0.391" stop-color="#451307"/><stop offset="0.496" stop-color="#842d0e"/><stop offset="0.547" stop-color="#943310"/><stop offset="0.605" stop-color="#933310"/><stop offset="0.617" stop-color="#8f310f"/><stop offset="0.627" stop-color="#7d2a0d"/><stop offset="0.638" stop-color="#631f09"/><stop offset="0.650" stop-color="#401107"/><stop offset="0.668" stop-color="#170404"/><stop offset="0.674" stop-color="#060101"/><stop offset="0.681" stop-color="#000000"/><stop offset="0.686" stop-color="#040001"/><stop offset="0.690" stop-color="#0f0203"/><stop offset="0.700" stop-color="#360c07"/><stop offset="0.709" stop-color="#67210a"/><stop offset="0.717" stop-color="#973410"/><stop offset="0.724" stop-color="#b43913"/><stop offset="0.733" stop-color="#d03b13"/><stop offset="0.752" stop-color="#f74418"/><stop offset="0.757" stop-color="#ff4a1c"/><stop offset="0.783" stop-color="#ff7432"/><stop offset="0.806" stop-color="#ff843b"/><stop offset="0.849" stop-color="#ff9741"/><stop offset="0.902" stop-color="#ffa444"/><stop offset="0.983" stop-color="#ffa143"/><stop offset="1.000" stop-color="#ff9c42"/></linearGradient>
<linearGradient id="g86" gradientUnits="userSpaceOnUse" x1="133.1" x2="506.1" y1="0" y2="0"><stop offset="0.000" stop-color="#260706"/><stop offset="0.048" stop-color="#200605"/><stop offset="0.097" stop-color="#000000"/><stop offset="0.111" stop-color="#020000"/><stop offset="0.166" stop-color="#270806"/><stop offset="0.213" stop-color="#2f0a06"/><stop offset="0.249" stop-color="#270806"/><stop offset="0.272" stop-color="#1b0505"/><stop offset="0.299" stop-color="#070101"/><stop offset="0.319" stop-color="#000000"/><stop offset="0.335" stop-color="#040001"/><stop offset="0.349" stop-color="#0f0203"/><stop offset="0.367" stop-color="#2a0806"/><stop offset="0.390" stop-color="#431207"/><stop offset="0.496" stop-color="#822c0d"/><stop offset="0.548" stop-color="#923310"/><stop offset="0.609" stop-color="#90320f"/><stop offset="0.618" stop-color="#8b300f"/><stop offset="0.630" stop-color="#76270c"/><stop offset="0.639" stop-color="#5f1d09"/><stop offset="0.651" stop-color="#3d0f07"/><stop offset="0.669" stop-color="#140304"/><stop offset="0.676" stop-color="#040001"/><stop offset="0.681" stop-color="#000000"/><stop offset="0.686" stop-color="#030001"/><stop offset="0.690" stop-color="#0d0203"/><stop offset="0.700" stop-color="#320b07"/><stop offset="0.709" stop-color="#621f09"/><stop offset="0.718" stop-color="#993511"/><stop offset="0.725" stop-color="#b43913"/><stop offset="0.735" stop-color="#cf3b13"/><stop offset="0.752" stop-color="#f34218"/><stop offset="0.757" stop-color="#fe481b"/><stop offset="0.773" stop-color="#ff6229"/><stop offset="0.786" stop-color="#ff7532"/><stop offset="0.824" stop-color="#ff8c3f"/><stop offset="0.879" stop-color="#ff9f43"/><stop offset="0.922" stop-color="#ffa444"/><stop offset="0.988" stop-color="#ff9f43"/><stop offset="1.000" stop-color="#ff9b42"/></linearGradient>
<linearGradient id="g87" gradientUnits="userSpaceOnUse" x1="133.1" x2="506.1" y1="0" y2="0"><stop offset="0.000" stop-color="#260706"/><stop offset="0.047" stop-color="#200605"/><stop offset="0.095" stop-color="#000000"/><stop offset="0.111" stop-color="#020001"/><stop offset="0.165" stop-color="#270806"/><stop offset="0.212" stop-color="#2e0a06"/><stop offset="0.248" stop-color="#260806"/><stop offset="0.271" stop-color="#1b0505"/><stop offset="0.299" stop-color="#070101"/><stop offset="0.319" stop-color="#000000"/><stop offset="0.335" stop-color="#040001"/><stop offset="0.347" stop-color="#0d0203"/><stop offset="0.367" stop-color="#2a0806"/><stop offset="0.390" stop-color="#421207"/><stop offset="0.497" stop-color="#802c0d"/><stop offset="0.548" stop-color="#90320f"/><stop offset="0.609" stop-color="#8d310f"/><stop offset="0.618" stop-color="#892f0f"/><stop offset="0.630" stop-color="#74270b"/><stop offset="0.639" stop-color="#5e1d09"/><stop offset="0.653" stop-color="#3a0e07"/><stop offset="0.669" stop-color="#160304"/><stop offset="0.676" stop-color="#050101"/><stop offset="0.682" stop-color="#000000"/><stop offset="0.688" stop-color="#040001"/><stop offset="0.692" stop-color="#100203"/><stop offset="0.701" stop-color="#350c07"/><stop offset="0.710" stop-color="#652009"/><stop offset="0.718" stop-color="#933310"/><stop offset="0.725" stop-color="#b03912"/><stop offset="0.735" stop-color="#cc3b13"/><stop offset="0.752" stop-color="#ef4117"/><stop offset="0.759" stop-color="#fe481b"/><stop offset="0.775" stop-color="#ff6128"/><stop offset="0.786" stop-color="#ff7231"/><stop offset="0.818" stop-color="#ff873c"/><stop offset="0.866" stop-color="#ff9a42"/><stop offset="0.912" stop-color="#ffa344"/><stop offset="0.987" stop-color="#ff9f43"/><stop offset="1.000" stop-color="#ff9a42"/></linearGradient>
<linearGradient id="g88" gradientUnits="userSpaceOnUse" x1="133.1" x2="506.1" y1="0" y2="0"><stop offset="0.000" stop-color="#250706"/><stop offset="0.047" stop-color="#1f0605"/><stop offset="0.094" stop-color="#000000"/><stop offset="0.110" stop-color="#020000"/><stop offset="0.164" stop-color="#260806"/><stop offset="0.212" stop-color="#2d0a06"/><stop offset="0.249" stop-color="#250706"/><stop offset="0.272" stop-color="#1a0405"/><stop offset="0.299" stop-color="#070101"/><stop offset="0.319" stop-color="#000000"/><stop offset="0.335" stop-color="#040001"/><stop offset="0.347" stop-color="#0e0203"/><stop offset="0.366" stop-color="#280806"/><stop offset="0.390" stop-color="#421207"/><stop offset="0.499" stop-color="#7e2b0d"/><stop offset="0.550" stop-color="#8d310f"/><stop offset="0.611" stop-color="#8b300f"/><stop offset="0.619" stop-color="#862e0e"/><stop offset="0.633" stop-color="#6d240b"/><stop offset="0.643" stop-color="#521808"/><stop offset="0.657" stop-color="#320b07"/><stop offset="0.669" stop-color="#170404"/><stop offset="0.676" stop-color="#060101"/><stop offset="0.682" stop-color="#000000"/><stop offset="0.688" stop-color="#040001"/><stop offset="0.692" stop-color="#0e0203"/><stop offset="0.702" stop-color="#380e07"/><stop offset="0.712" stop-color="#67210a"/><stop offset="0.720" stop-color="#943310"/><stop offset="0.727" stop-color="#b03912"/><stop offset="0.736" stop-color="#cb3b13"/><stop offset="0.752" stop-color="#ea4016"/><stop offset="0.760" stop-color="#fd471a"/><stop offset="0.776" stop-color="#ff6128"/><stop offset="0.787" stop-color="#ff7131"/><stop offset="0.826" stop-color="#ff893d"/><stop offset="0.881" stop-color="#ff9d42"/><stop offset="0.922" stop-color="#ffa243"/><stop offset="0.989" stop-color="#ff9d42"/><stop offset="1.000" stop-color="#ff9a42"/></linearGradient>
<linearGradient id="g89" gradientUnits="userSpaceOnUse" x1="133.1" x2="506.1" y1="0" y2="0"><stop offset="0.000" stop-color="#250706"/><stop offset="0.046" stop-color="#1f0605"/><stop offset="0.092" stop-color="#000000"/><stop offset="0.109" stop-color="#020000"/><stop offset="0.162" stop-color="#260706"/><stop offset="0.210" stop-color="#2d0906"/><stop offset="0.248" stop-color="#250706"/><stop offset="0.271" stop-color="#1a0405"/><stop offset="0.298" stop-color="#070101"/><stop offset="0.318" stop-color="#000000"/><stop offset="0.334" stop-color="#040001"/><stop offset="0.347" stop-color="#0e0203"/><stop offset="0.366" stop-color="#280806"/><stop offset="0.390" stop-color="#411107"/><stop offset="0.500" stop-color="#7c2a0d"/><stop offset="0.550" stop-color="#8b300f"/><stop offset="0.611" stop-color="#882f0e"/><stop offset="0.621" stop-color="#822c0d"/><stop offset="0.637" stop-color="#642009"/><stop offset="0.654" stop-color="#370d07"/><stop offset="0.670" stop-color="#140304"/><stop offset="0.677" stop-color="#040001"/><stop offset="0.682" stop-color="#000000"/><stop offset="0.688" stop-color="#030001"/><stop offset="0.692" stop-color="#0c0202"/><stop offset="0.702" stop-color="#350c07"/><stop offset="0.712" stop-color="#621f09"/><stop offset="0.721" stop-color="#953310"/><stop offset="0.728" stop-color="#b03912"/><stop offset="0.737" stop-color="#ca3b13"/><stop offset="0.753" stop-color="#e93f16"/><stop offset="0.761" stop-color="#fd471a"/><stop offset="0.769" stop-color="#ff5220"/><stop offset="0.787" stop-color="#ff6f2f"/><stop offset="0.818" stop-color="#ff833a"/><stop offset="0.862" stop-color="#ff9641"/><stop offset="0.912" stop-color="#ffa143"/><stop offset="0.987" stop-color="#ff9d42"/><stop offset="1.000" stop-color="#ff9942"/></linearGradient>
<linearGradient id="g90" gradientUnits="userSpaceOnUse" x1="133.1" x2="506.1" y1="0" y2="0"><stop offset="0.000" stop-color="#240706"/><stop offset="0.044" stop-color="#1f0605"/><stop offset="0.091" stop-color="#000000"/><stop offset="0.107" stop-color="#020000"/><stop offset="0.161" stop-color="#250706"/><stop offset="0.209" stop-color="#2c0906"/><stop offset="0.247" stop-color="#250706"/><stop offset="0.269" stop-color="#1a0505"/><stop offset="0.298" stop-color="#070101"/><stop offset="0.318" stop-color="#000000"/><stop offset="0.332" stop-color="#030001"/><stop offset="0.346" stop-color="#0d0203"/><stop offset="0.365" stop-color="#270806"/><stop offset="0.390" stop-color="#401107"/><stop offset="0.500" stop-color="#79290c"/><stop offset="0.551" stop-color="#882f0e"/><stop offset="0.614" stop-color="#852e0e"/><stop offset="0.623" stop-color="#7c2a0d"/><stop offset="0.639" stop-color="#5c1d08"/><stop offset="0.654" stop-color="#380d07"/><stop offset="0.670" stop-color="#160404"/><stop offset="0.677" stop-color="#050101"/><stop offset="0.684" stop-color="#000000"/><stop offset="0.689" stop-color="#040001"/><stop offset="0.693" stop-color="#0e0203"/><stop offset="0.704" stop-color="#370d07"/><stop offset="0.713" stop-color="#642009"/><stop offset="0.723" stop-color="#953410"/><stop offset="0.729" stop-color="#b03912"/><stop offset="0.739" stop-color="#c93b13"/><stop offset="0.753" stop-color="#e43e15"/><stop offset="0.763" stop-color="#fc461a"/><stop offset="0.768" stop-color="#ff4d1e"/><stop offset="0.788" stop-color="#ff6e2f"/><stop offset="0.823" stop-color="#ff843b"/><stop offset="0.867" stop-color="#ff9641"/><stop offset="0.914" stop-color="#ffa043"/><stop offset="0.989" stop-color="#ff9c42"/><stop offset="1.000" stop-color="#ff9842"/></linearGradient>
<linearGradient id="g91" gradientUnits="userSpaceOnUse" x1="133.1" x2="506.1" y1="0" y2="0"><stop offset="0.000" stop-color="#240706"/><stop offset="0.044" stop-color="#1e0505"/><stop offset="0.090" stop-color="#000000"/><stop offset="0.106" stop-color="#020000"/><stop offset="0.160" stop-color="#250706"/><stop offset="0.209" stop-color="#2c0906"/><stop offset="0.249" stop-color="#230706"/><stop offset="0.272" stop-color="#170404"/><stop offset="0.298" stop-color="#060101"/><stop offset="0.316" stop-color="#000000"/><stop offset="0.332" stop-color="#030001"/><stop offset="0.346" stop-color="#0e0203"/><stop offset="0.363" stop-color="#250706"/><stop offset="0.389" stop-color="#3e1007"/><stop offset="0.501" stop-color="#77280c"/><stop offset="0.551" stop-color="#852e0e"/><stop offset="0.614" stop-color="#822d0d"/><stop offset="0.623" stop-color="#7a290c"/><stop offset="0.641" stop-color="#581b08"/><stop offset="0.655" stop-color="#350c07"/><stop offset="0.670" stop-color="#170404"/><stop offset="0.677" stop-color="#060101"/><stop offset="0.684" stop-color="#000000"/><stop offset="0.689" stop-color="#030001"/><stop offset="0.693" stop-color="#0c0202"/><stop offset="0.704" stop-color="#340c07"/><stop offset="0.714" stop-color="#652009"/><stop offset="0.724" stop-color="#963410"/><stop offset="0.731" stop-color="#af3912"/><stop offset="0.740" stop-color="#c83a13"/><stop offset="0.755" stop-color="#e23e15"/><stop offset="0.765" stop-color="#fd471b"/><stop offset="0.782" stop-color="#ff6028"/><stop offset="0.792" stop-color="#ff6f2f"/><stop offset="0.846" stop-color="#ff8d3f"/><stop offset="0.909" stop-color="#ff9e43"/><stop offset="0.980" stop-color="#ff9c42"/><stop offset="1.000" stop-color="#ff9842"/></linearGradient>
<linearGradient id="g92" gradientUnits="userSpaceOnUse" x1="133.1" x2="506.1" y1="0" y2="0"><stop offset="0.000" stop-color="#230706"/><stop offset="0.043" stop-color="#1d0505"/><stop offset="0.088" stop-color="#000000"/><stop offset="0.105" stop-color="#020000"/><stop offset="0.158" stop-color="#240706"/><stop offset="0.208" stop-color="#2b0906"/><stop offset="0.249" stop-color="#230706"/><stop offset="0.272" stop-color="#170404"/><stop offset="0.298" stop-color="#060101"/><stop offset="0.316" stop-color="#000000"/><stop offset="0.332" stop-color="#040001"/><stop offset="0.346" stop-color="#0e0203"/><stop offset="0.363" stop-color="#250706"/><stop offset="0.389" stop-color="#3e1007"/><stop offset="0.501" stop-color="#75270c"/><stop offset="0.552" stop-color="#832d0e"/><stop offset="0.615" stop-color="#7f2b0d"/><stop offset="0.625" stop-color="#76270c"/><stop offset="0.641" stop-color="#581b08"/><stop offset="0.657" stop-color="#330b07"/><stop offset="0.672" stop-color="#150304"/><stop offset="0.678" stop-color="#050001"/><stop offset="0.684" stop-color="#000000"/><stop offset="0.690" stop-color="#040001"/><stop offset="0.694" stop-color="#0f0203"/><stop offset="0.705" stop-color="#360d07"/><stop offset="0.716" stop-color="#66210a"/><stop offset="0.727" stop-color="#9b3511"/><stop offset="0.735" stop-color="#b63913"/><stop offset="0.744" stop-color="#cb3b13"/><stop offset="0.756" stop-color="#e03d15"/><stop offset="0.767" stop-color="#fd471a"/><stop offset="0.773" stop-color="#ff4f1f"/><stop offset="0.792" stop-color="#ff6c2e"/><stop offset="0.845" stop-color="#ff8a3e"/><stop offset="0.909" stop-color="#ff9d42"/><stop offset="0.975" stop-color="#ff9c42"/><stop offset="1.000" stop-color="#ff9741"/></linearGradient>
<linearGradient id="g93" gradientUnits="userSpaceOnUse" x1="133.1" x2="506.1" y1="0" y2="0"><stop offset="0.000" stop-color="#230706"/><stop offset="0.042" stop-color="#1d0505"/><stop offset="0.087" stop-color="#000000"/><stop offset="0.105" stop-color="#020001"/><stop offset="0.157" stop-color="#240706"/><stop offset="0.208" stop-color="#2b0906"/><stop offset="0.252" stop-color="#210605"/><stop offset="0.275" stop-color="#140304"/><stop offset="0.300" stop-color="#040001"/><stop offset="0.318" stop-color="#000000"/><stop offset="0.334" stop-color="#050001"/><stop offset="0.346" stop-color="#0f0203"/><stop offset="0.362" stop-color="#240706"/><stop offset="0.389" stop-color="#3d1007"/><stop offset="0.503" stop-color="#72260b"/><stop offset="0.552" stop-color="#802b0d"/><stop offset="0.615" stop-color="#7c2a0d"/><stop offset="0.625" stop-color="#73260b"/><stop offset="0.642" stop-color="#541908"/><stop offset="0.658" stop-color="#300b06"/><stop offset="0.672" stop-color="#160404"/><stop offset="0.678" stop-color="#060101"/><stop offset="0.685" stop-color="#000000"/><stop offset="0.690" stop-color="#030001"/><stop offset="0.694" stop-color="#0c0202"/><stop offset="0.706" stop-color="#380d07"/><stop offset="0.717" stop-color="#67210a"/><stop offset="0.728" stop-color="#9b3511"/><stop offset="0.736" stop-color="#b53913"/><stop offset="0.745" stop-color="#c93b13"/><stop offset="0.757" stop-color="#de3d15"/><stop offset="0.768" stop-color="#fc461a"/><stop offset="0.773" stop-color="#ff4c1d"/><stop offset="0.794" stop-color="#ff6b2d"/><stop offset="0.847" stop-color="#ff893d"/><stop offset="0.912" stop-color="#ff9c42"/><stop offset="0.979" stop-color="#ff9a42"/><stop offset="1.000" stop-color="#ff9641"/></linearGradient>
<linearGradient id="g94" gradientUnits="userSpaceOnUse" x1="133.1" x2="506.1" y1="0" y2="0"><stop offset="0.000" stop-color="#220706"/><stop offset="0.040" stop-color="#1d0505"/><stop offset="0.086" stop-color="#000000"/><stop offset="0.103" stop-color="#020001"/><stop offset="0.155" stop-color="#230706"/><stop offset="0.206" stop-color="#2a0906"/><stop offset="0.252" stop-color="#210605"/><stop offset="0.276" stop-color="#120303"/><stop offset="0.304" stop-color="#020000"/><stop offset="0.324" stop-color="#010000"/><stop offset="0.343" stop-color="#0c0202"/><stop offset="0.361" stop-color="#220706"/><stop offset="0.389" stop-color="#3c0f07"/><stop offset="0.504" stop-color="#70250b"/><stop offset="0.554" stop-color="#7d2a0d"/><stop offset="0.617" stop-color="#79290c"/><stop offset="0.627" stop-color="#6d240b"/><stop offset="0.643" stop-color="#501808"/><stop offset="0.660" stop-color="#2e0a06"/><stop offset="0.673" stop-color="#140304"/><stop offset="0.680" stop-color="#040001"/><stop offset="0.685" stop-color="#000000"/><stop offset="0.692" stop-color="#040001"/><stop offset="0.696" stop-color="#0e0203"/><stop offset="0.708" stop-color="#390e07"/><stop offset="0.718" stop-color="#67210a"/><stop offset="0.729" stop-color="#9a3511"/><stop offset="0.737" stop-color="#b43913"/><stop offset="0.748" stop-color="#c93b13"/><stop offset="0.760" stop-color="#df3d15"/><stop offset="0.769" stop-color="#fa4519"/><stop offset="0.773" stop-color="#ff4a1c"/><stop offset="0.795" stop-color="#ff692c"/><stop offset="0.845" stop-color="#ff863c"/><stop offset="0.908" stop-color="#ff9a42"/><stop offset="0.956" stop-color="#ff9b42"/><stop offset="1.000" stop-color="#ff9541"/></linearGradient>
<linearGradient id="g95" gradientUnits="userSpaceOnUse" x1="133.1" x2="506.1" y1="0" y2="0"><stop offset="0.000" stop-color="#220605"/><stop offset="0.039" stop-color="#1c0505"/><stop offset="0.084" stop-color="#000000"/><stop offset="0.102" stop-color="#020000"/><stop offset="0.154" stop-color="#230706"/><stop offset="0.206" stop-color="#290806"/><stop offset="0.253" stop-color="#200605"/><stop offset="0.280" stop-color="#0e0203"/><stop offset="0.310" stop-color="#000000"/><stop offset="0.328" stop-color="#020001"/><stop offset="0.343" stop-color="#0d0203"/><stop offset="0.361" stop-color="#230706"/><stop offset="0.389" stop-color="#3b0f07"/><stop offset="0.504" stop-color="#6d240a"/><stop offset="0.555" stop-color="#7a290c"/><stop offset="0.617" stop-color="#76280c"/><stop offset="0.627" stop-color="#6b230a"/><stop offset="0.643" stop-color="#501808"/><stop offset="0.660" stop-color="#2e0a06"/><stop offset="0.673" stop-color="#160304"/><stop offset="0.680" stop-color="#050101"/><stop offset="0.686" stop-color="#000000"/><stop offset="0.692" stop-color="#030001"/><stop offset="0.696" stop-color="#0c0202"/><stop offset="0.708" stop-color="#350c07"/><stop offset="0.718" stop-color="#611f09"/><stop offset="0.731" stop-color="#993511"/><stop offset="0.739" stop-color="#b23912"/><stop offset="0.749" stop-color="#c73a13"/><stop offset="0.761" stop-color="#dd3d14"/><stop offset="0.772" stop-color="#fb461a"/><stop offset="0.777" stop-color="#ff4c1d"/><stop offset="0.796" stop-color="#ff672b"/><stop offset="0.842" stop-color="#ff823a"/><stop offset="0.895" stop-color="#ff9541"/><stop offset="0.933" stop-color="#ff9a42"/><stop offset="1.000" stop-color="#ff9441"/></linearGradient>
<linearGradient id="g96" gradientUnits="userSpaceOnUse" x1="133.1" x2="506.1" y1="0" y2="0"><stop offset="0.000" stop-color="#210605"/><stop offset="0.038" stop-color="#1c0505"/><stop offset="0.083" stop-color="#000000"/><stop offset="0.101" stop-color="#020000"/><stop offset="0.151" stop-color="#220605"/><stop offset="0.204" stop-color="#290806"/><stop offset="0.251" stop-color="#200605"/><stop offset="0.275" stop-color="#120303"/><stop offset="0.303" stop-color="#020000"/><stop offset="0.324" stop-color="#010000"/><stop offset="0.342" stop-color="#0c0202"/><stop offset="0.359" stop-color="#210605"/><stop offset="0.387" stop-color="#3a0e07"/><stop offset="0.505" stop-color="#6b230a"/><stop offset="0.555" stop-color="#77280c"/><stop offset="0.618" stop-color="#73260b"/><stop offset="0.629" stop-color="#67210a"/><stop offset="0.645" stop-color="#4c1608"/><stop offset="0.662" stop-color="#2a0906"/><stop offset="0.674" stop-color="#140304"/><stop offset="0.681" stop-color="#040001"/><stop offset="0.686" stop-color="#000000"/><stop offset="0.693" stop-color="#040001"/><stop offset="0.697" stop-color="#0e0203"/><stop offset="0.709" stop-color="#370d07"/><stop offset="0.721" stop-color="#68210a"/><stop offset="0.732" stop-color="#973410"/><stop offset="0.740" stop-color="#b13912"/><stop offset="0.752" stop-color="#c73a13"/><stop offset="0.763" stop-color="#db3c14"/><stop offset="0.773" stop-color="#fa4519"/><stop offset="0.777" stop-color="#ff491c"/><stop offset="0.799" stop-color="#ff662b"/><stop offset="0.853" stop-color="#ff853b"/><stop offset="0.916" stop-color="#ff9842"/><stop offset="0.979" stop-color="#ff9741"/><stop offset="1.000" stop-color="#ff9441"/></linearGradient>
<linearGradient id="g97" gradientUnits="userSpaceOnUse" x1="133.1" x2="506.1" y1="0" y2="0"><stop offset="0.000" stop-color="#210605"/><stop offset="0.036" stop-color="#1b0505"/><stop offset="0.082" stop-color="#000000"/><stop offset="0.099" stop-color="#020001"/><stop offset="0.150" stop-color="#210605"/><stop offset="0.204" stop-color="#280806"/><stop offset="0.252" stop-color="#1f0605"/><stop offset="0.279" stop-color="#0e0203"/><stop offset="0.308" stop-color="#000000"/><stop offset="0.327" stop-color="#020000"/><stop offset="0.342" stop-color="#0c0202"/><stop offset="0.358" stop-color="#200605"/><stop offset="0.387" stop-color="#390e07"/><stop offset="0.505" stop-color="#68220a"/><stop offset="0.556" stop-color="#74260b"/><stop offset="0.618" stop-color="#70250b"/><stop offset="0.629" stop-color="#652009"/><stop offset="0.645" stop-color="#4c1608"/><stop offset="0.662" stop-color="#2a0906"/><stop offset="0.674" stop-color="#150304"/><stop offset="0.681" stop-color="#050101"/><stop offset="0.688" stop-color="#000000"/><stop offset="0.693" stop-color="#030001"/><stop offset="0.697" stop-color="#0b0102"/><stop offset="0.710" stop-color="#380d07"/><stop offset="0.723" stop-color="#67210a"/><stop offset="0.735" stop-color="#9b3511"/><stop offset="0.743" stop-color="#b23912"/><stop offset="0.764" stop-color="#d83c14"/><stop offset="0.776" stop-color="#fb4619"/><stop offset="0.782" stop-color="#ff4b1d"/><stop offset="0.800" stop-color="#ff642a"/><stop offset="0.850" stop-color="#ff8139"/><stop offset="0.909" stop-color="#ff9541"/><stop offset="0.950" stop-color="#ff9741"/><stop offset="1.000" stop-color="#ff9341"/></linearGradient>
<linearGradient id="g98" gradientUnits="userSpaceOnUse" x1="133.1" x2="506.1" y1="0" y2="0"><stop offset="0.000" stop-color="#200605"/><stop offset="0.035" stop-color="#1b0505"/><stop offset="0.079" stop-color="#000000"/><stop offset="0.097" stop-color="#020000"/><stop offset="0.149" stop-color="#210605"/><stop offset="0.202" stop-color="#270806"/><stop offset="0.252" stop-color="#1e0505"/><stop offset="0.299" stop-color="#030001"/><stop offset="0.318" stop-color="#000000"/><stop offset="0.336" stop-color="#080102"/><stop offset="0.359" stop-color="#210605"/><stop offset="0.387" stop-color="#380d07"/><stop offset="0.505" stop-color="#652009"/><stop offset="0.558" stop-color="#71250b"/><stop offset="0.619" stop-color="#6d230a"/><stop offset="0.633" stop-color="#5e1d09"/><stop offset="0.646" stop-color="#491507"/><stop offset="0.664" stop-color="#290806"/><stop offset="0.676" stop-color="#130304"/><stop offset="0.682" stop-color="#040001"/><stop offset="0.688" stop-color="#000000"/><stop offset="0.694" stop-color="#030001"/><stop offset="0.698" stop-color="#0d0203"/><stop offset="0.712" stop-color="#390e07"/><stop offset="0.724" stop-color="#67210a"/><stop offset="0.736" stop-color="#993511"/><stop offset="0.744" stop-color="#b03912"/><stop offset="0.765" stop-color="#d63c14"/><stop offset="0.779" stop-color="#fb461a"/><stop offset="0.784" stop-color="#ff4c1d"/><stop offset="0.802" stop-color="#ff6229"/><stop offset="0.849" stop-color="#ff7e38"/><stop offset="0.908" stop-color="#ff9341"/><stop offset="0.946" stop-color="#ff9641"/><stop offset="1.000" stop-color="#ff9140"/></linearGradient>
<linearGradient id="g99" gradientUnits="userSpaceOnUse" x1="133.1" x2="506.1" y1="0" y2="0"><stop offset="0.000" stop-color="#200605"/><stop offset="0.034" stop-color="#1a0505"/><stop offset="0.078" stop-color="#000000"/><stop offset="0.095" stop-color="#020000"/><stop offset="0.146" stop-color="#200605"/><stop offset="0.200" stop-color="#270806"/><stop offset="0.249" stop-color="#1e0605"/><stop offset="0.273" stop-color="#100203"/><stop offset="0.304" stop-color="#000000"/><stop offset="0.324" stop-color="#020000"/><stop offset="0.340" stop-color="#0c0202"/><stop offset="0.357" stop-color="#1f0605"/><stop offset="0.387" stop-color="#370d07"/><stop offset="0.507" stop-color="#631f09"/><stop offset="0.558" stop-color="#6e240b"/><stop offset="0.619" stop-color="#6a220a"/><stop offset="0.633" stop-color="#5c1c08"/><stop offset="0.647" stop-color="#461307"/><stop offset="0.666" stop-color="#250706"/><stop offset="0.676" stop-color="#150304"/><stop offset="0.684" stop-color="#030001"/><stop offset="0.690" stop-color="#000000"/><stop offset="0.696" stop-color="#040001"/><stop offset="0.710" stop-color="#300a06"/><stop offset="0.725" stop-color="#66210a"/><stop offset="0.737" stop-color="#973410"/><stop offset="0.745" stop-color="#ad3912"/><stop offset="0.767" stop-color="#d43b14"/><stop offset="0.780" stop-color="#f94519"/><stop offset="0.786" stop-color="#ff4a1c"/><stop offset="0.804" stop-color="#ff6128"/><stop offset="0.851" stop-color="#ff7d37"/><stop offset="0.912" stop-color="#ff9240"/><stop offset="0.952" stop-color="#ff9441"/><stop offset="1.000" stop-color="#ff9040"/></linearGradient>
<linearGradient id="g100" gradientUnits="userSpaceOnUse" x1="133.1" x2="506.1" y1="0" y2="0"><stop offset="0.000" stop-color="#1f0605"/><stop offset="0.032" stop-color="#1a0405"/><stop offset="0.076" stop-color="#000000"/><stop offset="0.094" stop-color="#020000"/><stop offset="0.143" stop-color="#1f0605"/><stop offset="0.197" stop-color="#260806"/><stop offset="0.247" stop-color="#1e0605"/><stop offset="0.271" stop-color="#120303"/><stop offset="0.300" stop-color="#010000"/><stop offset="0.323" stop-color="#010000"/><stop offset="0.340" stop-color="#0d0203"/><stop offset="0.355" stop-color="#1e0605"/><stop offset="0.387" stop-color="#360d07"/><stop offset="0.505" stop-color="#601e09"/><stop offset="0.559" stop-color="#6b230a"/><stop offset="0.621" stop-color="#67210a"/><stop offset="0.635" stop-color="#571a08"/><stop offset="0.649" stop-color="#431207"/><stop offset="0.668" stop-color="#230706"/><stop offset="0.677" stop-color="#130304"/><stop offset="0.684" stop-color="#040001"/><stop offset="0.689" stop-color="#000000"/><stop offset="0.694" stop-color="#010000"/><stop offset="0.698" stop-color="#080102"/><stop offset="0.713" stop-color="#350c07"/><stop offset="0.727" stop-color="#652009"/><stop offset="0.740" stop-color="#993511"/><stop offset="0.748" stop-color="#ae3912"/><stop offset="0.767" stop-color="#ce3b13"/><stop offset="0.776" stop-color="#e73f16"/><stop offset="0.783" stop-color="#f94519"/><stop offset="0.788" stop-color="#ff4a1c"/><stop offset="0.807" stop-color="#ff5f27"/><stop offset="0.854" stop-color="#ff7b36"/><stop offset="0.916" stop-color="#ff9040"/><stop offset="0.958" stop-color="#ff9241"/><stop offset="1.000" stop-color="#ff8f40"/></linearGradient>
<linearGradient id="g101" gradientUnits="userSpaceOnUse" x1="133.1" x2="506.1" y1="0" y2="0"><stop offset="0.000" stop-color="#1f0605"/><stop offset="0.031" stop-color="#190405"/><stop offset="0.075" stop-color="#000000"/><stop offset="0.092" stop-color="#020000"/><stop offset="0.142" stop-color="#1f0605"/><stop offset="0.197" stop-color="#250706"/><stop offset="0.248" stop-color="#1d0505"/><stop offset="0.272" stop-color="#100203"/><stop offset="0.303" stop-color="#000000"/><stop offset="0.324" stop-color="#020000"/><stop offset="0.340" stop-color="#0d0203"/><stop offset="0.355" stop-color="#1e0605"/><stop offset="0.387" stop-color="#350c07"/><stop offset="0.505" stop-color="#5d1d09"/><stop offset="0.560" stop-color="#68210a"/><stop offset="0.622" stop-color="#631f09"/><stop offset="0.642" stop-color="#4d1708"/><stop offset="0.666" stop-color="#250706"/><stop offset="0.677" stop-color="#150304"/><stop offset="0.685" stop-color="#030001"/><stop offset="0.692" stop-color="#000000"/><stop offset="0.697" stop-color="#040001"/><stop offset="0.702" stop-color="#120303"/><stop offset="0.714" stop-color="#360d07"/><stop offset="0.729" stop-color="#69220a"/><stop offset="0.741" stop-color="#963410"/><stop offset="0.749" stop-color="#ab3812"/><stop offset="0.768" stop-color="#cc3b13"/><stop offset="0.779" stop-color="#e83f16"/><stop offset="0.786" stop-color="#fa4519"/><stop offset="0.791" stop-color="#ff4b1c"/><stop offset="0.810" stop-color="#ff5e27"/><stop offset="0.857" stop-color="#ff7a35"/><stop offset="0.920" stop-color="#ff8f40"/><stop offset="0.968" stop-color="#ff9040"/><stop offset="1.000" stop-color="#ff8d3f"/></linearGradient>
<linearGradient id="g102" gradientUnits="userSpaceOnUse" x1="133.1" x2="506.1" y1="0" y2="0"><stop offset="0.000" stop-color="#1e0505"/><stop offset="0.029" stop-color="#190404"/><stop offset="0.072" stop-color="#000000"/><stop offset="0.091" stop-color="#020000"/><stop offset="0.139" stop-color="#1e0505"/><stop offset="0.194" stop-color="#250706"/><stop offset="0.247" stop-color="#1d0505"/><stop offset="0.271" stop-color="#100203"/><stop offset="0.302" stop-color="#000000"/><stop offset="0.323" stop-color="#020000"/><stop offset="0.339" stop-color="#0c0202"/><stop offset="0.354" stop-color="#1d0505"/><stop offset="0.387" stop-color="#340c07"/><stop offset="0.504" stop-color="#5b1c08"/><stop offset="0.560" stop-color="#652009"/><stop offset="0.622" stop-color="#611e09"/><stop offset="0.641" stop-color="#4e1708"/><stop offset="0.668" stop-color="#240706"/><stop offset="0.678" stop-color="#130304"/><stop offset="0.685" stop-color="#040001"/><stop offset="0.690" stop-color="#000000"/><stop offset="0.697" stop-color="#030001"/><stop offset="0.701" stop-color="#0b0102"/><stop offset="0.708" stop-color="#1e0605"/><stop offset="0.720" stop-color="#421207"/><stop offset="0.733" stop-color="#71260b"/><stop offset="0.744" stop-color="#983410"/><stop offset="0.752" stop-color="#ab3812"/><stop offset="0.769" stop-color="#c93b13"/><stop offset="0.782" stop-color="#e83f16"/><stop offset="0.790" stop-color="#fc461a"/><stop offset="0.795" stop-color="#ff4c1d"/><stop offset="0.815" stop-color="#ff5e27"/><stop offset="0.861" stop-color="#ff7935"/><stop offset="0.922" stop-color="#ff8e3f"/><stop offset="0.972" stop-color="#ff8e40"/><stop offset="1.000" stop-color="#ff8c3f"/></linearGradient>
<linearGradient id="g103" gradientUnits="userSpaceOnUse" x1="133.1" x2="506.1" y1="0" y2="0"><stop offset="0.000" stop-color="#1e0505"/><stop offset="0.028" stop-color="#180404"/><stop offset="0.071" stop-color="#000000"/><stop offset="0.088" stop-color="#020000"/><stop offset="0.138" stop-color="#1e0505"/><stop offset="0.194" stop-color="#240706"/><stop offset="0.248" stop-color="#1c0505"/><stop offset="0.275" stop-color="#0c0202"/><stop offset="0.304" stop-color="#000000"/><stop offset="0.323" stop-color="#020000"/><stop offset="0.339" stop-color="#0d0203"/><stop offset="0.354" stop-color="#1d0505"/><stop offset="0.387" stop-color="#340c07"/><stop offset="0.504" stop-color="#581b08"/><stop offset="0.562" stop-color="#621f09"/><stop offset="0.623" stop-color="#5e1d09"/><stop offset="0.645" stop-color="#481407"/><stop offset="0.668" stop-color="#240706"/><stop offset="0.678" stop-color="#150304"/><stop offset="0.686" stop-color="#040001"/><stop offset="0.693" stop-color="#000000"/><stop offset="0.698" stop-color="#030001"/><stop offset="0.704" stop-color="#110203"/><stop offset="0.717" stop-color="#360d07"/><stop offset="0.733" stop-color="#6a220a"/><stop offset="0.745" stop-color="#953310"/><stop offset="0.753" stop-color="#a83812"/><stop offset="0.771" stop-color="#c63a13"/><stop offset="0.784" stop-color="#e83f16"/><stop offset="0.792" stop-color="#fc461a"/><stop offset="0.799" stop-color="#ff4d1e"/><stop offset="0.827" stop-color="#ff6329"/><stop offset="0.869" stop-color="#ff7935"/><stop offset="0.928" stop-color="#ff8d3f"/><stop offset="0.987" stop-color="#ff8c3f"/><stop offset="1.000" stop-color="#ff8a3e"/></linearGradient>
<linearGradient id="g104" gradientUnits="userSpaceOnUse" x1="133.1" x2="506.1" y1="0" y2="0"><stop offset="0.000" stop-color="#1d0505"/><stop offset="0.027" stop-color="#180404"/><stop offset="0.068" stop-color="#000000"/><stop offset="0.087" stop-color="#020000"/><stop offset="0.135" stop-color="#1d0505"/><stop offset="0.192" stop-color="#230706"/><stop offset="0.247" stop-color="#1c0505"/><stop offset="0.272" stop-color="#0d0203"/><stop offset="0.302" stop-color="#000000"/><stop offset="0.323" stop-color="#020000"/><stop offset="0.338" stop-color="#0c0202"/><stop offset="0.353" stop-color="#1d0505"/><stop offset="0.387" stop-color="#330b07"/><stop offset="0.504" stop-color="#561a08"/><stop offset="0.563" stop-color="#5f1e09"/><stop offset="0.623" stop-color="#5b1c08"/><stop offset="0.643" stop-color="#491507"/><stop offset="0.669" stop-color="#230706"/><stop offset="0.680" stop-color="#140304"/><stop offset="0.688" stop-color="#030001"/><stop offset="0.693" stop-color="#000000"/><stop offset="0.700" stop-color="#040001"/><stop offset="0.710" stop-color="#1f0605"/><stop offset="0.725" stop-color="#4a1507"/><stop offset="0.748" stop-color="#953410"/><stop offset="0.757" stop-color="#a93812"/><stop offset="0.772" stop-color="#c33a13"/><stop offset="0.788" stop-color="#ec4016"/><stop offset="0.795" stop-color="#fc461a"/><stop offset="0.802" stop-color="#ff4d1e"/><stop offset="0.853" stop-color="#ff6f2f"/><stop offset="0.917" stop-color="#ff883d"/><stop offset="0.953" stop-color="#ff8c3f"/><stop offset="1.000" stop-color="#ff893d"/></linearGradient>
<linearGradient id="g105" gradientUnits="userSpaceOnUse" x1="133.1" x2="506.1" y1="0" y2="0"><stop offset="0.000" stop-color="#1c0505"/><stop offset="0.025" stop-color="#170404"/><stop offset="0.067" stop-color="#000000"/><stop offset="0.086" stop-color="#020000"/><stop offset="0.133" stop-color="#1c0505"/><stop offset="0.189" stop-color="#230706"/><stop offset="0.244" stop-color="#1c0505"/><stop offset="0.268" stop-color="#0f0203"/><stop offset="0.299" stop-color="#000000"/><stop offset="0.322" stop-color="#020000"/><stop offset="0.338" stop-color="#0d0203"/><stop offset="0.351" stop-color="#1c0505"/><stop offset="0.387" stop-color="#320b07"/><stop offset="0.504" stop-color="#541908"/><stop offset="0.564" stop-color="#5c1c08"/><stop offset="0.625" stop-color="#581b08"/><stop offset="0.646" stop-color="#441307"/><stop offset="0.670" stop-color="#210605"/><stop offset="0.680" stop-color="#150304"/><stop offset="0.688" stop-color="#040001"/><stop offset="0.694" stop-color="#000000"/><stop offset="0.700" stop-color="#020001"/><stop offset="0.704" stop-color="#0b0102"/><stop offset="0.709" stop-color="#1a0505"/><stop offset="0.718" stop-color="#320b07"/><stop offset="0.737" stop-color="#6b230a"/><stop offset="0.749" stop-color="#923310"/><stop offset="0.759" stop-color="#a63812"/><stop offset="0.773" stop-color="#c03a13"/><stop offset="0.791" stop-color="#ec4016"/><stop offset="0.798" stop-color="#fc461a"/><stop offset="0.803" stop-color="#ff4b1d"/><stop offset="0.863" stop-color="#ff7131"/><stop offset="0.929" stop-color="#ff883d"/><stop offset="0.977" stop-color="#ff893d"/><stop offset="1.000" stop-color="#ff873c"/></linearGradient>
<linearGradient id="g106" gradientUnits="userSpaceOnUse" x1="133.1" x2="506.1" y1="0" y2="0"><stop offset="0.000" stop-color="#1c0505"/><stop offset="0.024" stop-color="#170404"/><stop offset="0.064" stop-color="#000000"/><stop offset="0.083" stop-color="#020000"/><stop offset="0.130" stop-color="#1b0505"/><stop offset="0.185" stop-color="#220606"/><stop offset="0.240" stop-color="#1c0505"/><stop offset="0.263" stop-color="#120303"/><stop offset="0.294" stop-color="#020000"/><stop offset="0.319" stop-color="#010000"/><stop offset="0.336" stop-color="#0c0202"/><stop offset="0.351" stop-color="#1c0505"/><stop offset="0.387" stop-color="#310b07"/><stop offset="0.505" stop-color="#521808"/><stop offset="0.566" stop-color="#5a1b08"/><stop offset="0.626" stop-color="#561a08"/><stop offset="0.647" stop-color="#421207"/><stop offset="0.672" stop-color="#200605"/><stop offset="0.681" stop-color="#140304"/><stop offset="0.689" stop-color="#030001"/><stop offset="0.696" stop-color="#000000"/><stop offset="0.701" stop-color="#030001"/><stop offset="0.706" stop-color="#100203"/><stop offset="0.721" stop-color="#350c07"/><stop offset="0.739" stop-color="#68220a"/><stop offset="0.752" stop-color="#923310"/><stop offset="0.764" stop-color="#a93812"/><stop offset="0.777" stop-color="#c33a13"/><stop offset="0.794" stop-color="#eb4016"/><stop offset="0.800" stop-color="#fb461a"/><stop offset="0.807" stop-color="#ff4b1d"/><stop offset="0.870" stop-color="#ff7131"/><stop offset="0.933" stop-color="#ff873c"/><stop offset="0.987" stop-color="#ff863c"/><stop offset="1.000" stop-color="#ff853b"/></linearGradient>
<linearGradient id="g107" gradientUnits="userSpaceOnUse" x1="133.1" x2="506.1" y1="0" y2="0"><stop offset="0.000" stop-color="#1b0505"/><stop offset="0.023" stop-color="#160404"/><stop offset="0.063" stop-color="#000000"/><stop offset="0.082" stop-color="#020000"/><stop offset="0.129" stop-color="#1b0505"/><stop offset="0.188" stop-color="#210605"/><stop offset="0.247" stop-color="#1a0405"/><stop offset="0.295" stop-color="#010000"/><stop offset="0.319" stop-color="#010000"/><stop offset="0.335" stop-color="#0c0102"/><stop offset="0.350" stop-color="#1b0505"/><stop offset="0.387" stop-color="#300a06"/><stop offset="0.505" stop-color="#501708"/><stop offset="0.567" stop-color="#571a08"/><stop offset="0.626" stop-color="#541908"/><stop offset="0.649" stop-color="#3f1107"/><stop offset="0.672" stop-color="#200605"/><stop offset="0.682" stop-color="#130304"/><stop offset="0.690" stop-color="#030001"/><stop offset="0.697" stop-color="#000000"/><stop offset="0.702" stop-color="#030001"/><stop offset="0.712" stop-color="#1b0505"/><stop offset="0.724" stop-color="#390e07"/><stop offset="0.741" stop-color="#6a220a"/><stop offset="0.753" stop-color="#8f310f"/><stop offset="0.767" stop-color="#a83812"/><stop offset="0.780" stop-color="#c33a13"/><stop offset="0.798" stop-color="#ee4117"/><stop offset="0.804" stop-color="#fc471a"/><stop offset="0.814" stop-color="#ff4d1e"/><stop offset="0.877" stop-color="#ff7131"/><stop offset="0.937" stop-color="#ff853b"/><stop offset="0.996" stop-color="#ff843b"/><stop offset="1.000" stop-color="#ff833a"/></linearGradient>
<linearGradient id="g108" gradientUnits="userSpaceOnUse" x1="133.1" x2="506.1" y1="0" y2="0"><stop offset="0.000" stop-color="#1b0505"/><stop offset="0.023" stop-color="#150304"/><stop offset="0.060" stop-color="#000000"/><stop offset="0.080" stop-color="#020000"/><stop offset="0.126" stop-color="#1a0505"/><stop offset="0.185" stop-color="#210605"/><stop offset="0.245" stop-color="#190405"/><stop offset="0.295" stop-color="#000000"/><stop offset="0.319" stop-color="#020000"/><stop offset="0.335" stop-color="#0c0202"/><stop offset="0.349" stop-color="#1a0505"/><stop offset="0.389" stop-color="#2f0a06"/><stop offset="0.507" stop-color="#4e1708"/><stop offset="0.568" stop-color="#551908"/><stop offset="0.627" stop-color="#511808"/><stop offset="0.650" stop-color="#3d1007"/><stop offset="0.673" stop-color="#1f0605"/><stop offset="0.682" stop-color="#140304"/><stop offset="0.690" stop-color="#040001"/><stop offset="0.697" stop-color="#000000"/><stop offset="0.704" stop-color="#040001"/><stop offset="0.712" stop-color="#190404"/><stop offset="0.721" stop-color="#2e0a06"/><stop offset="0.743" stop-color="#67210a"/><stop offset="0.756" stop-color="#8e310f"/><stop offset="0.775" stop-color="#b03912"/><stop offset="0.798" stop-color="#e63f15"/><stop offset="0.806" stop-color="#fa4519"/><stop offset="0.812" stop-color="#ff4a1c"/><stop offset="0.883" stop-color="#ff7131"/><stop offset="0.940" stop-color="#ff833a"/><stop offset="1.000" stop-color="#ff8139"/></linearGradient>
<linearGradient id="g109" gradientUnits="userSpaceOnUse" x1="133.1" x2="506.1" y1="0" y2="0"><stop offset="0.000" stop-color="#1a0505"/><stop offset="0.021" stop-color="#140304"/><stop offset="0.059" stop-color="#000000"/><stop offset="0.078" stop-color="#020000"/><stop offset="0.123" stop-color="#1a0405"/><stop offset="0.181" stop-color="#200605"/><stop offset="0.241" stop-color="#1a0405"/><stop offset="0.265" stop-color="#0e0203"/><stop offset="0.296" stop-color="#000000"/><stop offset="0.319" stop-color="#020000"/><stop offset="0.334" stop-color="#0c0202"/><stop offset="0.347" stop-color="#1a0405"/><stop offset="0.389" stop-color="#2e0a06"/><stop offset="0.508" stop-color="#4c1607"/><stop offset="0.570" stop-color="#521908"/><stop offset="0.629" stop-color="#4e1708"/><stop offset="0.651" stop-color="#3b0f07"/><stop offset="0.674" stop-color="#1e0605"/><stop offset="0.684" stop-color="#130304"/><stop offset="0.692" stop-color="#030001"/><stop offset="0.698" stop-color="#000000"/><stop offset="0.704" stop-color="#020001"/><stop offset="0.709" stop-color="#0f0203"/><stop offset="0.714" stop-color="#1b0505"/><stop offset="0.731" stop-color="#411107"/><stop offset="0.748" stop-color="#71250b"/><stop offset="0.759" stop-color="#8d310f"/><stop offset="0.779" stop-color="#b23912"/><stop offset="0.802" stop-color="#e93f16"/><stop offset="0.810" stop-color="#fa4519"/><stop offset="0.818" stop-color="#ff4a1c"/><stop offset="0.889" stop-color="#ff7030"/><stop offset="0.944" stop-color="#ff8139"/><stop offset="1.000" stop-color="#ff7f38"/></linearGradient>
<linearGradient id="g110" gradientUnits="userSpaceOnUse" x1="133.1" x2="506.1" y1="0" y2="0"><stop offset="0.000" stop-color="#1a0405"/><stop offset="0.021" stop-color="#120303"/><stop offset="0.056" stop-color="#000000"/><stop offset="0.076" stop-color="#020000"/><stop offset="0.121" stop-color="#190404"/><stop offset="0.178" stop-color="#1f0605"/><stop offset="0.240" stop-color="#190405"/><stop offset="0.263" stop-color="#0f0203"/><stop offset="0.295" stop-color="#000000"/><stop offset="0.318" stop-color="#020000"/><stop offset="0.334" stop-color="#0c0202"/><stop offset="0.347" stop-color="#1a0405"/><stop offset="0.389" stop-color="#2e0a06"/><stop offset="0.508" stop-color="#4a1507"/><stop offset="0.571" stop-color="#501808"/><stop offset="0.629" stop-color="#4d1608"/><stop offset="0.651" stop-color="#3a0e07"/><stop offset="0.674" stop-color="#1f0605"/><stop offset="0.684" stop-color="#150304"/><stop offset="0.693" stop-color="#020001"/><stop offset="0.700" stop-color="#000000"/><stop offset="0.705" stop-color="#030001"/><stop offset="0.714" stop-color="#190404"/><stop offset="0.724" stop-color="#2d0906"/><stop offset="0.747" stop-color="#66210a"/><stop offset="0.760" stop-color="#892f0e"/><stop offset="0.782" stop-color="#b23912"/><stop offset="0.804" stop-color="#e83f16"/><stop offset="0.812" stop-color="#f94519"/><stop offset="0.822" stop-color="#ff4a1c"/><stop offset="0.895" stop-color="#ff7030"/><stop offset="0.946" stop-color="#ff7f38"/><stop offset="1.000" stop-color="#ff7e37"/></linearGradient>
<linearGradient id="g111" gradientUnits="userSpaceOnUse" x1="133.1" x2="506.1" y1="0" y2="0"><stop offset="0.000" stop-color="#190404"/><stop offset="0.023" stop-color="#100203"/><stop offset="0.054" stop-color="#000000"/><stop offset="0.074" stop-color="#020000"/><stop offset="0.119" stop-color="#190404"/><stop offset="0.184" stop-color="#1f0605"/><stop offset="0.245" stop-color="#170404"/><stop offset="0.291" stop-color="#000000"/><stop offset="0.316" stop-color="#020000"/><stop offset="0.332" stop-color="#0c0202"/><stop offset="0.346" stop-color="#190404"/><stop offset="0.390" stop-color="#2d0906"/><stop offset="0.509" stop-color="#481407"/><stop offset="0.574" stop-color="#4e1708"/><stop offset="0.630" stop-color="#4a1507"/><stop offset="0.654" stop-color="#360d07"/><stop offset="0.676" stop-color="#1e0505"/><stop offset="0.685" stop-color="#140304"/><stop offset="0.694" stop-color="#020000"/><stop offset="0.704" stop-color="#000000"/><stop offset="0.709" stop-color="#090102"/><stop offset="0.714" stop-color="#170404"/><stop offset="0.724" stop-color="#290806"/><stop offset="0.749" stop-color="#67210a"/><stop offset="0.763" stop-color="#882f0e"/><stop offset="0.782" stop-color="#ab3812"/><stop offset="0.807" stop-color="#e63f16"/><stop offset="0.815" stop-color="#f74419"/><stop offset="0.826" stop-color="#ff491b"/><stop offset="0.902" stop-color="#ff6f2f"/><stop offset="0.950" stop-color="#ff7d37"/><stop offset="1.000" stop-color="#ff7c36"/></linearGradient>
<linearGradient id="g112" gradientUnits="userSpaceOnUse" x1="133.1" x2="506.1" y1="0" y2="0"><stop offset="0.000" stop-color="#180404"/><stop offset="0.029" stop-color="#0b0102"/><stop offset="0.052" stop-color="#000000"/><stop offset="0.072" stop-color="#020000"/><stop offset="0.117" stop-color="#190404"/><stop offset="0.182" stop-color="#1e0605"/><stop offset="0.245" stop-color="#170404"/><stop offset="0.290" stop-color="#010000"/><stop offset="0.315" stop-color="#010000"/><stop offset="0.331" stop-color="#0b0102"/><stop offset="0.345" stop-color="#180404"/><stop offset="0.390" stop-color="#2c0906"/><stop offset="0.511" stop-color="#461407"/><stop offset="0.575" stop-color="#4c1607"/><stop offset="0.630" stop-color="#491507"/><stop offset="0.654" stop-color="#360d07"/><stop offset="0.676" stop-color="#1e0505"/><stop offset="0.686" stop-color="#130304"/><stop offset="0.694" stop-color="#030001"/><stop offset="0.701" stop-color="#000000"/><stop offset="0.706" stop-color="#020000"/><stop offset="0.712" stop-color="#0e0203"/><stop offset="0.716" stop-color="#180404"/><stop offset="0.725" stop-color="#290806"/><stop offset="0.752" stop-color="#67210a"/><stop offset="0.765" stop-color="#862e0e"/><stop offset="0.783" stop-color="#a73812"/><stop offset="0.811" stop-color="#e83f16"/><stop offset="0.819" stop-color="#f74418"/><stop offset="0.831" stop-color="#ff491b"/><stop offset="0.909" stop-color="#ff6e2f"/><stop offset="0.953" stop-color="#ff7b36"/><stop offset="1.000" stop-color="#ff7a35"/></linearGradient>
<linearGradient id="g113" gradientUnits="userSpaceOnUse" x1="133.1" x2="506.1" y1="0" y2="0"><stop offset="0.000" stop-color="#180404"/><stop offset="0.039" stop-color="#040001"/><stop offset="0.052" stop-color="#000000"/><stop offset="0.070" stop-color="#020000"/><stop offset="0.114" stop-color="#180404"/><stop offset="0.180" stop-color="#1e0505"/><stop offset="0.244" stop-color="#170404"/><stop offset="0.290" stop-color="#000000"/><stop offset="0.315" stop-color="#020000"/><stop offset="0.331" stop-color="#0c0202"/><stop offset="0.345" stop-color="#190404"/><stop offset="0.391" stop-color="#2c0906"/><stop offset="0.512" stop-color="#451307"/><stop offset="0.578" stop-color="#4a1507"/><stop offset="0.631" stop-color="#461407"/><stop offset="0.655" stop-color="#340c07"/><stop offset="0.677" stop-color="#1d0505"/><stop offset="0.686" stop-color="#150304"/><stop offset="0.696" stop-color="#030001"/><stop offset="0.702" stop-color="#000000"/><stop offset="0.708" stop-color="#020000"/><stop offset="0.713" stop-color="#0e0203"/><stop offset="0.717" stop-color="#180404"/><stop offset="0.727" stop-color="#280806"/><stop offset="0.756" stop-color="#6b230a"/><stop offset="0.769" stop-color="#872e0e"/><stop offset="0.784" stop-color="#a33712"/><stop offset="0.815" stop-color="#e94016"/><stop offset="0.824" stop-color="#f84419"/><stop offset="0.838" stop-color="#ff491c"/><stop offset="0.918" stop-color="#ff6f2f"/><stop offset="0.960" stop-color="#ff7935"/><stop offset="1.000" stop-color="#ff7834"/></linearGradient>
<linearGradient id="g114" gradientUnits="userSpaceOnUse" x1="133.1" x2="506.1" y1="0" y2="0"><stop offset="0.000" stop-color="#170404"/><stop offset="0.047" stop-color="#000000"/><stop offset="0.068" stop-color="#020000"/><stop offset="0.111" stop-color="#180404"/><stop offset="0.178" stop-color="#1d0505"/><stop offset="0.244" stop-color="#160404"/><stop offset="0.288" stop-color="#000000"/><stop offset="0.314" stop-color="#010000"/><stop offset="0.330" stop-color="#0b0102"/><stop offset="0.343" stop-color="#180404"/><stop offset="0.393" stop-color="#2b0906"/><stop offset="0.513" stop-color="#431207"/><stop offset="0.580" stop-color="#481407"/><stop offset="0.633" stop-color="#441307"/><stop offset="0.657" stop-color="#320b07"/><stop offset="0.678" stop-color="#1c0505"/><stop offset="0.688" stop-color="#140304"/><stop offset="0.697" stop-color="#020000"/><stop offset="0.706" stop-color="#000000"/><stop offset="0.712" stop-color="#070102"/><stop offset="0.718" stop-color="#180404"/><stop offset="0.728" stop-color="#270806"/><stop offset="0.760" stop-color="#6e240b"/><stop offset="0.784" stop-color="#9c3611"/><stop offset="0.808" stop-color="#d33b14"/><stop offset="0.822" stop-color="#ee4117"/><stop offset="0.835" stop-color="#fb461a"/><stop offset="0.851" stop-color="#ff4c1d"/><stop offset="0.925" stop-color="#ff6e2f"/><stop offset="0.964" stop-color="#ff7734"/><stop offset="1.000" stop-color="#ff7633"/></linearGradient>
<linearGradient id="g115" gradientUnits="userSpaceOnUse" x1="133.1" x2="506.1" y1="0" y2="0"><stop offset="0.000" stop-color="#160404"/><stop offset="0.044" stop-color="#000000"/><stop offset="0.066" stop-color="#020000"/><stop offset="0.109" stop-color="#170404"/><stop offset="0.178" stop-color="#1d0505"/><stop offset="0.243" stop-color="#160404"/><stop offset="0.287" stop-color="#000000"/><stop offset="0.314" stop-color="#020000"/><stop offset="0.330" stop-color="#0c0202"/><stop offset="0.342" stop-color="#180404"/><stop offset="0.393" stop-color="#2a0906"/><stop offset="0.515" stop-color="#411107"/><stop offset="0.582" stop-color="#461307"/><stop offset="0.633" stop-color="#431207"/><stop offset="0.657" stop-color="#320b07"/><stop offset="0.678" stop-color="#1c0505"/><stop offset="0.689" stop-color="#130304"/><stop offset="0.698" stop-color="#020000"/><stop offset="0.708" stop-color="#000000"/><stop offset="0.713" stop-color="#080102"/><stop offset="0.718" stop-color="#160404"/><stop offset="0.728" stop-color="#240706"/><stop offset="0.763" stop-color="#6d240a"/><stop offset="0.786" stop-color="#983410"/><stop offset="0.803" stop-color="#c13a13"/><stop offset="0.824" stop-color="#ec4016"/><stop offset="0.839" stop-color="#fa4519"/><stop offset="0.854" stop-color="#ff4b1c"/><stop offset="0.937" stop-color="#ff7030"/><stop offset="0.973" stop-color="#ff7533"/><stop offset="1.000" stop-color="#ff7432"/></linearGradient>
<linearGradient id="g116" gradientUnits="userSpaceOnUse" x1="133.1" x2="506.1" y1="0" y2="0"><stop offset="0.000" stop-color="#150304"/><stop offset="0.042" stop-color="#000000"/><stop offset="0.063" stop-color="#020000"/><stop offset="0.107" stop-color="#170404"/><stop offset="0.182" stop-color="#1c0505"/><stop offset="0.243" stop-color="#150304"/><stop offset="0.286" stop-color="#000000"/><stop offset="0.312" stop-color="#020000"/><stop offset="0.328" stop-color="#0c0202"/><stop offset="0.340" stop-color="#170404"/><stop offset="0.394" stop-color="#290806"/><stop offset="0.516" stop-color="#401107"/><stop offset="0.586" stop-color="#441307"/><stop offset="0.634" stop-color="#411107"/><stop offset="0.658" stop-color="#300a06"/><stop offset="0.680" stop-color="#1b0505"/><stop offset="0.690" stop-color="#120303"/><stop offset="0.698" stop-color="#030001"/><stop offset="0.705" stop-color="#000000"/><stop offset="0.710" stop-color="#010000"/><stop offset="0.716" stop-color="#0c0202"/><stop offset="0.720" stop-color="#160404"/><stop offset="0.729" stop-color="#230706"/><stop offset="0.765" stop-color="#6c230a"/><stop offset="0.787" stop-color="#933310"/><stop offset="0.802" stop-color="#b73913"/><stop offset="0.824" stop-color="#e53e15"/><stop offset="0.840" stop-color="#f74418"/><stop offset="0.857" stop-color="#ff4a1c"/><stop offset="0.946" stop-color="#ff6f30"/><stop offset="0.983" stop-color="#ff7331"/><stop offset="1.000" stop-color="#ff7231"/></linearGradient>
<linearGradient id="g117" gradientUnits="userSpaceOnUse" x1="133.1" x2="506.1" y1="0" y2="0"><stop offset="0.000" stop-color="#130304"/><stop offset="0.039" stop-color="#000000"/><stop offset="0.062" stop-color="#020000"/><stop offset="0.105" stop-color="#170404"/><stop offset="0.182" stop-color="#1b0505"/><stop offset="0.241" stop-color="#150304"/><stop offset="0.284" stop-color="#000000"/><stop offset="0.311" stop-color="#010000"/><stop offset="0.327" stop-color="#0b0102"/><stop offset="0.340" stop-color="#170404"/><stop offset="0.397" stop-color="#290806"/><stop offset="0.519" stop-color="#3f1007"/><stop offset="0.590" stop-color="#421207"/><stop offset="0.635" stop-color="#3f1007"/><stop offset="0.660" stop-color="#2e0a06"/><stop offset="0.681" stop-color="#1b0505"/><stop offset="0.690" stop-color="#140304"/><stop offset="0.700" stop-color="#030001"/><stop offset="0.706" stop-color="#000000"/><stop offset="0.712" stop-color="#020000"/><stop offset="0.717" stop-color="#0c0202"/><stop offset="0.721" stop-color="#160404"/><stop offset="0.731" stop-color="#230706"/><stop offset="0.775" stop-color="#76280c"/><stop offset="0.788" stop-color="#8f310f"/><stop offset="0.802" stop-color="#b03912"/><stop offset="0.823" stop-color="#dc3d14"/><stop offset="0.839" stop-color="#f04117"/><stop offset="0.858" stop-color="#fe481b"/><stop offset="0.953" stop-color="#ff6e2f"/><stop offset="0.993" stop-color="#ff7130"/><stop offset="1.000" stop-color="#ff7030"/></linearGradient>
<linearGradient id="g118" gradientUnits="userSpaceOnUse" x1="133.1" x2="506.1" y1="0" y2="0"><stop offset="0.000" stop-color="#120303"/><stop offset="0.038" stop-color="#000000"/><stop offset="0.059" stop-color="#020000"/><stop offset="0.102" stop-color="#160404"/><stop offset="0.182" stop-color="#1b0505"/><stop offset="0.240" stop-color="#150304"/><stop offset="0.283" stop-color="#000000"/><stop offset="0.311" stop-color="#020000"/><stop offset="0.327" stop-color="#0c0202"/><stop offset="0.339" stop-color="#170404"/><stop offset="0.398" stop-color="#290806"/><stop offset="0.520" stop-color="#3d1007"/><stop offset="0.592" stop-color="#411107"/><stop offset="0.637" stop-color="#3d1007"/><stop offset="0.661" stop-color="#2d0906"/><stop offset="0.682" stop-color="#1a0405"/><stop offset="0.692" stop-color="#130304"/><stop offset="0.701" stop-color="#020000"/><stop offset="0.710" stop-color="#000000"/><stop offset="0.716" stop-color="#060101"/><stop offset="0.723" stop-color="#160404"/><stop offset="0.732" stop-color="#220606"/><stop offset="0.776" stop-color="#73260b"/><stop offset="0.790" stop-color="#8a300f"/><stop offset="0.803" stop-color="#ac3812"/><stop offset="0.824" stop-color="#d83c14"/><stop offset="0.843" stop-color="#ef4117"/><stop offset="0.863" stop-color="#fe481b"/><stop offset="0.957" stop-color="#ff6d2e"/><stop offset="0.997" stop-color="#ff6e2f"/><stop offset="1.000" stop-color="#ff6e2f"/></linearGradient>
<linearGradient id="g119" gradientUnits="userSpaceOnUse" x1="133.1" x2="506.1" y1="0" y2="0"><stop offset="0.000" stop-color="#100203"/><stop offset="0.035" stop-color="#000000"/><stop offset="0.056" stop-color="#020000"/><stop offset="0.099" stop-color="#160404"/><stop offset="0.181" stop-color="#1a0505"/><stop offset="0.239" stop-color="#140304"/><stop offset="0.282" stop-color="#000000"/><stop offset="0.310" stop-color="#020000"/><stop offset="0.326" stop-color="#0c0202"/><stop offset="0.338" stop-color="#160404"/><stop offset="0.399" stop-color="#280806"/><stop offset="0.521" stop-color="#3c0f07"/><stop offset="0.597" stop-color="#3f1007"/><stop offset="0.637" stop-color="#3c0f07"/><stop offset="0.662" stop-color="#2b0906"/><stop offset="0.684" stop-color="#190405"/><stop offset="0.693" stop-color="#130304"/><stop offset="0.702" stop-color="#020000"/><stop offset="0.713" stop-color="#000000"/><stop offset="0.718" stop-color="#090102"/><stop offset="0.724" stop-color="#160404"/><stop offset="0.733" stop-color="#210605"/><stop offset="0.779" stop-color="#71250b"/><stop offset="0.791" stop-color="#862e0e"/><stop offset="0.806" stop-color="#ab3812"/><stop offset="0.826" stop-color="#d43b14"/><stop offset="0.849" stop-color="#ee4117"/><stop offset="0.869" stop-color="#fd471b"/><stop offset="0.962" stop-color="#ff6b2d"/><stop offset="1.000" stop-color="#ff6c2e"/></linearGradient>
<linearGradient id="g120" gradientUnits="userSpaceOnUse" x1="133.1" x2="506.1" y1="0" y2="0"><stop offset="0.000" stop-color="#0f0203"/><stop offset="0.032" stop-color="#000000"/><stop offset="0.054" stop-color="#010000"/><stop offset="0.097" stop-color="#160404"/><stop offset="0.181" stop-color="#1a0405"/><stop offset="0.239" stop-color="#140304"/><stop offset="0.280" stop-color="#000000"/><stop offset="0.308" stop-color="#020000"/><stop offset="0.324" stop-color="#0b0102"/><stop offset="0.336" stop-color="#160404"/><stop offset="0.401" stop-color="#270806"/><stop offset="0.523" stop-color="#3b0f07"/><stop offset="0.599" stop-color="#3d1007"/><stop offset="0.638" stop-color="#3a0e07"/><stop offset="0.662" stop-color="#2b0906"/><stop offset="0.684" stop-color="#190405"/><stop offset="0.694" stop-color="#120303"/><stop offset="0.704" stop-color="#020000"/><stop offset="0.714" stop-color="#010000"/><stop offset="0.720" stop-color="#0a0102"/><stop offset="0.725" stop-color="#160404"/><stop offset="0.735" stop-color="#210605"/><stop offset="0.780" stop-color="#6d240b"/><stop offset="0.794" stop-color="#852e0e"/><stop offset="0.808" stop-color="#aa3812"/><stop offset="0.828" stop-color="#d23b14"/><stop offset="0.862" stop-color="#f54318"/><stop offset="0.879" stop-color="#ff491c"/><stop offset="0.966" stop-color="#ff692d"/><stop offset="1.000" stop-color="#ff6a2d"/></linearGradient>
<linearGradient id="g121" gradientUnits="userSpaceOnUse" x1="133.1" x2="506.1" y1="0" y2="0"><stop offset="0.000" stop-color="#0d0203"/><stop offset="0.029" stop-color="#000000"/><stop offset="0.052" stop-color="#020000"/><stop offset="0.094" stop-color="#160304"/><stop offset="0.181" stop-color="#190404"/><stop offset="0.237" stop-color="#140304"/><stop offset="0.279" stop-color="#000000"/><stop offset="0.307" stop-color="#010000"/><stop offset="0.324" stop-color="#0c0202"/><stop offset="0.336" stop-color="#160404"/><stop offset="0.405" stop-color="#270806"/><stop offset="0.525" stop-color="#3a0e07"/><stop offset="0.606" stop-color="#3c0f07"/><stop offset="0.639" stop-color="#390e07"/><stop offset="0.664" stop-color="#2a0806"/><stop offset="0.685" stop-color="#190404"/><stop offset="0.694" stop-color="#140304"/><stop offset="0.705" stop-color="#010000"/><stop offset="0.716" stop-color="#010000"/><stop offset="0.721" stop-color="#0a0102"/><stop offset="0.727" stop-color="#160404"/><stop offset="0.736" stop-color="#200605"/><stop offset="0.782" stop-color="#6a220a"/><stop offset="0.795" stop-color="#812c0d"/><stop offset="0.811" stop-color="#a93812"/><stop offset="0.830" stop-color="#cf3b13"/><stop offset="0.867" stop-color="#f54318"/><stop offset="0.885" stop-color="#ff491b"/><stop offset="0.972" stop-color="#ff682c"/><stop offset="1.000" stop-color="#ff682c"/></linearGradient>
<linearGradient id="g122" gradientUnits="userSpaceOnUse" x1="133.1" x2="506.1" y1="0" y2="0"><stop offset="0.000" stop-color="#0c0202"/><stop offset="0.027" stop-color="#000000"/><stop offset="0.050" stop-color="#020000"/><stop offset="0.091" stop-color="#150304"/><stop offset="0.181" stop-color="#190404"/><stop offset="0.236" stop-color="#130304"/><stop offset="0.279" stop-color="#000000"/><stop offset="0.307" stop-color="#020000"/><stop offset="0.323" stop-color="#0c0202"/><stop offset="0.335" stop-color="#160404"/><stop offset="0.408" stop-color="#270806"/><stop offset="0.528" stop-color="#390e07"/><stop offset="0.613" stop-color="#3a0e07"/><stop offset="0.641" stop-color="#370d07"/><stop offset="0.665" stop-color="#280806"/><stop offset="0.686" stop-color="#180404"/><stop offset="0.696" stop-color="#130304"/><stop offset="0.706" stop-color="#010000"/><stop offset="0.717" stop-color="#010000"/><stop offset="0.723" stop-color="#0a0102"/><stop offset="0.728" stop-color="#160304"/><stop offset="0.737" stop-color="#1f0605"/><stop offset="0.783" stop-color="#67210a"/><stop offset="0.796" stop-color="#7d2a0d"/><stop offset="0.812" stop-color="#a53812"/><stop offset="0.832" stop-color="#cd3b13"/><stop offset="0.877" stop-color="#f84419"/><stop offset="0.893" stop-color="#ff4a1c"/><stop offset="0.976" stop-color="#ff662b"/><stop offset="1.000" stop-color="#ff672b"/></linearGradient>
<linearGradient id="g123" gradientUnits="userSpaceOnUse" x1="133.1" x2="506.1" y1="0" y2="0"><stop offset="0.000" stop-color="#0b0102"/><stop offset="0.024" stop-color="#000000"/><stop offset="0.047" stop-color="#020000"/><stop offset="0.088" stop-color="#150304"/><stop offset="0.181" stop-color="#180404"/><stop offset="0.235" stop-color="#130304"/><stop offset="0.277" stop-color="#000000"/><stop offset="0.306" stop-color="#020000"/><stop offset="0.322" stop-color="#0b0102"/><stop offset="0.334" stop-color="#150304"/><stop offset="0.412" stop-color="#270806"/><stop offset="0.529" stop-color="#380d07"/><stop offset="0.618" stop-color="#390e07"/><stop offset="0.643" stop-color="#350c07"/><stop offset="0.668" stop-color="#260706"/><stop offset="0.689" stop-color="#170404"/><stop offset="0.697" stop-color="#130304"/><stop offset="0.708" stop-color="#010000"/><stop offset="0.718" stop-color="#010000"/><stop offset="0.724" stop-color="#0a0102"/><stop offset="0.729" stop-color="#150304"/><stop offset="0.739" stop-color="#1f0605"/><stop offset="0.783" stop-color="#621f09"/><stop offset="0.798" stop-color="#79290c"/><stop offset="0.815" stop-color="#a53712"/><stop offset="0.834" stop-color="#ca3b13"/><stop offset="0.854" stop-color="#de3d15"/><stop offset="0.886" stop-color="#fb4619"/><stop offset="0.903" stop-color="#ff4b1d"/><stop offset="0.979" stop-color="#ff642a"/><stop offset="1.000" stop-color="#ff652a"/></linearGradient>
<linearGradient id="g124" gradientUnits="userSpaceOnUse" x1="133.1" x2="506.1" y1="0" y2="0"><stop offset="0.000" stop-color="#090102"/><stop offset="0.021" stop-color="#000000"/><stop offset="0.044" stop-color="#020000"/><stop offset="0.087" stop-color="#150304"/><stop offset="0.184" stop-color="#180404"/><stop offset="0.233" stop-color="#130304"/><stop offset="0.276" stop-color="#000000"/><stop offset="0.304" stop-color="#020000"/><stop offset="0.322" stop-color="#0d0202"/><stop offset="0.334" stop-color="#160304"/><stop offset="0.416" stop-color="#270806"/><stop offset="0.532" stop-color="#370d07"/><stop offset="0.626" stop-color="#380d07"/><stop offset="0.647" stop-color="#330b07"/><stop offset="0.670" stop-color="#240706"/><stop offset="0.692" stop-color="#170404"/><stop offset="0.698" stop-color="#130304"/><stop offset="0.708" stop-color="#020000"/><stop offset="0.717" stop-color="#000000"/><stop offset="0.723" stop-color="#040001"/><stop offset="0.729" stop-color="#140304"/><stop offset="0.741" stop-color="#200605"/><stop offset="0.784" stop-color="#601e09"/><stop offset="0.799" stop-color="#75270c"/><stop offset="0.818" stop-color="#a43712"/><stop offset="0.836" stop-color="#c83a13"/><stop offset="0.858" stop-color="#dd3d14"/><stop offset="0.891" stop-color="#fb4519"/><stop offset="0.909" stop-color="#ff4b1c"/><stop offset="0.983" stop-color="#ff6229"/><stop offset="1.000" stop-color="#ff6329"/></linearGradient>
</defs>
<g clip-path="url(#cc)"><g filter="url(#vb)">
<rect x="133.1" y="148.3" width="373.0" height="3.6" fill="url(#g0)"/>
<rect x="133.1" y="151.3" width="373.0" height="3.6" fill="url(#g1)"/>
<rect x="133.1" y="154.3" width="373.0" height="3.6" fill="url(#g2)"/>
<rect x="133.1" y="157.3" width="373.0" height="3.6" fill="url(#g3)"/>
<rect x="133.1" y="160.3" width="373.0" height="3.6" fill="url(#g4)"/>
<rect x="133.1" y="163.3" width="373.0" height="3.6" fill="url(#g5)"/>
<rect x="133.1" y="166.3" width="373.0" height="3.6" fill="url(#g6)"/>
<rect x="133.1" y="169.3" width="373.0" height="3.6" fill="url(#g7)"/>
<rect x="133.1" y="172.3" width="373.0" height="3.6" fill="url(#g8)"/>
<rect x="133.1" y="175.3" width="373.0" height="3.6" fill="url(#g9)"/>
<rect x="133.1" y="178.3" width="373.0" height="3.6" fill="url(#g10)"/>
<rect x="133.1" y="181.3" width="373.0" height="3.6" fill="url(#g11)"/>
<rect x="133.1" y="184.3" width="373.0" height="3.6" fill="url(#g12)"/>
<rect x="133.1" y="187.3" width="373.0" height="3.6" fill="url(#g13)"/>
<rect x="133.1" y="190.3" width="373.0" height="3.6" fill="url(#g14)"/>
<rect x="133.1" y="193.3" width="373.0" height="3.6" fill="url(#g15)"/>
<rect x="133.1" y="196.3" width="373.0" height="3.6" fill="url(#g16)"/>
<rect x="133.1" y="199.3" width="373.0" height="3.6" fill="url(#g17)"/>
<rect x="133.1" y="202.3" width="373.0" height="3.6" fill="url(#g18)"/>
<rect x="133.1" y="205.3" width="373.0" height="3.6" fill="url(#g19)"/>
<rect x="133.1" y="208.3" width="373.0" height="3.6" fill="url(#g20)"/>
<rect x="133.1" y="211.3" width="373.0" height="3.6" fill="url(#g21)"/>
<rect x="133.1" y="214.3" width="373.0" height="3.6" fill="url(#g22)"/>
<rect x="133.1" y="217.3" width="373.0" height="3.6" fill="url(#g23)"/>
<rect x="133.1" y="220.3" width="373.0" height="3.6" fill="url(#g24)"/>
<rect x="133.1" y="223.3" width="373.0" height="3.6" fill="url(#g25)"/>
<rect x="133.1" y="226.3" width="373.0" height="3.6" fill="url(#g26)"/>
<rect x="133.1" y="229.3" width="373.0" height="3.6" fill="url(#g27)"/>
<rect x="133.1" y="232.3" width="373.0" height="3.6" fill="url(#g28)"/>
<rect x="133.1" y="235.3" width="373.0" height="3.6" fill="url(#g29)"/>
<rect x="133.1" y="238.3" width="373.0" height="3.6" fill="url(#g30)"/>
<rect x="133.1" y="241.3" width="373.0" height="3.6" fill="url(#g31)"/>
<rect x="133.1" y="244.3" width="373.0" height="3.6" fill="url(#g32)"/>
<rect x="133.1" y="247.3" width="373.0" height="3.6" fill="url(#g33)"/>
<rect x="133.1" y="250.3" width="373.0" height="3.6" fill="url(#g34)"/>
<rect x="133.1" y="253.3" width="373.0" height="3.6" fill="url(#g35)"/>
<rect x="133.1" y="256.3" width="373.0" height="3.6" fill="url(#g36)"/>
<rect x="133.1" y="259.3" width="373.0" height="3.6" fill="url(#g37)"/>
<rect x="133.1" y="262.3" width="373.0" height="3.6" fill="url(#g38)"/>
<rect x="133.1" y="265.3" width="373.0" height="3.6" fill="url(#g39)"/>
<rect x="133.1" y="268.3" width="373.0" height="3.6" fill="url(#g40)"/>
<rect x="133.1" y="271.3" width="373.0" height="3.6" fill="url(#g41)"/>
<rect x="133.1" y="274.3" width="373.0" height="3.6" fill="url(#g42)"/>
<rect x="133.1" y="277.3" width="373.0" height="3.6" fill="url(#g43)"/>
<rect x="133.1" y="280.3" width="373.0" height="3.6" fill="url(#g44)"/>
<rect x="133.1" y="283.3" width="373.0" height="3.6" fill="url(#g45)"/>
<rect x="133.1" y="286.3" width="373.0" height="3.6" fill="url(#g46)"/>
<rect x="133.1" y="289.3" width="373.0" height="3.6" fill="url(#g47)"/>
<rect x="133.1" y="292.3" width="373.0" height="3.6" fill="url(#g48)"/>
<rect x="133.1" y="295.3" width="373.0" height="3.6" fill="url(#g49)"/>
<rect x="133.1" y="298.3" width="373.0" height="3.6" fill="url(#g50)"/>
<rect x="133.1" y="301.3" width="373.0" height="3.6" fill="url(#g51)"/>
<rect x="133.1" y="304.3" width="373.0" height="3.6" fill="url(#g52)"/>
<rect x="133.1" y="307.3" width="373.0" height="3.6" fill="url(#g53)"/>
<rect x="133.1" y="310.3" width="373.0" height="3.6" fill="url(#g54)"/>
<rect x="133.1" y="313.3" width="373.0" height="3.6" fill="url(#g55)"/>
<rect x="133.1" y="316.3" width="373.0" height="3.6" fill="url(#g56)"/>
<rect x="133.1" y="319.3" width="373.0" height="3.6" fill="url(#g57)"/>
<rect x="133.1" y="322.3" width="373.0" height="3.6" fill="url(#g58)"/>
<rect x="133.1" y="325.3" width="373.0" height="3.6" fill="url(#g59)"/>
<rect x="133.1" y="328.3" width="373.0" height="3.6" fill="url(#g60)"/>
<rect x="133.1" y="331.3" width="373.0" height="3.6" fill="url(#g61)"/>
<rect x="133.1" y="334.3" width="373.0" height="3.6" fill="url(#g62)"/>
<rect x="133.1" y="337.3" width="373.0" height="3.6" fill="url(#g63)"/>
<rect x="133.1" y="340.3" width="373.0" height="3.6" fill="url(#g64)"/>
<rect x="133.1" y="343.3" width="373.0" height="3.6" fill="url(#g65)"/>
<rect x="133.1" y="346.3" width="373.0" height="3.6" fill="url(#g66)"/>
<rect x="133.1" y="349.3" width="373.0" height="3.6" fill="url(#g67)"/>
<rect x="133.1" y="352.3" width="373.0" height="3.6" fill="url(#g68)"/>
<rect x="133.1" y="355.3" width="373.0" height="3.6" fill="url(#g69)"/>
<rect x="133.1" y="358.3" width="373.0" height="3.6" fill="url(#g70)"/>
<rect x="133.1" y="361.3" width="373.0" height="3.6" fill="url(#g71)"/>
<rect x="133.1" y="364.3" width="373.0" height="3.6" fill="url(#g72)"/>
<rect x="133.1" y="367.3" width="373.0" height="3.6" fill="url(#g73)"/>
<rect x="133.1" y="370.3" width="373.0" height="3.6" fill="url(#g74)"/>
<rect x="133.1" y="373.3" width="373.0" height="3.6" fill="url(#g75)"/>
<rect x="133.1" y="376.3" width="373.0" height="3.6" fill="url(#g76)"/>
<rect x="133.1" y="379.3" width="373.0" height="3.6" fill="url(#g77)"/>
<rect x="133.1" y="382.3" width="373.0" height="3.6" fill="url(#g78)"/>
<rect x="133.1" y="385.3" width="373.0" height="3.6" fill="url(#g79)"/>
<rect x="133.1" y="388.3" width="373.0" height="3.6" fill="url(#g80)"/>
<rect x="133.1" y="391.3" width="373.0" height="3.6" fill="url(#g81)"/>
<rect x="133.1" y="394.3" width="373.0" height="3.6" fill="url(#g82)"/>
<rect x="133.1" y="397.3" width="373.0" height="3.6" fill="url(#g83)"/>
<rect x="133.1" y="400.3" width="373.0" height="3.6" fill="url(#g84)"/>
<rect x="133.1" y="403.3" width="373.0" height="3.6" fill="url(#g85)"/>
<rect x="133.1" y="406.3" width="373.0" height="3.6" fill="url(#g86)"/>
<rect x="133.1" y="409.3" width="373.0" height="3.6" fill="url(#g87)"/>
<rect x="133.1" y="412.3" width="373.0" height="3.6" fill="url(#g88)"/>
<rect x="133.1" y="415.3" width="373.0" height="3.6" fill="url(#g89)"/>
<rect x="133.1" y="418.3" width="373.0" height="3.6" fill="url(#g90)"/>
<rect x="133.1" y="421.3" width="373.0" height="3.6" fill="url(#g91)"/>
<rect x="133.1" y="424.3" width="373.0" height="3.6" fill="url(#g92)"/>
<rect x="133.1" y="427.3" width="373.0" height="3.6" fill="url(#g93)"/>
<rect x="133.1" y="430.3" width="373.0" height="3.6" fill="url(#g94)"/>
<rect x="133.1" y="433.3" width="373.0" height="3.6" fill="url(#g95)"/>
<rect x="133.1" y="436.3" width="373.0" height="3.6" fill="url(#g96)"/>
<rect x="133.1" y="439.3" width="373.0" height="3.6" fill="url(#g97)"/>
<rect x="133.1" y="442.3" width="373.0" height="3.6" fill="url(#g98)"/>
<rect x="133.1" y="445.3" width="373.0" height="3.6" fill="url(#g99)"/>
<rect x="133.1" y="448.3" width="373.0" height="3.6" fill="url(#g100)"/>
<rect x="133.1" y="451.3" width="373.0" height="3.6" fill="url(#g101)"/>
<rect x="133.1" y="454.3" width="373.0" height="3.6" fill="url(#g102)"/>
<rect x="133.1" y="457.3" width="373.0" height="3.6" fill="url(#g103)"/>
<rect x="133.1" y="460.3" width="373.0" height="3.6" fill="url(#g104)"/>
<rect x="133.1" y="463.3" width="373.0" height="3.6" fill="url(#g105)"/>
<rect x="133.1" y="466.3" width="373.0" height="3.6" fill="url(#g106)"/>
<rect x="133.1" y="469.3" width="373.0" height="3.6" fill="url(#g107)"/>
<rect x="133.1" y="472.3" width="373.0" height="3.6" fill="url(#g108)"/>
<rect x="133.1" y="475.3" width="373.0" height="3.6" fill="url(#g109)"/>
<rect x="133.1" y="478.3" width="373.0" height="3.6" fill="url(#g110)"/>
<rect x="133.1" y="481.3" width="373.0" height="3.6" fill="url(#g111)"/>
<rect x="133.1" y="484.3" width="373.0" height="3.6" fill="url(#g112)"/>
<rect x="133.1" y="487.3" width="373.0" height="3.6" fill="url(#g113)"/>
<rect x="133.1" y="490.3" width="373.0" height="3.6" fill="url(#g114)"/>
<rect x="133.1" y="493.3" width="373.0" height="3.6" fill="url(#g115)"/>
<rect x="133.1" y="496.3" width="373.0" height="3.6" fill="url(#g116)"/>
<rect x="133.1" y="499.3" width="373.0" height="3.6" fill="url(#g117)"/>
<rect x="133.1" y="502.3" width="373.0" height="3.6" fill="url(#g118)"/>
<rect x="133.1" y="505.3" width="373.0" height="3.6" fill="url(#g119)"/>
<rect x="133.1" y="508.3" width="373.0" height="3.6" fill="url(#g120)"/>
<rect x="133.1" y="511.3" width="373.0" height="3.6" fill="url(#g121)"/>
<rect x="133.1" y="514.3" width="373.0" height="3.6" fill="url(#g122)"/>
<rect x="133.1" y="517.3" width="373.0" height="3.6" fill="url(#g123)"/>
<rect x="133.1" y="520.3" width="373.0" height="3.6" fill="url(#g124)"/>
</g></g>
<g fill="none" stroke="#3a0a00" stroke-opacity="0.8" stroke-width="1.1" stroke-dasharray="1.3 2.1">
<circle cx="319.6" cy="334.8" r="30.9"/>
<circle cx="319.6" cy="334.8" r="61.8"/>
<circle cx="319.6" cy="334.8" r="92.8"/>
<circle cx="319.6" cy="334.8" r="123.7"/>
<circle cx="319.6" cy="334.8" r="154.6"/>
<line x1="325.6" y1="334.8" x2="505.1" y2="334.8"/>
<line x1="325.4" y1="333.2" x2="498.8" y2="286.8"/>
<line x1="324.8" y1="331.8" x2="480.2" y2="242.1"/>
<line x1="323.8" y1="330.6" x2="450.8" y2="203.6"/>
<line x1="322.6" y1="329.6" x2="412.4" y2="174.2"/>
<line x1="321.2" y1="329.0" x2="367.6" y2="155.6"/>
<line x1="319.6" y1="328.8" x2="319.6" y2="149.3"/>
<line x1="318.0" y1="329.0" x2="271.6" y2="155.6"/>
<line x1="316.6" y1="329.6" x2="226.9" y2="174.2"/>
<line x1="315.4" y1="330.6" x2="188.4" y2="203.6"/>
<line x1="314.4" y1="331.8" x2="159.0" y2="242.1"/>
<line x1="313.8" y1="333.2" x2="140.4" y2="286.8"/>
<line x1="313.6" y1="334.8" x2="134.1" y2="334.8"/>
<line x1="313.8" y1="336.4" x2="140.4" y2="382.8"/>
<line x1="314.4" y1="337.8" x2="159.0" y2="427.6"/>
<line x1="315.4" y1="339.0" x2="188.4" y2="466.0"/>
<line x1="316.6" y1="340.0" x2="226.8" y2="495.4"/>
<line x1="318.0" y1="340.6" x2="271.6" y2="514.0"/>
<line x1="319.6" y1="340.8" x2="319.6" y2="520.3"/>
<line x1="321.2" y1="340.6" x2="367.6" y2="514.0"/>
<line x1="322.6" y1="340.0" x2="412.4" y2="495.4"/>
<line x1="323.8" y1="339.0" x2="450.8" y2="466.0"/>
<line x1="324.8" y1="337.8" x2="480.2" y2="427.6"/>
<line x1="325.4" y1="336.4" x2="498.8" y2="382.8"/>
</g>
<circle cx="319.6" cy="334.8" r="185.5" fill="none" stroke="#000" stroke-width="1.8"/>
<circle cx="319.6" cy="334.8" r="3.5" fill="none" stroke="#1a0500" stroke-width="1.1"/>
<circle cx="319.6" cy="334.8" r="6.3" fill="none" stroke="#1a0500" stroke-opacity=".5" stroke-width="0.8"/>
<g font-family="Liberation Sans" font-size="13.8" fill="#1a1a1a" stroke="#1a1a1a" stroke-width="0.2" letter-spacing="0.55">
<text x="308.7" y="147.5">90'</text>
<text x="366.5" y="154.0">75'</text>
<text x="412.2" y="173.7">60'</text>
<text x="451.7" y="202.8">45'</text>
<text x="480.0" y="242.0">30'</text>
<text x="501.0" y="287.4">15'</text>
<text x="506.0" y="340.0">0'</text>
<text x="499.7" y="396.6">345'</text>
<text x="480.0" y="441.6">330'</text>
<text x="450.3" y="480.9">315'</text>
<text x="412.2" y="511.1">300'</text>
<text x="367.1" y="529.7">285'</text>
<text x="304.4" y="536.0">270'</text>
<text x="242.9" y="529.7">255'</text>
<text x="197.2" y="511.8">240'</text>
<text x="158.0" y="481.1">225'</text>
<text x="128.0" y="442.2">210'</text>
<text x="109.7" y="396.4">195'</text>
<text x="103.2" y="341.0">180'</text>
<text x="110.6" y="287.2">165'</text>
<text x="129.1" y="242.5">150'</text>
<text x="158.4" y="202.8">135'</text>
<text x="197.4" y="172.9">120'</text>
<text x="242.9" y="154.8">105'</text>
<text x="322.5" y="340" font-size="12.5" fill="#2a0a04">0'</text>
<text x="385.7" y="340" font-size="12.5" fill="#1a0604">20'</text>
<text x="444.7" y="340" font-size="12.5" fill="#1a0604">40'</text>
</g>
</svg>
<div class="t" style="left:16.5px;top:545.4px;color:#333">TechWiz</div>
<!-- ===== sheet tab bar ===== -->
<div class="a" style="left:10px;top:558px;width:687px;height:15px;background:#f0f0f0"></div>
<svg class="a" style="left:10px;top:556px" width="687" height="18">
<path d="M53.3 2.3L60.7 14.5H93L100 2.3H686" fill="#f0f0f0" stroke="#6a6a6a" stroke-width="1"/>
<path d="M1 2.3H53.3" stroke="#7a7a7a" stroke-width="1"/>
<path d="M1 15.3H53" stroke="#9a9a9a" stroke-width="1"/>
<path d="M13.3 3V15M26.8 3V15M39.7 3V15" stroke="#b4b4b4" stroke-width="1"/>
<g fill="#111"><rect x="3.6" y="5" width="1.2" height="8"/><path d="M10 5V13L5.2 9Z"/><path d="M22.5 5V13L17.7 9Z"/><path d="M31 5V13L35.8 9Z"/><path d="M43.5 5V13L48.3 9Z"/><rect x="48.5" y="5" width="1.2" height="8"/></g>
</svg>
<div class="t" style="left:72.7px;top:561px;font-size:9.5px;color:#222">View 1</div>
<!-- ===== right panel ===== -->
<div class="a" style="left:697px;top:91px;width:1px;height:482px;background:#c4c4c4"></div>
<div class="a" style="left:698px;top:91px;width:3px;height:482px;background:#fafafa"></div>
<div class="a" style="left:701px;top:91px;width:179px;height:482px;background:#f0f0f0"></div>
<div class="a" style="left:701px;top:91px;width:179px;height:14px;background:linear-gradient(#cbd8e8,#dde6f1)"></div>
<div class="t m" style="left:705px;top:95px;font-size:8.6px;color:#1c2636;-webkit-text-stroke:0.25px #1c2636">Polar Chart</div>
<svg class="a" style="left:854px;top:95px" width="8" height="8"><path d="M2 0.5H6V4.5H7V5.5H4.5V7.5H3.5V5.5H1V4.5H2Z" fill="#1c2636"/><rect x="4.5" y="1" width="1" height="3.5" fill="#fff"/></svg>
<div class="a" style="left:868px;top:94.5px;width:9.5px;height:9.5px;background:#d04a44"></div>
<svg class="a" style="left:868px;top:94.5px" width="10" height="10"><path d="M3 3L6.6 6.6M6.6 3L3 6.6" stroke="#fff" stroke-width="1.1"/></svg>
<!-- group 1 Data Block -->
<div class="gb" style="left:708px;top:115.5px;width:157.5px;height:50px"></div>
<div class="t" style="left:717px;top:111.3px;padding:0 2px;background:#f0f0f0;color:#1a1a1a">Data Block</div>
<div class="t" style="left:713.2px;top:122.8px">Wavelength</div>
<div class="t" style="left:740.3px;top:133.8px">/ Color</div>
<div class="t" style="left:713px;top:146.8px;letter-spacing:-0.15px">Voltage/Time</div>
<div class="a" style="left:771px;top:123.5px;width:88px;height:17px;border:1px solid #adadad;background:#e5e5e5"></div>
<div class="t" style="left:774.4px;top:127.6px">550</div>
<svg class="a" style="left:848px;top:129px" width="8" height="5"><path d="M0.5 0.5L4 4L7.5 0.5" fill="none" stroke="#444" stroke-width="1"/></svg>
<div class="a" style="left:771px;top:143.5px;width:88px;height:17px;border:1px solid #adadad;background:#e5e5e5"></div>
<div class="t" style="left:774.4px;top:147.8px">0.00</div>
<div class="t" style="left:797.5px;top:147.8px">msec</div>
<svg class="a" style="left:848px;top:149px" width="8" height="5"><path d="M0.5 0.5L4 4L7.5 0.5" fill="none" stroke="#444" stroke-width="1"/></svg>
<!-- group 2 RGB -->
<div class="gb" style="left:708px;top:173px;width:157px;height:85px"></div>
<div class="a" style="left:713px;top:179.5px;width:146px;height:16px;border:1px solid #e6e6e6;background:#f3f3f3"></div>
<div class="t" style="left:713px;width:146px;text-align:center;top:184.2px;font-weight:bold;color:#141414">RGB [a.u]</div>
<div class="t" style="left:713px;top:203.5px;letter-spacing:-0.2px">Min / Max</div>
<div class="a" style="left:754.5px;top:199.5px;width:104.5px;height:16px;border:1px solid #9c9c9c;background:#f0f0f0"></div>
<div class="t" style="left:754.5px;width:104.5px;text-align:center;top:203.5px">0 / 0</div>
<div class="t" style="left:713px;top:217px">Current</div>
<div class="t" style="left:713px;top:225.8px;letter-spacing:-0.2px">Min / Max</div>
<div class="a" style="left:754.5px;top:219px;width:104.5px;height:16px;border:1px solid #9c9c9c;background:#f0f0f0"></div>
<div class="t" style="left:754.5px;width:104.5px;text-align:center;top:223px">0 / 0</div>
<div class="t" style="left:713px;top:237.6px">Current</div>
<div class="t" style="left:713px;top:245.3px">Average</div>
<div class="a" style="left:754.5px;top:238px;width:104.5px;height:16px;border:1px solid #9c9c9c;background:#f0f0f0"></div>
<div class="t" style="left:754.5px;width:104.5px;text-align:center;top:242px">-</div>
<!-- group 3 View Control -->
<div class="gb" style="left:708px;top:269px;width:157px;height:212px"></div>
<div class="t" style="left:717px;top:265.1px;padding:0 2px;background:#f0f0f0;color:#1a1a1a">View Control</div>
<div class="cb" style="left:713px;top:281px"></div>
<svg class="a" style="left:713px;top:281px" width="10" height="10"><path d="M2 5L4 7.3L8.3 2.3" fill="none" stroke="#a6a6a6" stroke-width="1"/></svg>
<div class="t g" style="left:725.4px;top:280.8px">Flood</div>
<div class="cb" style="left:713px;top:298.5px"></div>
<svg class="a" style="left:713px;top:298.5px" width="10" height="10"><path d="M2 5L4 7.3L8.3 2.3" fill="none" stroke="#a6a6a6" stroke-width="1"/></svg>
<div class="t g" style="left:725.4px;top:298.8px">Line</div>
<div class="t m" style="left:758px;top:299px">Thickness</div>
<div class="a" style="left:801px;top:295.5px;width:58px;height:16px;border:1px solid #e2e2e2;background:#fff"></div>
<div class="a" style="left:803px;top:297.5px;width:34px;height:12px;background:#efefef"></div>
<div class="t g" style="left:804.7px;top:299.3px">1.0</div>
<svg class="a" style="left:847px;top:302px" width="8" height="5"><path d="M0.5 0.5L4 4L7.5 0.5" fill="none" stroke="#b0b0b0" stroke-width="1"/></svg>
<div class="rd" style="left:754.5px;top:316.5px"></div>
<div class="t g" style="left:767px;top:316.8px;letter-spacing:-0.2px">Multiple Color</div>
<div class="rd" style="left:754.5px;top:332px"></div>
<div class="a" style="left:757.8px;top:335.3px;width:3.4px;height:3.4px;border-radius:50%;background:#bdbdbd"></div>
<div class="t g" style="left:767px;top:332.3px">Mono</div>
<div class="a" style="left:801.5px;top:329px;width:57px;height:15.5px;border:1px solid #6f97b5;background:#dfe6ec"></div>
<div class="a" style="left:803px;top:330.5px;width:37px;height:12.5px;background:#fff;border-right:1px solid #c8c8c8"></div>
<div class="a" style="left:843px;top:330.5px;width:14.5px;height:12.5px;background:#d4d4d4"></div>
<svg class="a" style="left:846.5px;top:335px" width="8" height="5"><path d="M0.5 0.5L4 4L7.5 0.5" fill="none" stroke="#a8a8a8" stroke-width="1"/></svg>
<div class="cb" style="left:713px;top:353px"></div>
<div class="t g" style="left:725.4px;top:353.5px">Highlight Line</div>
<div class="a" style="left:801px;top:349px;width:58px;height:16.5px;border:1px solid #dedede;background:#efefef"></div>
<div class="t g" style="left:801px;width:55.5px;text-align:right;top:353.8px">10</div>
<div class="t m" style="left:758px;top:373.8px">Thickness</div>
<div class="a" style="left:801px;top:370px;width:58px;height:16px;border:1px solid #e2e2e2;background:#fff"></div>
<div class="a" style="left:803px;top:372px;width:34px;height:12px;background:#efefef"></div>
<div class="t g" style="left:804.7px;top:374px">1.0</div>
<svg class="a" style="left:847px;top:376.5px" width="8" height="5"><path d="M0.5 0.5L4 4L7.5 0.5" fill="none" stroke="#b0b0b0" stroke-width="1"/></svg>
<div class="t m" style="left:776.8px;top:393.8px">Style</div>
<div class="a" style="left:801px;top:390.5px;width:58px;height:16px;border:1px solid #c8c8c8;background:#cccccc"></div>
<svg class="a" style="left:802px;top:397px" width="56" height="4"><path d="M1 1.5H42" stroke="#2f9ccc" stroke-width="1.2" stroke-dasharray="3 2"/><path d="M45 0.5L48.5 3L52 0.5" fill="none" stroke="#b4b4b4" stroke-width="0.9"/></svg>
<div class="rd" style="left:754.5px;top:412.5px"></div>
<div class="t g" style="left:767px;top:413.1px">Automatic</div>
<div class="rd" style="left:754.5px;top:429.5px"></div>
<div class="a" style="left:757.8px;top:432.8px;width:3.4px;height:3.4px;border-radius:50%;background:#bdbdbd"></div>
<div class="t g" style="left:767px;top:430.1px">Specific</div>
<div class="a" style="left:801.5px;top:426.5px;width:57px;height:15px;border:1px solid #6f97b5;background:#dfe6ec"></div>
<div class="a" style="left:803px;top:428px;width:37px;height:12px;background:#fff;border-right:1px solid #c8c8c8"></div>
<div class="a" style="left:843px;top:428px;width:14.5px;height:12px;background:#d4d4d4"></div>
<svg class="a" style="left:846.5px;top:432px" width="8" height="5"><path d="M0.5 0.5L4 4L7.5 0.5" fill="none" stroke="#a8a8a8" stroke-width="1"/></svg>
<div class="cb" style="left:713px;top:449.5px"></div>
<svg class="a" style="left:713px;top:449.5px" width="10" height="10"><path d="M2 5L4 7.3L8.3 2.3" fill="none" stroke="#a6a6a6" stroke-width="1"/></svg>
<div class="t g" style="left:725.4px;top:450.4px">Legend</div>
<div class="dbtn" style="left:801.5px;top:446.5px;width:57px;height:15px;padding-top:2.5px">Legend...</div>
<div class="cb" style="left:713px;top:467px"></div>
<div class="t g" style="left:725.4px;top:468.1px">Using Gray-Scale Color Level</div>
<!-- group 4 buttons -->
<div class="gb" style="left:708px;top:490px;width:157px;height:83px"></div>
<div class="btn m" style="left:714px;top:495.5px;width:66px;height:15px;padding-top:3px">Option</div>
<div class="btn m" style="left:792.5px;top:495.5px;width:66px;height:15px;padding-top:3px">Viewpoint</div>
<div class="dbtn" style="left:714px;top:514px;width:66px;height:25px;padding-top:1.5px">Cross Section<br>[ Theta/Phi ]</div>
<div class="dbtn" style="left:792.5px;top:514px;width:66px;height:25px;padding-top:1.5px">Cross Section<br>[ Voltage/Time ]</div>
<div class="btn m" style="left:714px;top:541.5px;width:66px;height:15px;padding-top:3px">Data Table</div>
<div class="dbtn" style="left:792.5px;top:541.5px;width:66px;height:25.5px;padding-top:1.5px">Find<br>Min &amp; Max Data</div>
<div class="dbtn" style="left:714px;top:559.5px;width:66px;height:15px;padding-top:3px">Contrast</div>
<div class="a" style="left:701px;top:573px;width:179px;height:1px;background:#dadada"></div>

<!-- ===== status bar ===== -->
<div class="a" style="left:9px;top:573px;width:871px;height:15px;background:#f0f0f0;border-top:1px solid #dadada"></div>
<div class="sep" style="left:358px;top:574px;height:14px"></div>
<div class="sep" style="left:519px;top:574px;height:14px"></div>
<div class="sep" style="left:624px;top:574px;height:14px"></div>
<div class="sep" style="left:730px;top:574px;height:14px"></div>
<div class="sep" style="left:797px;top:574px;height:14px"></div>
<div class="sep" style="left:818px;top:574px;height:14px"></div>
<div class="sep" style="left:842px;top:574px;height:14px"></div>
<div class="sep" style="left:866px;top:574px;height:14px"></div>
<div class="t" style="left:362.4px;top:577.6px;color:#222">Zoom : 100 %</div>
<div class="t" style="left:523px;top:577.6px;color:#222">Angle : -</div>
<div class="t" style="left:629px;top:577.6px;color:#222">Mode : Pan</div>
<div class="t" style="left:734.5px;top:578.3px;color:#222">16,0,24,1018</div>
<div class="t" style="left:801px;top:578.3px;color:#222;letter-spacing:-0.3px">CAP</div>
<div class="t" style="left:822px;top:578.3px;color:#222;letter-spacing:-0.4px">NUM</div>
<div class="t" style="left:846px;top:578.3px;color:#9a9a9a;letter-spacing:-0.4px">SCRL</div>
<svg class="a" style="left:870px;top:578px" width="10" height="10"><g fill="#b8b8b8"><rect x="6" y="2" width="1" height="1"/><rect x="4" y="4" width="1" height="1"/><rect x="6" y="4" width="1" height="1"/><rect x="2" y="6" width="1" height="1"/><rect x="4" y="6" width="1" height="1"/><rect x="6" y="6" width="1" height="1"/></g></svg>

</body></html>
